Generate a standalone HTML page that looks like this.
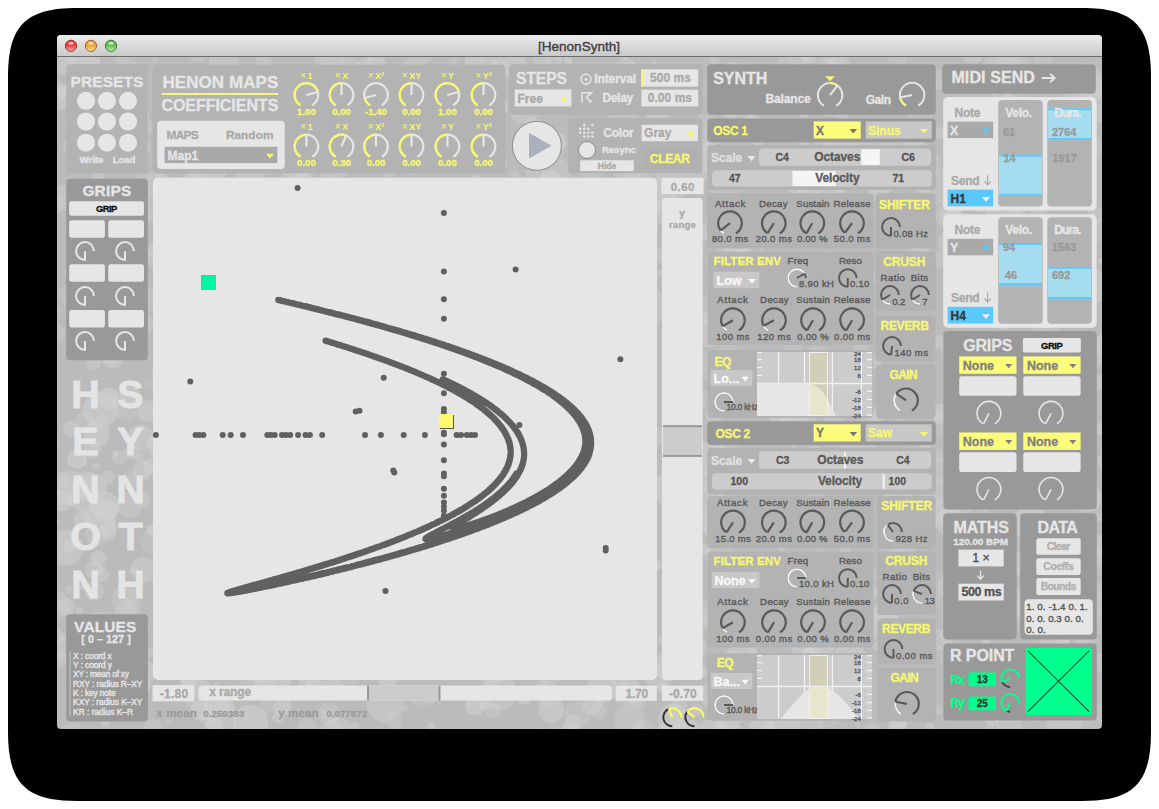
<!DOCTYPE html><html><head><meta charset="utf-8"><style>html,body{margin:0;padding:0;background:#fff;overflow:hidden}svg{display:block}</style></head><body><svg width="1159" height="809" viewBox="0 0 1159 809" font-family='"Liberation Sans", sans-serif'>
<defs><linearGradient id="tb" x1="0" y1="0" x2="0" y2="1"><stop offset="0" stop-color="#ececec"/><stop offset="1" stop-color="#c9c9c9"/></linearGradient><clipPath id="win"><rect x="57" y="57" width="1045" height="672"/></clipPath><clipPath id="plot"><rect x="153" y="177.5" width="504" height="502.5" rx="5"/></clipPath></defs>
<rect x="0" y="0" width="1159" height="809" rx="0" fill="#ffffff" />
<path d="M77 8H1082C1133.3 8 1151 25.7 1151 77V732C1151 783.3 1133.3 801 1082 801H77C25.7 801 8 783.3 8 732V77C8 25.7 25.7 8 77 8Z" fill="#000"/>
<rect x="57" y="35" width="1045" height="694" rx="4" fill="#bbbbbb" />
<g clip-path="url(#win)">
<circle cx="393.26" cy="154.09" r="15" fill="#d2d2d2" fill-opacity="0.26"/>
<circle cx="920.55" cy="114.95" r="13" fill="#d2d2d2" fill-opacity="0.27"/>
<circle cx="587.88" cy="75.87" r="9" fill="#d2d2d2" fill-opacity="0.38"/>
<circle cx="305.1" cy="430.22" r="3" fill="#d2d2d2" fill-opacity="0.5"/>
<circle cx="181.23" cy="204.03" r="15" fill="#d2d2d2" fill-opacity="0.42"/>
<circle cx="115.57" cy="454.02" r="3" fill="#d2d2d2" fill-opacity="0.54"/>
<circle cx="99.38" cy="642.34" r="7" fill="#d2d2d2" fill-opacity="0.38"/>
<circle cx="623.13" cy="443.93" r="11" fill="#d2d2d2" fill-opacity="0.49"/>
<circle cx="241.57" cy="451.3" r="15" fill="#d2d2d2" fill-opacity="0.31"/>
<circle cx="153.28" cy="541.36" r="13" fill="#d2d2d2" fill-opacity="0.27"/>
<circle cx="268.32" cy="519.48" r="9" fill="#d2d2d2" fill-opacity="0.48"/>
<circle cx="543.54" cy="687.17" r="8" fill="#d2d2d2" fill-opacity="0.34"/>
<circle cx="892.04" cy="532.31" r="6" fill="#d2d2d2" fill-opacity="0.27"/>
<circle cx="368.26" cy="391.63" r="8" fill="#d2d2d2" fill-opacity="0.47"/>
<circle cx="355.21" cy="726.32" r="4" fill="#d2d2d2" fill-opacity="0.4"/>
<circle cx="224.86" cy="286.02" r="10" fill="#d2d2d2" fill-opacity="0.38"/>
<circle cx="1069.74" cy="103.56" r="11" fill="#d2d2d2" fill-opacity="0.42"/>
<circle cx="978.01" cy="266.49" r="18" fill="#d2d2d2" fill-opacity="0.36"/>
<circle cx="576.48" cy="599.86" r="4" fill="#d2d2d2" fill-opacity="0.5"/>
<circle cx="1051.36" cy="377.13" r="15" fill="#d2d2d2" fill-opacity="0.27"/>
<circle cx="825.03" cy="263.63" r="13" fill="#d2d2d2" fill-opacity="0.55"/>
<circle cx="921.24" cy="246.37" r="9" fill="#d2d2d2" fill-opacity="0.52"/>
<circle cx="417.83" cy="699.05" r="8" fill="#d2d2d2" fill-opacity="0.3"/>
<circle cx="174.12" cy="90.68" r="7" fill="#d2d2d2" fill-opacity="0.29"/>
<circle cx="312.47" cy="319.76" r="10" fill="#d2d2d2" fill-opacity="0.27"/>
<circle cx="526.14" cy="429.11" r="5" fill="#d2d2d2" fill-opacity="0.5"/>
<circle cx="965.82" cy="242.11" r="9" fill="#d2d2d2" fill-opacity="0.55"/>
<circle cx="773.69" cy="312.5" r="6" fill="#d2d2d2" fill-opacity="0.3"/>
<circle cx="236.79" cy="210.05" r="6" fill="#d2d2d2" fill-opacity="0.25"/>
<circle cx="930.96" cy="175.82" r="7" fill="#d2d2d2" fill-opacity="0.25"/>
<circle cx="494.08" cy="304.78" r="13" fill="#d2d2d2" fill-opacity="0.35"/>
<circle cx="183.02" cy="642.85" r="13" fill="#d2d2d2" fill-opacity="0.45"/>
<circle cx="834.17" cy="365.08" r="15" fill="#d2d2d2" fill-opacity="0.49"/>
<circle cx="465.92" cy="325.3" r="4" fill="#d2d2d2" fill-opacity="0.39"/>
<circle cx="474.47" cy="181.52" r="6" fill="#d2d2d2" fill-opacity="0.38"/>
<circle cx="166.52" cy="464.5" r="4" fill="#d2d2d2" fill-opacity="0.25"/>
<circle cx="210.34" cy="120.01" r="8" fill="#d2d2d2" fill-opacity="0.43"/>
<circle cx="124.53" cy="193.49" r="9" fill="#d2d2d2" fill-opacity="0.29"/>
<circle cx="317.39" cy="289.7" r="8" fill="#d2d2d2" fill-opacity="0.39"/>
<circle cx="172.27" cy="386.77" r="10" fill="#d2d2d2" fill-opacity="0.39"/>
<circle cx="380.56" cy="149.44" r="18" fill="#d2d2d2" fill-opacity="0.35"/>
<circle cx="330.64" cy="621.91" r="5" fill="#d2d2d2" fill-opacity="0.4"/>
<circle cx="267.53" cy="706.89" r="8" fill="#d2d2d2" fill-opacity="0.29"/>
<circle cx="625.76" cy="68.66" r="11" fill="#d2d2d2" fill-opacity="0.34"/>
<circle cx="731.49" cy="112.8" r="7" fill="#d2d2d2" fill-opacity="0.41"/>
<circle cx="1012.75" cy="295.43" r="6" fill="#d2d2d2" fill-opacity="0.41"/>
<circle cx="875.8" cy="277.47" r="6" fill="#d2d2d2" fill-opacity="0.43"/>
<circle cx="885.7" cy="573.24" r="6" fill="#d2d2d2" fill-opacity="0.49"/>
<circle cx="917.43" cy="560.51" r="6" fill="#d2d2d2" fill-opacity="0.31"/>
<circle cx="572.35" cy="554.39" r="3" fill="#d2d2d2" fill-opacity="0.49"/>
<circle cx="550.57" cy="183.62" r="13" fill="#d2d2d2" fill-opacity="0.54"/>
<circle cx="524.06" cy="696.54" r="8" fill="#d2d2d2" fill-opacity="0.54"/>
<circle cx="436.51" cy="202.12" r="6" fill="#d2d2d2" fill-opacity="0.39"/>
<circle cx="408" cy="383.03" r="13" fill="#d2d2d2" fill-opacity="0.5"/>
<circle cx="558.24" cy="500.55" r="15" fill="#d2d2d2" fill-opacity="0.28"/>
<circle cx="750.22" cy="677.75" r="18" fill="#d2d2d2" fill-opacity="0.48"/>
<circle cx="556.71" cy="173.18" r="15" fill="#d2d2d2" fill-opacity="0.35"/>
<circle cx="898.87" cy="720.44" r="9" fill="#d2d2d2" fill-opacity="0.39"/>
<circle cx="837.95" cy="108.59" r="5" fill="#d2d2d2" fill-opacity="0.3"/>
<circle cx="184.66" cy="154.29" r="10" fill="#d2d2d2" fill-opacity="0.49"/>
<circle cx="204.94" cy="620.29" r="10" fill="#d2d2d2" fill-opacity="0.45"/>
<circle cx="421.43" cy="428.58" r="5" fill="#d2d2d2" fill-opacity="0.26"/>
<circle cx="897.32" cy="551.2" r="4" fill="#d2d2d2" fill-opacity="0.41"/>
<circle cx="1039.64" cy="349.33" r="6" fill="#d2d2d2" fill-opacity="0.5"/>
<circle cx="273.7" cy="223.77" r="7" fill="#d2d2d2" fill-opacity="0.4"/>
<circle cx="859.5" cy="274.93" r="11" fill="#d2d2d2" fill-opacity="0.38"/>
<circle cx="188.94" cy="677.91" r="8" fill="#d2d2d2" fill-opacity="0.52"/>
<circle cx="752.22" cy="612.38" r="11" fill="#d2d2d2" fill-opacity="0.38"/>
<circle cx="1022.78" cy="396.14" r="11" fill="#d2d2d2" fill-opacity="0.3"/>
<circle cx="591.18" cy="652.24" r="5" fill="#d2d2d2" fill-opacity="0.43"/>
<circle cx="872.6" cy="153.36" r="5" fill="#d2d2d2" fill-opacity="0.39"/>
<circle cx="818.7" cy="433.97" r="8" fill="#d2d2d2" fill-opacity="0.45"/>
<circle cx="612.57" cy="382.92" r="4" fill="#d2d2d2" fill-opacity="0.51"/>
<circle cx="110.23" cy="182" r="3" fill="#d2d2d2" fill-opacity="0.48"/>
<circle cx="588.18" cy="437.59" r="4" fill="#d2d2d2" fill-opacity="0.38"/>
<circle cx="699.28" cy="398.83" r="11" fill="#d2d2d2" fill-opacity="0.31"/>
<circle cx="343.82" cy="400.63" r="10" fill="#d2d2d2" fill-opacity="0.4"/>
<circle cx="312.52" cy="411.01" r="7" fill="#d2d2d2" fill-opacity="0.53"/>
<circle cx="996.32" cy="189.79" r="10" fill="#d2d2d2" fill-opacity="0.29"/>
<circle cx="178.92" cy="355.06" r="4" fill="#d2d2d2" fill-opacity="0.45"/>
<circle cx="504.04" cy="196.76" r="7" fill="#d2d2d2" fill-opacity="0.49"/>
<circle cx="1000.85" cy="156.57" r="18" fill="#d2d2d2" fill-opacity="0.44"/>
<circle cx="438.15" cy="224.64" r="5" fill="#d2d2d2" fill-opacity="0.54"/>
<circle cx="282.76" cy="707.23" r="9" fill="#d2d2d2" fill-opacity="0.52"/>
<circle cx="222.56" cy="510.8" r="6" fill="#d2d2d2" fill-opacity="0.3"/>
<circle cx="507.41" cy="405.77" r="8" fill="#d2d2d2" fill-opacity="0.38"/>
<circle cx="428.01" cy="113.61" r="8" fill="#d2d2d2" fill-opacity="0.26"/>
<circle cx="637.29" cy="353.92" r="3" fill="#d2d2d2" fill-opacity="0.37"/>
<circle cx="598.48" cy="253.86" r="4" fill="#d2d2d2" fill-opacity="0.28"/>
<circle cx="1023.66" cy="207.7" r="4" fill="#d2d2d2" fill-opacity="0.28"/>
<circle cx="338.24" cy="675.07" r="5" fill="#d2d2d2" fill-opacity="0.33"/>
<circle cx="187.33" cy="341.36" r="15" fill="#d2d2d2" fill-opacity="0.5"/>
<circle cx="324.13" cy="153.06" r="11" fill="#d2d2d2" fill-opacity="0.42"/>
<circle cx="792.44" cy="111.73" r="3" fill="#d2d2d2" fill-opacity="0.49"/>
<circle cx="244.34" cy="667.75" r="7" fill="#d2d2d2" fill-opacity="0.53"/>
<circle cx="722.51" cy="603.12" r="4" fill="#d2d2d2" fill-opacity="0.43"/>
<circle cx="285.75" cy="232.47" r="4" fill="#d2d2d2" fill-opacity="0.39"/>
<circle cx="409.5" cy="431.61" r="7" fill="#d2d2d2" fill-opacity="0.44"/>
<circle cx="95.8" cy="539.58" r="4" fill="#d2d2d2" fill-opacity="0.54"/>
<circle cx="327.61" cy="174.99" r="7" fill="#d2d2d2" fill-opacity="0.44"/>
<circle cx="612.95" cy="192.05" r="10" fill="#d2d2d2" fill-opacity="0.4"/>
<circle cx="238.57" cy="289.43" r="3" fill="#d2d2d2" fill-opacity="0.55"/>
<circle cx="89.17" cy="62.72" r="11" fill="#d2d2d2" fill-opacity="0.42"/>
<circle cx="250.82" cy="377.58" r="10" fill="#d2d2d2" fill-opacity="0.28"/>
<circle cx="918.06" cy="348.2" r="10" fill="#d2d2d2" fill-opacity="0.41"/>
<circle cx="992.05" cy="719.52" r="7" fill="#d2d2d2" fill-opacity="0.46"/>
<circle cx="1091.39" cy="286.47" r="18" fill="#d2d2d2" fill-opacity="0.47"/>
<circle cx="198.1" cy="732.71" r="3" fill="#d2d2d2" fill-opacity="0.5"/>
<circle cx="65.11" cy="481.56" r="7" fill="#d2d2d2" fill-opacity="0.38"/>
<circle cx="108.73" cy="509.01" r="9" fill="#d2d2d2" fill-opacity="0.51"/>
<circle cx="760.78" cy="244.53" r="6" fill="#d2d2d2" fill-opacity="0.46"/>
<circle cx="97.95" cy="177.89" r="7" fill="#d2d2d2" fill-opacity="0.38"/>
<circle cx="329.04" cy="713.63" r="11" fill="#d2d2d2" fill-opacity="0.35"/>
<circle cx="86.51" cy="658.85" r="6" fill="#d2d2d2" fill-opacity="0.36"/>
<circle cx="51.13" cy="313.32" r="10" fill="#d2d2d2" fill-opacity="0.33"/>
<circle cx="745.38" cy="221.24" r="3" fill="#d2d2d2" fill-opacity="0.28"/>
<circle cx="916.07" cy="149.27" r="13" fill="#d2d2d2" fill-opacity="0.26"/>
<circle cx="73.84" cy="259.93" r="6" fill="#d2d2d2" fill-opacity="0.28"/>
<circle cx="1065.1" cy="638.74" r="5" fill="#d2d2d2" fill-opacity="0.45"/>
<circle cx="808.95" cy="656.57" r="9" fill="#d2d2d2" fill-opacity="0.48"/>
<circle cx="813.92" cy="390.99" r="7" fill="#d2d2d2" fill-opacity="0.47"/>
<circle cx="731.81" cy="80.21" r="18" fill="#d2d2d2" fill-opacity="0.52"/>
<circle cx="714.97" cy="556.36" r="11" fill="#d2d2d2" fill-opacity="0.29"/>
<circle cx="605.18" cy="398.02" r="3" fill="#d2d2d2" fill-opacity="0.5"/>
<circle cx="669.11" cy="666.05" r="15" fill="#d2d2d2" fill-opacity="0.54"/>
<circle cx="731.46" cy="108.71" r="3" fill="#d2d2d2" fill-opacity="0.29"/>
<circle cx="432.35" cy="122.39" r="10" fill="#d2d2d2" fill-opacity="0.42"/>
<circle cx="715.43" cy="482.1" r="15" fill="#d2d2d2" fill-opacity="0.32"/>
<circle cx="329.62" cy="365.29" r="4" fill="#d2d2d2" fill-opacity="0.47"/>
<circle cx="583.15" cy="419.29" r="15" fill="#d2d2d2" fill-opacity="0.41"/>
<circle cx="840.47" cy="376.96" r="4" fill="#d2d2d2" fill-opacity="0.5"/>
<circle cx="298.87" cy="571.94" r="6" fill="#d2d2d2" fill-opacity="0.47"/>
<circle cx="1084.28" cy="390.82" r="9" fill="#d2d2d2" fill-opacity="0.27"/>
<circle cx="1015.09" cy="248.25" r="3" fill="#d2d2d2" fill-opacity="0.44"/>
<circle cx="731.33" cy="103.46" r="5" fill="#d2d2d2" fill-opacity="0.35"/>
<circle cx="740.63" cy="528.09" r="13" fill="#d2d2d2" fill-opacity="0.42"/>
<circle cx="63.22" cy="91.86" r="7" fill="#d2d2d2" fill-opacity="0.54"/>
<circle cx="155.49" cy="200.21" r="10" fill="#d2d2d2" fill-opacity="0.34"/>
<circle cx="597.53" cy="370.62" r="10" fill="#d2d2d2" fill-opacity="0.48"/>
<circle cx="1102.9" cy="428.86" r="7" fill="#d2d2d2" fill-opacity="0.54"/>
<circle cx="1042.43" cy="62.08" r="10" fill="#d2d2d2" fill-opacity="0.27"/>
<circle cx="587.02" cy="736.28" r="7" fill="#d2d2d2" fill-opacity="0.37"/>
<circle cx="1021.55" cy="692.07" r="4" fill="#d2d2d2" fill-opacity="0.42"/>
<circle cx="200.25" cy="411.61" r="8" fill="#d2d2d2" fill-opacity="0.29"/>
<circle cx="919.43" cy="401.03" r="4" fill="#d2d2d2" fill-opacity="0.46"/>
<circle cx="295.27" cy="669.42" r="10" fill="#d2d2d2" fill-opacity="0.37"/>
<circle cx="218.61" cy="705.47" r="15" fill="#d2d2d2" fill-opacity="0.39"/>
<circle cx="370.07" cy="147.09" r="8" fill="#d2d2d2" fill-opacity="0.36"/>
<circle cx="178.16" cy="278.61" r="8" fill="#d2d2d2" fill-opacity="0.48"/>
<circle cx="939.46" cy="132.83" r="6" fill="#d2d2d2" fill-opacity="0.46"/>
<circle cx="1005.66" cy="249.98" r="8" fill="#d2d2d2" fill-opacity="0.27"/>
<circle cx="463.57" cy="650.28" r="4" fill="#d2d2d2" fill-opacity="0.36"/>
<circle cx="503.74" cy="239.86" r="3" fill="#d2d2d2" fill-opacity="0.33"/>
<circle cx="104.71" cy="506.76" r="15" fill="#d2d2d2" fill-opacity="0.53"/>
<circle cx="314.28" cy="233.35" r="11" fill="#d2d2d2" fill-opacity="0.34"/>
<circle cx="869.57" cy="591.75" r="9" fill="#d2d2d2" fill-opacity="0.52"/>
<circle cx="910.68" cy="485.32" r="11" fill="#d2d2d2" fill-opacity="0.41"/>
<circle cx="812.75" cy="84.14" r="18" fill="#d2d2d2" fill-opacity="0.37"/>
<circle cx="701.81" cy="145.62" r="7" fill="#d2d2d2" fill-opacity="0.4"/>
<circle cx="1016.62" cy="429.57" r="5" fill="#d2d2d2" fill-opacity="0.39"/>
<circle cx="414.28" cy="255.46" r="18" fill="#d2d2d2" fill-opacity="0.47"/>
<circle cx="741.99" cy="330.28" r="6" fill="#d2d2d2" fill-opacity="0.34"/>
<circle cx="640.76" cy="322.11" r="5" fill="#d2d2d2" fill-opacity="0.44"/>
<circle cx="129.68" cy="395.42" r="10" fill="#d2d2d2" fill-opacity="0.42"/>
<circle cx="530.17" cy="279.66" r="10" fill="#d2d2d2" fill-opacity="0.38"/>
<circle cx="630.65" cy="218.42" r="5" fill="#d2d2d2" fill-opacity="0.35"/>
<circle cx="146.56" cy="215" r="7" fill="#d2d2d2" fill-opacity="0.49"/>
<circle cx="264.27" cy="63.86" r="9" fill="#d2d2d2" fill-opacity="0.36"/>
<circle cx="840.59" cy="194.9" r="7" fill="#d2d2d2" fill-opacity="0.35"/>
<circle cx="115.78" cy="241.49" r="8" fill="#d2d2d2" fill-opacity="0.29"/>
<circle cx="583.6" cy="484.44" r="6" fill="#d2d2d2" fill-opacity="0.28"/>
<circle cx="1000.6" cy="315.35" r="15" fill="#d2d2d2" fill-opacity="0.38"/>
<circle cx="1061.18" cy="635.59" r="3" fill="#d2d2d2" fill-opacity="0.29"/>
<circle cx="500.71" cy="576.95" r="10" fill="#d2d2d2" fill-opacity="0.54"/>
<circle cx="569.21" cy="100.47" r="11" fill="#d2d2d2" fill-opacity="0.51"/>
<circle cx="1080.58" cy="221.44" r="4" fill="#d2d2d2" fill-opacity="0.32"/>
<circle cx="211.19" cy="720.6" r="4" fill="#d2d2d2" fill-opacity="0.53"/>
<circle cx="815.04" cy="496.67" r="10" fill="#d2d2d2" fill-opacity="0.28"/>
<circle cx="873.47" cy="50.94" r="5" fill="#d2d2d2" fill-opacity="0.32"/>
<circle cx="1025.12" cy="495.4" r="7" fill="#d2d2d2" fill-opacity="0.54"/>
<circle cx="714.06" cy="414.49" r="9" fill="#d2d2d2" fill-opacity="0.46"/>
<circle cx="168.86" cy="98.54" r="11" fill="#d2d2d2" fill-opacity="0.53"/>
<circle cx="253.2" cy="230.01" r="13" fill="#d2d2d2" fill-opacity="0.25"/>
<circle cx="619.72" cy="737.5" r="7" fill="#d2d2d2" fill-opacity="0.54"/>
<circle cx="733.25" cy="659.8" r="10" fill="#d2d2d2" fill-opacity="0.41"/>
<circle cx="629.82" cy="70.2" r="9" fill="#d2d2d2" fill-opacity="0.46"/>
<circle cx="375.84" cy="65.03" r="10" fill="#d2d2d2" fill-opacity="0.52"/>
<circle cx="736" cy="105.95" r="6" fill="#d2d2d2" fill-opacity="0.45"/>
<circle cx="1030.67" cy="206.48" r="3" fill="#d2d2d2" fill-opacity="0.46"/>
<circle cx="811.43" cy="300" r="9" fill="#d2d2d2" fill-opacity="0.31"/>
<circle cx="894.89" cy="560" r="11" fill="#d2d2d2" fill-opacity="0.27"/>
<circle cx="575.44" cy="188.29" r="6" fill="#d2d2d2" fill-opacity="0.32"/>
<circle cx="284.73" cy="574.72" r="7" fill="#d2d2d2" fill-opacity="0.28"/>
<circle cx="711.01" cy="470.97" r="6" fill="#d2d2d2" fill-opacity="0.4"/>
<circle cx="1015.02" cy="88.93" r="13" fill="#d2d2d2" fill-opacity="0.29"/>
<circle cx="467.07" cy="196.93" r="13" fill="#d2d2d2" fill-opacity="0.29"/>
<circle cx="104.95" cy="91.49" r="9" fill="#d2d2d2" fill-opacity="0.38"/>
<circle cx="804.76" cy="266.8" r="4" fill="#d2d2d2" fill-opacity="0.55"/>
<circle cx="1037.49" cy="277.18" r="5" fill="#d2d2d2" fill-opacity="0.45"/>
<circle cx="606.29" cy="372.65" r="7" fill="#d2d2d2" fill-opacity="0.45"/>
<circle cx="451.34" cy="307.98" r="8" fill="#d2d2d2" fill-opacity="0.38"/>
<circle cx="165.5" cy="103.99" r="4" fill="#d2d2d2" fill-opacity="0.36"/>
<circle cx="1062.85" cy="135.36" r="6" fill="#d2d2d2" fill-opacity="0.36"/>
<circle cx="864.86" cy="263" r="9" fill="#d2d2d2" fill-opacity="0.28"/>
<circle cx="797.57" cy="185.04" r="11" fill="#d2d2d2" fill-opacity="0.53"/>
<circle cx="254.61" cy="301.33" r="10" fill="#d2d2d2" fill-opacity="0.26"/>
<circle cx="485.45" cy="610.16" r="9" fill="#d2d2d2" fill-opacity="0.26"/>
<circle cx="86.95" cy="93.18" r="3" fill="#d2d2d2" fill-opacity="0.33"/>
<circle cx="842.12" cy="670" r="8" fill="#d2d2d2" fill-opacity="0.36"/>
<circle cx="405.07" cy="708.1" r="3" fill="#d2d2d2" fill-opacity="0.33"/>
<circle cx="809.63" cy="268.37" r="7" fill="#d2d2d2" fill-opacity="0.34"/>
<circle cx="814.87" cy="460.94" r="15" fill="#d2d2d2" fill-opacity="0.53"/>
<circle cx="119.25" cy="619.95" r="4" fill="#d2d2d2" fill-opacity="0.39"/>
<circle cx="1064.18" cy="708.2" r="9" fill="#d2d2d2" fill-opacity="0.49"/>
<circle cx="1018.36" cy="612.21" r="5" fill="#d2d2d2" fill-opacity="0.53"/>
<circle cx="243.92" cy="603.77" r="18" fill="#d2d2d2" fill-opacity="0.34"/>
<circle cx="783.64" cy="154.41" r="6" fill="#d2d2d2" fill-opacity="0.35"/>
<circle cx="388.72" cy="299.68" r="13" fill="#d2d2d2" fill-opacity="0.27"/>
<circle cx="259.15" cy="569.49" r="6" fill="#d2d2d2" fill-opacity="0.37"/>
<circle cx="738.52" cy="382.37" r="11" fill="#d2d2d2" fill-opacity="0.35"/>
<circle cx="1089.07" cy="659.6" r="4" fill="#d2d2d2" fill-opacity="0.33"/>
<circle cx="139.13" cy="116.53" r="10" fill="#d2d2d2" fill-opacity="0.55"/>
<circle cx="1080.44" cy="169.5" r="5" fill="#d2d2d2" fill-opacity="0.38"/>
<circle cx="707.53" cy="515.13" r="18" fill="#d2d2d2" fill-opacity="0.41"/>
<circle cx="870.31" cy="574.1" r="7" fill="#d2d2d2" fill-opacity="0.34"/>
<circle cx="650.9" cy="307.35" r="18" fill="#d2d2d2" fill-opacity="0.33"/>
<circle cx="515.76" cy="178.16" r="6" fill="#d2d2d2" fill-opacity="0.3"/>
<circle cx="987.22" cy="449.01" r="8" fill="#d2d2d2" fill-opacity="0.27"/>
<circle cx="316.75" cy="219.7" r="11" fill="#d2d2d2" fill-opacity="0.32"/>
<circle cx="906.95" cy="500.8" r="3" fill="#d2d2d2" fill-opacity="0.28"/>
<circle cx="553.25" cy="615.18" r="10" fill="#d2d2d2" fill-opacity="0.52"/>
<circle cx="92.78" cy="252.64" r="4" fill="#d2d2d2" fill-opacity="0.27"/>
<circle cx="686.52" cy="621.27" r="6" fill="#d2d2d2" fill-opacity="0.53"/>
<circle cx="444.57" cy="647.63" r="10" fill="#d2d2d2" fill-opacity="0.43"/>
<circle cx="871.5" cy="508.68" r="3" fill="#d2d2d2" fill-opacity="0.28"/>
<circle cx="681.92" cy="477.76" r="6" fill="#d2d2d2" fill-opacity="0.26"/>
<circle cx="410.42" cy="80.47" r="7" fill="#d2d2d2" fill-opacity="0.26"/>
<circle cx="826.16" cy="680.63" r="3" fill="#d2d2d2" fill-opacity="0.5"/>
<circle cx="483.53" cy="306.55" r="13" fill="#d2d2d2" fill-opacity="0.34"/>
<circle cx="265.61" cy="598.74" r="11" fill="#d2d2d2" fill-opacity="0.4"/>
<circle cx="482.66" cy="599.13" r="15" fill="#d2d2d2" fill-opacity="0.42"/>
<circle cx="727.53" cy="112.9" r="5" fill="#d2d2d2" fill-opacity="0.37"/>
<circle cx="337.44" cy="731.88" r="15" fill="#d2d2d2" fill-opacity="0.34"/>
<circle cx="1060.38" cy="265.53" r="13" fill="#d2d2d2" fill-opacity="0.52"/>
<circle cx="488.92" cy="62.57" r="8" fill="#d2d2d2" fill-opacity="0.44"/>
<circle cx="464.17" cy="329.43" r="3" fill="#d2d2d2" fill-opacity="0.38"/>
<circle cx="215.96" cy="128.34" r="4" fill="#d2d2d2" fill-opacity="0.37"/>
<circle cx="985.81" cy="368.03" r="5" fill="#d2d2d2" fill-opacity="0.29"/>
<circle cx="104.8" cy="148.32" r="9" fill="#d2d2d2" fill-opacity="0.28"/>
<circle cx="709.53" cy="305.88" r="11" fill="#d2d2d2" fill-opacity="0.3"/>
<circle cx="418.82" cy="161.65" r="5" fill="#d2d2d2" fill-opacity="0.53"/>
<circle cx="165.32" cy="388.45" r="6" fill="#d2d2d2" fill-opacity="0.34"/>
<circle cx="937.53" cy="80.01" r="10" fill="#d2d2d2" fill-opacity="0.34"/>
<circle cx="694.1" cy="489.09" r="4" fill="#d2d2d2" fill-opacity="0.52"/>
<circle cx="707.56" cy="618.94" r="5" fill="#d2d2d2" fill-opacity="0.44"/>
<circle cx="957.98" cy="478.53" r="13" fill="#d2d2d2" fill-opacity="0.5"/>
<circle cx="928.94" cy="176.25" r="6" fill="#d2d2d2" fill-opacity="0.26"/>
<circle cx="1044.86" cy="157.97" r="8" fill="#d2d2d2" fill-opacity="0.29"/>
<circle cx="311.88" cy="550.17" r="6" fill="#d2d2d2" fill-opacity="0.26"/>
<circle cx="646.08" cy="572.65" r="3" fill="#d2d2d2" fill-opacity="0.45"/>
<circle cx="393.65" cy="318.99" r="10" fill="#d2d2d2" fill-opacity="0.42"/>
<circle cx="714.66" cy="261.29" r="9" fill="#d2d2d2" fill-opacity="0.34"/>
<circle cx="314.21" cy="318.56" r="8" fill="#d2d2d2" fill-opacity="0.38"/>
<circle cx="514.65" cy="66.13" r="13" fill="#d2d2d2" fill-opacity="0.55"/>
<circle cx="543.19" cy="358.31" r="13" fill="#d2d2d2" fill-opacity="0.48"/>
<circle cx="535.79" cy="173.9" r="10" fill="#d2d2d2" fill-opacity="0.37"/>
<circle cx="121.15" cy="297.42" r="8" fill="#d2d2d2" fill-opacity="0.28"/>
<circle cx="518.49" cy="402.01" r="3" fill="#d2d2d2" fill-opacity="0.26"/>
<circle cx="188.09" cy="686.27" r="8" fill="#d2d2d2" fill-opacity="0.48"/>
<circle cx="592.17" cy="87.44" r="11" fill="#d2d2d2" fill-opacity="0.52"/>
<circle cx="741.91" cy="591.13" r="3" fill="#d2d2d2" fill-opacity="0.51"/>
<circle cx="1105.89" cy="555.14" r="4" fill="#d2d2d2" fill-opacity="0.31"/>
<circle cx="1090.63" cy="389.39" r="5" fill="#d2d2d2" fill-opacity="0.46"/>
<circle cx="814.34" cy="202.58" r="8" fill="#d2d2d2" fill-opacity="0.43"/>
<circle cx="317.35" cy="273.45" r="13" fill="#d2d2d2" fill-opacity="0.33"/>
<circle cx="914.56" cy="149.06" r="11" fill="#d2d2d2" fill-opacity="0.54"/>
<circle cx="558.91" cy="458.4" r="13" fill="#d2d2d2" fill-opacity="0.4"/>
<circle cx="388.22" cy="75.41" r="5" fill="#d2d2d2" fill-opacity="0.37"/>
<circle cx="724.77" cy="241.96" r="8" fill="#d2d2d2" fill-opacity="0.52"/>
<circle cx="228.87" cy="591.56" r="4" fill="#d2d2d2" fill-opacity="0.48"/>
<circle cx="101.49" cy="642.22" r="10" fill="#d2d2d2" fill-opacity="0.42"/>
<circle cx="664.85" cy="658.95" r="4" fill="#d2d2d2" fill-opacity="0.33"/>
<circle cx="617.84" cy="641.05" r="18" fill="#d2d2d2" fill-opacity="0.49"/>
<circle cx="330.64" cy="733.44" r="13" fill="#d2d2d2" fill-opacity="0.29"/>
<circle cx="400.68" cy="106.16" r="6" fill="#d2d2d2" fill-opacity="0.3"/>
<circle cx="838.21" cy="83.32" r="11" fill="#d2d2d2" fill-opacity="0.33"/>
<circle cx="727.59" cy="729" r="13" fill="#d2d2d2" fill-opacity="0.53"/>
<circle cx="999.47" cy="555.8" r="18" fill="#d2d2d2" fill-opacity="0.26"/>
<circle cx="208.33" cy="475.08" r="9" fill="#d2d2d2" fill-opacity="0.38"/>
<circle cx="435.94" cy="82.97" r="10" fill="#d2d2d2" fill-opacity="0.32"/>
<circle cx="742.29" cy="65.38" r="3" fill="#d2d2d2" fill-opacity="0.42"/>
<circle cx="371.96" cy="410.93" r="11" fill="#d2d2d2" fill-opacity="0.32"/>
<circle cx="668.61" cy="456.47" r="6" fill="#d2d2d2" fill-opacity="0.36"/>
<circle cx="928.18" cy="159.45" r="3" fill="#d2d2d2" fill-opacity="0.53"/>
<circle cx="308.2" cy="153.03" r="4" fill="#d2d2d2" fill-opacity="0.27"/>
<circle cx="203.37" cy="509.18" r="7" fill="#d2d2d2" fill-opacity="0.37"/>
<circle cx="330.09" cy="57.93" r="15" fill="#d2d2d2" fill-opacity="0.5"/>
<circle cx="996.24" cy="460.36" r="13" fill="#d2d2d2" fill-opacity="0.38"/>
<circle cx="1043.39" cy="556.13" r="6" fill="#d2d2d2" fill-opacity="0.3"/>
<circle cx="50.42" cy="92.45" r="3" fill="#d2d2d2" fill-opacity="0.37"/>
<circle cx="301.93" cy="90.28" r="4" fill="#d2d2d2" fill-opacity="0.25"/>
<circle cx="633.98" cy="699.24" r="5" fill="#d2d2d2" fill-opacity="0.37"/>
<circle cx="599.35" cy="493.46" r="15" fill="#d2d2d2" fill-opacity="0.44"/>
<circle cx="912.18" cy="170.5" r="7" fill="#d2d2d2" fill-opacity="0.27"/>
<circle cx="713.52" cy="735.9" r="18" fill="#d2d2d2" fill-opacity="0.48"/>
<circle cx="808.32" cy="54.38" r="9" fill="#d2d2d2" fill-opacity="0.47"/>
<circle cx="543.18" cy="561.81" r="10" fill="#d2d2d2" fill-opacity="0.3"/>
<circle cx="1106.41" cy="230.38" r="15" fill="#d2d2d2" fill-opacity="0.26"/>
<circle cx="405.65" cy="567.26" r="18" fill="#d2d2d2" fill-opacity="0.53"/>
<circle cx="329.1" cy="86.25" r="15" fill="#d2d2d2" fill-opacity="0.42"/>
<circle cx="512.22" cy="594.03" r="11" fill="#d2d2d2" fill-opacity="0.54"/>
<circle cx="363.35" cy="690.71" r="6" fill="#d2d2d2" fill-opacity="0.28"/>
<circle cx="587.87" cy="167.14" r="6" fill="#d2d2d2" fill-opacity="0.5"/>
<circle cx="264.94" cy="159.84" r="8" fill="#d2d2d2" fill-opacity="0.31"/>
<circle cx="462.03" cy="464.85" r="9" fill="#d2d2d2" fill-opacity="0.52"/>
<circle cx="718.54" cy="528.06" r="15" fill="#d2d2d2" fill-opacity="0.5"/>
<circle cx="618.54" cy="375.78" r="11" fill="#d2d2d2" fill-opacity="0.46"/>
<circle cx="958.97" cy="351.68" r="18" fill="#d2d2d2" fill-opacity="0.32"/>
<circle cx="987.84" cy="594.55" r="9" fill="#d2d2d2" fill-opacity="0.44"/>
<circle cx="132.47" cy="678.44" r="5" fill="#d2d2d2" fill-opacity="0.26"/>
<circle cx="168.61" cy="479.16" r="5" fill="#d2d2d2" fill-opacity="0.35"/>
<circle cx="200.35" cy="69.83" r="3" fill="#d2d2d2" fill-opacity="0.29"/>
<circle cx="732.16" cy="79.43" r="4" fill="#d2d2d2" fill-opacity="0.47"/>
<circle cx="119.71" cy="457.43" r="8" fill="#d2d2d2" fill-opacity="0.31"/>
<circle cx="1061.84" cy="418.39" r="15" fill="#d2d2d2" fill-opacity="0.27"/>
<circle cx="969.86" cy="680.94" r="9" fill="#d2d2d2" fill-opacity="0.28"/>
<circle cx="268.07" cy="127.26" r="3" fill="#d2d2d2" fill-opacity="0.53"/>
<circle cx="1015.78" cy="570.09" r="4" fill="#d2d2d2" fill-opacity="0.5"/>
<circle cx="719.43" cy="248.28" r="4" fill="#d2d2d2" fill-opacity="0.29"/>
<circle cx="889.49" cy="495.96" r="7" fill="#d2d2d2" fill-opacity="0.35"/>
<circle cx="499.19" cy="64.43" r="7" fill="#d2d2d2" fill-opacity="0.53"/>
<circle cx="101.31" cy="574.3" r="8" fill="#d2d2d2" fill-opacity="0.48"/>
<circle cx="688.13" cy="378.5" r="7" fill="#d2d2d2" fill-opacity="0.44"/>
<circle cx="82.84" cy="334.92" r="9" fill="#d2d2d2" fill-opacity="0.41"/>
<circle cx="154.2" cy="373.57" r="3" fill="#d2d2d2" fill-opacity="0.41"/>
<circle cx="279.57" cy="644.95" r="4" fill="#d2d2d2" fill-opacity="0.42"/>
<circle cx="354.34" cy="350.88" r="11" fill="#d2d2d2" fill-opacity="0.31"/>
<circle cx="857.91" cy="724.73" r="3" fill="#d2d2d2" fill-opacity="0.35"/>
<circle cx="151.43" cy="529.69" r="5" fill="#d2d2d2" fill-opacity="0.54"/>
<circle cx="678.11" cy="710.47" r="11" fill="#d2d2d2" fill-opacity="0.33"/>
<circle cx="1050.5" cy="245.77" r="6" fill="#d2d2d2" fill-opacity="0.53"/>
<circle cx="295.42" cy="164.4" r="15" fill="#d2d2d2" fill-opacity="0.48"/>
<circle cx="569.71" cy="733.87" r="11" fill="#d2d2d2" fill-opacity="0.49"/>
<circle cx="715.61" cy="295.38" r="9" fill="#d2d2d2" fill-opacity="0.53"/>
<circle cx="995.35" cy="564.2" r="9" fill="#d2d2d2" fill-opacity="0.52"/>
<circle cx="76.68" cy="192.22" r="7" fill="#d2d2d2" fill-opacity="0.38"/>
<circle cx="627.63" cy="168.06" r="15" fill="#d2d2d2" fill-opacity="0.32"/>
<circle cx="538.56" cy="416.77" r="18" fill="#d2d2d2" fill-opacity="0.48"/>
<circle cx="735.08" cy="290.45" r="8" fill="#d2d2d2" fill-opacity="0.41"/>
<circle cx="970.08" cy="360.71" r="11" fill="#d2d2d2" fill-opacity="0.47"/>
<circle cx="229.72" cy="352.77" r="7" fill="#d2d2d2" fill-opacity="0.42"/>
<circle cx="183.62" cy="368.79" r="18" fill="#d2d2d2" fill-opacity="0.32"/>
<circle cx="253.07" cy="258.04" r="18" fill="#d2d2d2" fill-opacity="0.5"/>
<circle cx="704.37" cy="549.1" r="6" fill="#d2d2d2" fill-opacity="0.47"/>
<circle cx="689.07" cy="290.56" r="6" fill="#d2d2d2" fill-opacity="0.35"/>
<circle cx="250.63" cy="722.85" r="18" fill="#d2d2d2" fill-opacity="0.55"/>
<circle cx="224.48" cy="503.95" r="6" fill="#d2d2d2" fill-opacity="0.37"/>
<circle cx="1092.86" cy="598.47" r="18" fill="#d2d2d2" fill-opacity="0.34"/>
<circle cx="340.25" cy="125.4" r="4" fill="#d2d2d2" fill-opacity="0.33"/>
<circle cx="988.36" cy="370.1" r="3" fill="#d2d2d2" fill-opacity="0.37"/>
<circle cx="888.46" cy="528.47" r="11" fill="#d2d2d2" fill-opacity="0.54"/>
<circle cx="363.99" cy="65.26" r="7" fill="#d2d2d2" fill-opacity="0.43"/>
<circle cx="479" cy="561.25" r="9" fill="#d2d2d2" fill-opacity="0.46"/>
<circle cx="672.67" cy="496.57" r="6" fill="#d2d2d2" fill-opacity="0.45"/>
<circle cx="741.63" cy="655.55" r="15" fill="#d2d2d2" fill-opacity="0.46"/>
<circle cx="953.59" cy="518.92" r="15" fill="#d2d2d2" fill-opacity="0.29"/>
<circle cx="508.48" cy="229.27" r="18" fill="#d2d2d2" fill-opacity="0.28"/>
<circle cx="494.76" cy="589.84" r="18" fill="#d2d2d2" fill-opacity="0.46"/>
<circle cx="215.85" cy="636.11" r="10" fill="#d2d2d2" fill-opacity="0.39"/>
<circle cx="708.86" cy="332.45" r="15" fill="#d2d2d2" fill-opacity="0.45"/>
<circle cx="975.37" cy="667.2" r="8" fill="#d2d2d2" fill-opacity="0.48"/>
<circle cx="462.03" cy="387.99" r="4" fill="#d2d2d2" fill-opacity="0.26"/>
<circle cx="625.96" cy="160.98" r="6" fill="#d2d2d2" fill-opacity="0.41"/>
<circle cx="157.15" cy="446.45" r="11" fill="#d2d2d2" fill-opacity="0.31"/>
<circle cx="554.28" cy="61.11" r="8" fill="#d2d2d2" fill-opacity="0.41"/>
<circle cx="484.97" cy="704.1" r="6" fill="#d2d2d2" fill-opacity="0.55"/>
<circle cx="244.83" cy="404.52" r="4" fill="#d2d2d2" fill-opacity="0.47"/>
<circle cx="700.84" cy="489.92" r="7" fill="#d2d2d2" fill-opacity="0.33"/>
<circle cx="473.67" cy="59.18" r="9" fill="#d2d2d2" fill-opacity="0.52"/>
<circle cx="716.28" cy="515.67" r="13" fill="#d2d2d2" fill-opacity="0.33"/>
<circle cx="287.89" cy="561.61" r="11" fill="#d2d2d2" fill-opacity="0.54"/>
<circle cx="1103.88" cy="712.99" r="10" fill="#d2d2d2" fill-opacity="0.31"/>
<circle cx="187.06" cy="585.86" r="15" fill="#d2d2d2" fill-opacity="0.31"/>
<circle cx="730.73" cy="547.29" r="5" fill="#d2d2d2" fill-opacity="0.36"/>
<circle cx="727.12" cy="614.93" r="9" fill="#d2d2d2" fill-opacity="0.39"/>
<circle cx="362" cy="428.3" r="5" fill="#d2d2d2" fill-opacity="0.48"/>
<circle cx="547.57" cy="590.68" r="6" fill="#d2d2d2" fill-opacity="0.33"/>
<circle cx="448.72" cy="224.95" r="9" fill="#d2d2d2" fill-opacity="0.45"/>
<circle cx="560.46" cy="605.75" r="7" fill="#d2d2d2" fill-opacity="0.36"/>
<circle cx="743.67" cy="271.02" r="10" fill="#d2d2d2" fill-opacity="0.38"/>
<circle cx="725.54" cy="504.89" r="8" fill="#d2d2d2" fill-opacity="0.3"/>
<circle cx="371.36" cy="315.73" r="4" fill="#d2d2d2" fill-opacity="0.5"/>
<circle cx="1010.15" cy="590.99" r="5" fill="#d2d2d2" fill-opacity="0.41"/>
<circle cx="415.86" cy="451.89" r="15" fill="#d2d2d2" fill-opacity="0.25"/>
<circle cx="1058.87" cy="502.61" r="7" fill="#d2d2d2" fill-opacity="0.43"/>
<circle cx="663.2" cy="639.38" r="5" fill="#d2d2d2" fill-opacity="0.48"/>
<circle cx="417.23" cy="155.34" r="9" fill="#d2d2d2" fill-opacity="0.49"/>
<circle cx="227.99" cy="664.88" r="13" fill="#d2d2d2" fill-opacity="0.54"/>
<circle cx="145.83" cy="672.13" r="11" fill="#d2d2d2" fill-opacity="0.49"/>
<circle cx="939.13" cy="186.19" r="18" fill="#d2d2d2" fill-opacity="0.31"/>
<circle cx="133.33" cy="629.1" r="15" fill="#d2d2d2" fill-opacity="0.51"/>
<circle cx="638.37" cy="232.5" r="6" fill="#d2d2d2" fill-opacity="0.5"/>
<circle cx="551.64" cy="434.47" r="10" fill="#d2d2d2" fill-opacity="0.39"/>
<circle cx="203.09" cy="389.05" r="10" fill="#d2d2d2" fill-opacity="0.3"/>
<circle cx="685.58" cy="556.87" r="5" fill="#d2d2d2" fill-opacity="0.5"/>
<circle cx="546.04" cy="438.17" r="15" fill="#d2d2d2" fill-opacity="0.34"/>
<circle cx="543.71" cy="343.81" r="15" fill="#d2d2d2" fill-opacity="0.27"/>
<circle cx="725.26" cy="488.93" r="3" fill="#d2d2d2" fill-opacity="0.26"/>
<circle cx="98.62" cy="558.21" r="8" fill="#d2d2d2" fill-opacity="0.49"/>
<circle cx="149.61" cy="384.08" r="5" fill="#d2d2d2" fill-opacity="0.26"/>
<circle cx="811.28" cy="481.44" r="8" fill="#d2d2d2" fill-opacity="0.28"/>
<circle cx="748.56" cy="285.5" r="11" fill="#d2d2d2" fill-opacity="0.42"/>
<circle cx="1017.07" cy="246.06" r="8" fill="#d2d2d2" fill-opacity="0.38"/>
<circle cx="637.27" cy="620.44" r="7" fill="#d2d2d2" fill-opacity="0.36"/>
<circle cx="573.35" cy="280.27" r="7" fill="#d2d2d2" fill-opacity="0.51"/>
<circle cx="415.5" cy="190.44" r="10" fill="#d2d2d2" fill-opacity="0.49"/>
<circle cx="400.75" cy="268.79" r="7" fill="#d2d2d2" fill-opacity="0.29"/>
<circle cx="1081.11" cy="110.43" r="3" fill="#d2d2d2" fill-opacity="0.37"/>
<circle cx="637.55" cy="330.16" r="13" fill="#d2d2d2" fill-opacity="0.26"/>
<circle cx="368.43" cy="54.29" r="6" fill="#d2d2d2" fill-opacity="0.5"/>
<circle cx="553.56" cy="578.53" r="3" fill="#d2d2d2" fill-opacity="0.49"/>
<circle cx="1014.41" cy="472.1" r="13" fill="#d2d2d2" fill-opacity="0.29"/>
<circle cx="764.12" cy="525.5" r="15" fill="#d2d2d2" fill-opacity="0.27"/>
<circle cx="91.84" cy="487.18" r="15" fill="#d2d2d2" fill-opacity="0.48"/>
<circle cx="157.44" cy="175.1" r="3" fill="#d2d2d2" fill-opacity="0.38"/>
<circle cx="156.64" cy="692.05" r="3" fill="#d2d2d2" fill-opacity="0.36"/>
<circle cx="921.97" cy="592.71" r="11" fill="#d2d2d2" fill-opacity="0.46"/>
<circle cx="964.2" cy="177.5" r="3" fill="#d2d2d2" fill-opacity="0.35"/>
<circle cx="506.52" cy="492.82" r="3" fill="#d2d2d2" fill-opacity="0.4"/>
<circle cx="603.48" cy="619.08" r="9" fill="#d2d2d2" fill-opacity="0.42"/>
<circle cx="1023.75" cy="358.07" r="3" fill="#d2d2d2" fill-opacity="0.45"/>
<circle cx="679.49" cy="735.26" r="15" fill="#d2d2d2" fill-opacity="0.54"/>
<circle cx="553.98" cy="334.57" r="4" fill="#d2d2d2" fill-opacity="0.27"/>
<circle cx="550.52" cy="668.08" r="15" fill="#d2d2d2" fill-opacity="0.25"/>
<circle cx="55.07" cy="521.8" r="4" fill="#d2d2d2" fill-opacity="0.55"/>
<circle cx="959.98" cy="200.59" r="4" fill="#d2d2d2" fill-opacity="0.29"/>
<circle cx="68.84" cy="546.35" r="6" fill="#d2d2d2" fill-opacity="0.39"/>
<circle cx="838.86" cy="686.73" r="8" fill="#d2d2d2" fill-opacity="0.48"/>
<circle cx="806.37" cy="640.29" r="18" fill="#d2d2d2" fill-opacity="0.48"/>
<circle cx="360.73" cy="434.67" r="10" fill="#d2d2d2" fill-opacity="0.39"/>
<circle cx="1038.29" cy="225.29" r="3" fill="#d2d2d2" fill-opacity="0.47"/>
<circle cx="62.09" cy="60.16" r="15" fill="#d2d2d2" fill-opacity="0.46"/>
<circle cx="705.32" cy="318.37" r="7" fill="#d2d2d2" fill-opacity="0.47"/>
<circle cx="225.96" cy="644.07" r="10" fill="#d2d2d2" fill-opacity="0.43"/>
<circle cx="385.26" cy="704.64" r="18" fill="#d2d2d2" fill-opacity="0.38"/>
<circle cx="767.49" cy="149.99" r="4" fill="#d2d2d2" fill-opacity="0.36"/>
<circle cx="733.58" cy="484.5" r="9" fill="#d2d2d2" fill-opacity="0.39"/>
<circle cx="874.78" cy="362.4" r="7" fill="#d2d2d2" fill-opacity="0.49"/>
<circle cx="650.83" cy="251.75" r="3" fill="#d2d2d2" fill-opacity="0.44"/>
<circle cx="740" cy="603.34" r="13" fill="#d2d2d2" fill-opacity="0.35"/>
<circle cx="692.17" cy="724.44" r="5" fill="#d2d2d2" fill-opacity="0.43"/>
<circle cx="377.11" cy="345.71" r="6" fill="#d2d2d2" fill-opacity="0.36"/>
<circle cx="775.91" cy="465.23" r="6" fill="#d2d2d2" fill-opacity="0.49"/>
<circle cx="350.31" cy="51.16" r="7" fill="#d2d2d2" fill-opacity="0.33"/>
<circle cx="216.72" cy="685.21" r="3" fill="#d2d2d2" fill-opacity="0.34"/>
<circle cx="199.11" cy="664.52" r="13" fill="#d2d2d2" fill-opacity="0.29"/>
<circle cx="1083.89" cy="600.11" r="11" fill="#d2d2d2" fill-opacity="0.46"/>
<circle cx="1018.57" cy="289.33" r="4" fill="#d2d2d2" fill-opacity="0.41"/>
<circle cx="563.85" cy="313.4" r="18" fill="#d2d2d2" fill-opacity="0.53"/>
<circle cx="298.07" cy="468.76" r="15" fill="#d2d2d2" fill-opacity="0.37"/>
<circle cx="800.84" cy="688.94" r="13" fill="#d2d2d2" fill-opacity="0.48"/>
<circle cx="889.16" cy="367.21" r="4" fill="#d2d2d2" fill-opacity="0.41"/>
<circle cx="426.41" cy="93.22" r="9" fill="#d2d2d2" fill-opacity="0.42"/>
<circle cx="1000.74" cy="660.71" r="11" fill="#d2d2d2" fill-opacity="0.35"/>
<circle cx="586.54" cy="189.29" r="6" fill="#d2d2d2" fill-opacity="0.31"/>
<circle cx="241.53" cy="533.73" r="8" fill="#d2d2d2" fill-opacity="0.42"/>
<circle cx="430.42" cy="587.95" r="5" fill="#d2d2d2" fill-opacity="0.32"/>
<circle cx="1027.98" cy="390.36" r="4" fill="#d2d2d2" fill-opacity="0.36"/>
<circle cx="541.24" cy="106.4" r="8" fill="#d2d2d2" fill-opacity="0.43"/>
<circle cx="415.62" cy="408.43" r="3" fill="#d2d2d2" fill-opacity="0.28"/>
<circle cx="266.92" cy="650.83" r="13" fill="#d2d2d2" fill-opacity="0.4"/>
<circle cx="651.21" cy="230.5" r="7" fill="#d2d2d2" fill-opacity="0.38"/>
<circle cx="1053.29" cy="579.4" r="13" fill="#d2d2d2" fill-opacity="0.54"/>
<circle cx="319.24" cy="76.13" r="6" fill="#d2d2d2" fill-opacity="0.55"/>
<circle cx="450.89" cy="68.99" r="3" fill="#d2d2d2" fill-opacity="0.42"/>
<circle cx="972.91" cy="366.21" r="4" fill="#d2d2d2" fill-opacity="0.51"/>
<circle cx="728.23" cy="686.29" r="18" fill="#d2d2d2" fill-opacity="0.54"/>
<circle cx="322.63" cy="439.49" r="15" fill="#d2d2d2" fill-opacity="0.28"/>
<circle cx="1026.14" cy="399.49" r="5" fill="#d2d2d2" fill-opacity="0.38"/>
<circle cx="219.31" cy="716.38" r="18" fill="#d2d2d2" fill-opacity="0.32"/>
<circle cx="90.95" cy="226.54" r="8" fill="#d2d2d2" fill-opacity="0.27"/>
<circle cx="636.01" cy="69.17" r="3" fill="#d2d2d2" fill-opacity="0.33"/>
<circle cx="594.13" cy="560.3" r="10" fill="#d2d2d2" fill-opacity="0.27"/>
<circle cx="203.49" cy="570.92" r="6" fill="#d2d2d2" fill-opacity="0.45"/>
<circle cx="366.72" cy="458.11" r="15" fill="#d2d2d2" fill-opacity="0.28"/>
<circle cx="393.35" cy="227.34" r="4" fill="#d2d2d2" fill-opacity="0.36"/>
<circle cx="452.42" cy="354.56" r="5" fill="#d2d2d2" fill-opacity="0.52"/>
<circle cx="995.7" cy="372.85" r="6" fill="#d2d2d2" fill-opacity="0.49"/>
<circle cx="216.37" cy="624.66" r="4" fill="#d2d2d2" fill-opacity="0.53"/>
<circle cx="968.76" cy="663.21" r="5" fill="#d2d2d2" fill-opacity="0.48"/>
<circle cx="1065.43" cy="688.9" r="9" fill="#d2d2d2" fill-opacity="0.5"/>
<circle cx="716.07" cy="362.11" r="8" fill="#d2d2d2" fill-opacity="0.35"/>
<circle cx="297.91" cy="129.77" r="8" fill="#d2d2d2" fill-opacity="0.29"/>
<circle cx="284.95" cy="89.14" r="18" fill="#d2d2d2" fill-opacity="0.39"/>
<circle cx="992.68" cy="352.89" r="5" fill="#d2d2d2" fill-opacity="0.33"/>
<circle cx="486.49" cy="157.42" r="7" fill="#d2d2d2" fill-opacity="0.42"/>
<circle cx="364.34" cy="604.86" r="7" fill="#d2d2d2" fill-opacity="0.4"/>
<circle cx="387.15" cy="673.19" r="4" fill="#d2d2d2" fill-opacity="0.3"/>
<circle cx="594.27" cy="485.39" r="15" fill="#d2d2d2" fill-opacity="0.53"/>
<circle cx="643.54" cy="626.34" r="4" fill="#d2d2d2" fill-opacity="0.33"/>
<circle cx="263.72" cy="301.35" r="7" fill="#d2d2d2" fill-opacity="0.55"/>
<circle cx="1030.58" cy="117.32" r="7" fill="#d2d2d2" fill-opacity="0.37"/>
<circle cx="221.93" cy="624.3" r="7" fill="#d2d2d2" fill-opacity="0.29"/>
<circle cx="728.2" cy="355.06" r="11" fill="#d2d2d2" fill-opacity="0.35"/>
<circle cx="198.55" cy="51.33" r="11" fill="#d2d2d2" fill-opacity="0.34"/>
<circle cx="431.71" cy="77.98" r="9" fill="#d2d2d2" fill-opacity="0.32"/>
<circle cx="655.62" cy="145.27" r="5" fill="#d2d2d2" fill-opacity="0.41"/>
<circle cx="294.25" cy="171.18" r="13" fill="#d2d2d2" fill-opacity="0.27"/>
<circle cx="142.67" cy="469.9" r="10" fill="#d2d2d2" fill-opacity="0.48"/>
<circle cx="235.84" cy="144.56" r="15" fill="#d2d2d2" fill-opacity="0.46"/>
<circle cx="910.28" cy="452.22" r="6" fill="#d2d2d2" fill-opacity="0.25"/>
<circle cx="783.78" cy="408.5" r="18" fill="#d2d2d2" fill-opacity="0.52"/>
<circle cx="599.57" cy="289.87" r="7" fill="#d2d2d2" fill-opacity="0.5"/>
<circle cx="966.38" cy="390.18" r="3" fill="#d2d2d2" fill-opacity="0.37"/>
<circle cx="858.76" cy="141.96" r="15" fill="#d2d2d2" fill-opacity="0.33"/>
<circle cx="247.22" cy="623.82" r="8" fill="#d2d2d2" fill-opacity="0.26"/>
<circle cx="794.39" cy="446.69" r="3" fill="#d2d2d2" fill-opacity="0.36"/>
<circle cx="1038.05" cy="718.43" r="4" fill="#d2d2d2" fill-opacity="0.29"/>
<circle cx="807.47" cy="613.41" r="8" fill="#d2d2d2" fill-opacity="0.48"/>
<circle cx="970.18" cy="447.66" r="3" fill="#d2d2d2" fill-opacity="0.34"/>
<circle cx="164.15" cy="554.35" r="10" fill="#d2d2d2" fill-opacity="0.4"/>
<circle cx="612.34" cy="420.76" r="3" fill="#d2d2d2" fill-opacity="0.32"/>
<circle cx="143.9" cy="477.16" r="5" fill="#d2d2d2" fill-opacity="0.28"/>
<circle cx="315.49" cy="613.84" r="3" fill="#d2d2d2" fill-opacity="0.26"/>
<circle cx="1031.89" cy="559.74" r="7" fill="#d2d2d2" fill-opacity="0.26"/>
<circle cx="685.36" cy="447.77" r="11" fill="#d2d2d2" fill-opacity="0.32"/>
<circle cx="520.87" cy="291.98" r="4" fill="#d2d2d2" fill-opacity="0.47"/>
<circle cx="97.88" cy="134.9" r="10" fill="#d2d2d2" fill-opacity="0.43"/>
<circle cx="857.2" cy="125.93" r="4" fill="#d2d2d2" fill-opacity="0.37"/>
<circle cx="195.17" cy="458.35" r="6" fill="#d2d2d2" fill-opacity="0.29"/>
<circle cx="657.21" cy="565.14" r="5" fill="#d2d2d2" fill-opacity="0.53"/>
<circle cx="69.62" cy="488.14" r="18" fill="#d2d2d2" fill-opacity="0.38"/>
<circle cx="940.11" cy="412.67" r="9" fill="#d2d2d2" fill-opacity="0.54"/>
<circle cx="105.08" cy="300.65" r="9" fill="#d2d2d2" fill-opacity="0.32"/>
<circle cx="405.19" cy="350.55" r="13" fill="#d2d2d2" fill-opacity="0.49"/>
<circle cx="1017.54" cy="612.38" r="11" fill="#d2d2d2" fill-opacity="0.27"/>
<circle cx="598.42" cy="710.92" r="8" fill="#d2d2d2" fill-opacity="0.32"/>
<circle cx="497.46" cy="486.56" r="8" fill="#d2d2d2" fill-opacity="0.28"/>
<circle cx="248.75" cy="273.8" r="6" fill="#d2d2d2" fill-opacity="0.4"/>
<circle cx="72.08" cy="146.19" r="9" fill="#d2d2d2" fill-opacity="0.48"/>
<circle cx="1043.15" cy="486.92" r="3" fill="#d2d2d2" fill-opacity="0.26"/>
<circle cx="730.07" cy="233.38" r="15" fill="#d2d2d2" fill-opacity="0.44"/>
<circle cx="715.94" cy="606.37" r="3" fill="#d2d2d2" fill-opacity="0.44"/>
<circle cx="315.62" cy="409.01" r="9" fill="#d2d2d2" fill-opacity="0.32"/>
<circle cx="91.78" cy="128" r="8" fill="#d2d2d2" fill-opacity="0.44"/>
<circle cx="177.6" cy="460.06" r="11" fill="#d2d2d2" fill-opacity="0.52"/>
<circle cx="139.54" cy="457.27" r="5" fill="#d2d2d2" fill-opacity="0.38"/>
<circle cx="592.33" cy="660.78" r="9" fill="#d2d2d2" fill-opacity="0.42"/>
<circle cx="340.56" cy="557.79" r="18" fill="#d2d2d2" fill-opacity="0.41"/>
<circle cx="940.13" cy="470.87" r="13" fill="#d2d2d2" fill-opacity="0.32"/>
<circle cx="459.85" cy="428.52" r="8" fill="#d2d2d2" fill-opacity="0.39"/>
<circle cx="630.91" cy="472.83" r="10" fill="#d2d2d2" fill-opacity="0.5"/>
<circle cx="82.82" cy="280.23" r="6" fill="#d2d2d2" fill-opacity="0.4"/>
<circle cx="456.16" cy="454.12" r="3" fill="#d2d2d2" fill-opacity="0.53"/>
<circle cx="222.03" cy="706.93" r="8" fill="#d2d2d2" fill-opacity="0.42"/>
<circle cx="570.89" cy="246.53" r="6" fill="#d2d2d2" fill-opacity="0.34"/>
<circle cx="868.46" cy="159.41" r="4" fill="#d2d2d2" fill-opacity="0.43"/>
<circle cx="418.87" cy="503.83" r="11" fill="#d2d2d2" fill-opacity="0.37"/>
<circle cx="516.29" cy="557.43" r="4" fill="#d2d2d2" fill-opacity="0.41"/>
<circle cx="1098.67" cy="517.58" r="5" fill="#d2d2d2" fill-opacity="0.38"/>
<circle cx="758.34" cy="146.83" r="6" fill="#d2d2d2" fill-opacity="0.43"/>
<circle cx="950.99" cy="616.62" r="11" fill="#d2d2d2" fill-opacity="0.28"/>
<circle cx="957.64" cy="686.21" r="10" fill="#d2d2d2" fill-opacity="0.33"/>
<circle cx="718.51" cy="486.17" r="18" fill="#d2d2d2" fill-opacity="0.29"/>
<circle cx="973.08" cy="52.98" r="11" fill="#d2d2d2" fill-opacity="0.43"/>
<circle cx="577.76" cy="714.29" r="13" fill="#d2d2d2" fill-opacity="0.29"/>
<circle cx="950.94" cy="242.72" r="13" fill="#d2d2d2" fill-opacity="0.43"/>
<circle cx="452.34" cy="362.08" r="10" fill="#d2d2d2" fill-opacity="0.34"/>
<circle cx="423.78" cy="293.54" r="11" fill="#d2d2d2" fill-opacity="0.42"/>
<circle cx="457.57" cy="272.18" r="18" fill="#d2d2d2" fill-opacity="0.5"/>
<circle cx="579.52" cy="356.38" r="5" fill="#d2d2d2" fill-opacity="0.41"/>
<circle cx="901.13" cy="350.6" r="9" fill="#d2d2d2" fill-opacity="0.42"/>
<circle cx="143.21" cy="684.91" r="8" fill="#d2d2d2" fill-opacity="0.54"/>
<circle cx="694.57" cy="217.43" r="8" fill="#d2d2d2" fill-opacity="0.31"/>
<circle cx="502.03" cy="678.3" r="3" fill="#d2d2d2" fill-opacity="0.26"/>
<circle cx="321.94" cy="668.17" r="7" fill="#d2d2d2" fill-opacity="0.53"/>
<circle cx="869.89" cy="421.56" r="9" fill="#d2d2d2" fill-opacity="0.41"/>
<circle cx="598.3" cy="522.81" r="9" fill="#d2d2d2" fill-opacity="0.39"/>
<circle cx="93.15" cy="516.6" r="10" fill="#d2d2d2" fill-opacity="0.53"/>
<circle cx="767.07" cy="412.42" r="4" fill="#d2d2d2" fill-opacity="0.37"/>
<circle cx="580.96" cy="497.49" r="13" fill="#d2d2d2" fill-opacity="0.3"/>
<circle cx="249.51" cy="340.65" r="9" fill="#d2d2d2" fill-opacity="0.38"/>
<circle cx="712.08" cy="737.33" r="8" fill="#d2d2d2" fill-opacity="0.46"/>
<circle cx="841.26" cy="113.65" r="8" fill="#d2d2d2" fill-opacity="0.35"/>
<circle cx="1087.13" cy="619.96" r="11" fill="#d2d2d2" fill-opacity="0.3"/>
<circle cx="745.28" cy="253.5" r="8" fill="#d2d2d2" fill-opacity="0.5"/>
<circle cx="1099.66" cy="662.82" r="9" fill="#d2d2d2" fill-opacity="0.44"/>
<circle cx="605.5" cy="613.15" r="6" fill="#d2d2d2" fill-opacity="0.4"/>
<circle cx="249.39" cy="175.86" r="15" fill="#d2d2d2" fill-opacity="0.42"/>
<circle cx="163.02" cy="443.21" r="15" fill="#d2d2d2" fill-opacity="0.44"/>
<circle cx="94.85" cy="333.88" r="3" fill="#d2d2d2" fill-opacity="0.34"/>
<circle cx="782.14" cy="52.7" r="7" fill="#d2d2d2" fill-opacity="0.37"/>
<circle cx="154.41" cy="60.65" r="3" fill="#d2d2d2" fill-opacity="0.31"/>
<circle cx="577.73" cy="431.74" r="7" fill="#d2d2d2" fill-opacity="0.51"/>
<circle cx="999.3" cy="404.89" r="5" fill="#d2d2d2" fill-opacity="0.42"/>
<circle cx="485.77" cy="133.84" r="5" fill="#d2d2d2" fill-opacity="0.41"/>
<circle cx="590.06" cy="70.03" r="4" fill="#d2d2d2" fill-opacity="0.3"/>
<circle cx="603.84" cy="617.97" r="13" fill="#d2d2d2" fill-opacity="0.38"/>
<circle cx="898.32" cy="498.57" r="15" fill="#d2d2d2" fill-opacity="0.48"/>
<circle cx="392.19" cy="543.67" r="8" fill="#d2d2d2" fill-opacity="0.33"/>
<circle cx="84.86" cy="483.8" r="13" fill="#d2d2d2" fill-opacity="0.27"/>
<circle cx="253.15" cy="480.56" r="3" fill="#d2d2d2" fill-opacity="0.27"/>
<circle cx="993.97" cy="452.04" r="3" fill="#d2d2d2" fill-opacity="0.38"/>
<circle cx="707.39" cy="222.04" r="3" fill="#d2d2d2" fill-opacity="0.3"/>
<circle cx="672.22" cy="169.74" r="3" fill="#d2d2d2" fill-opacity="0.52"/>
<circle cx="914.85" cy="259.54" r="13" fill="#d2d2d2" fill-opacity="0.33"/>
<circle cx="990.04" cy="725.88" r="4" fill="#d2d2d2" fill-opacity="0.32"/>
<circle cx="463.18" cy="545.74" r="6" fill="#d2d2d2" fill-opacity="0.37"/>
<circle cx="472.51" cy="541.12" r="3" fill="#d2d2d2" fill-opacity="0.49"/>
<circle cx="307.99" cy="169.69" r="8" fill="#d2d2d2" fill-opacity="0.36"/>
<circle cx="58.09" cy="658.79" r="9" fill="#d2d2d2" fill-opacity="0.42"/>
<circle cx="171.78" cy="418.29" r="9" fill="#d2d2d2" fill-opacity="0.35"/>
<circle cx="740.36" cy="713.25" r="9" fill="#d2d2d2" fill-opacity="0.5"/>
<circle cx="422.32" cy="219.01" r="6" fill="#d2d2d2" fill-opacity="0.39"/>
<circle cx="415.15" cy="350.55" r="7" fill="#d2d2d2" fill-opacity="0.45"/>
<circle cx="411.91" cy="157.57" r="18" fill="#d2d2d2" fill-opacity="0.29"/>
<circle cx="258.07" cy="425.96" r="5" fill="#d2d2d2" fill-opacity="0.42"/>
<circle cx="545.08" cy="598.51" r="6" fill="#d2d2d2" fill-opacity="0.3"/>
<circle cx="424.09" cy="548.5" r="9" fill="#d2d2d2" fill-opacity="0.44"/>
<circle cx="665.59" cy="255.11" r="10" fill="#d2d2d2" fill-opacity="0.4"/>
<circle cx="290.91" cy="362.36" r="5" fill="#d2d2d2" fill-opacity="0.53"/>
<circle cx="1107.79" cy="461.21" r="10" fill="#d2d2d2" fill-opacity="0.43"/>
<circle cx="440.08" cy="219.91" r="13" fill="#d2d2d2" fill-opacity="0.4"/>
<circle cx="183.05" cy="567.97" r="15" fill="#d2d2d2" fill-opacity="0.4"/>
<circle cx="625.15" cy="236.58" r="9" fill="#d2d2d2" fill-opacity="0.26"/>
<circle cx="811.32" cy="150.1" r="3" fill="#d2d2d2" fill-opacity="0.37"/>
<circle cx="141.2" cy="172.16" r="6" fill="#d2d2d2" fill-opacity="0.35"/>
<circle cx="752.51" cy="125.18" r="11" fill="#d2d2d2" fill-opacity="0.52"/>
<circle cx="903.49" cy="573.33" r="6" fill="#d2d2d2" fill-opacity="0.27"/>
<circle cx="379.95" cy="206.23" r="5" fill="#d2d2d2" fill-opacity="0.5"/>
<circle cx="472.91" cy="295.57" r="10" fill="#d2d2d2" fill-opacity="0.48"/>
<circle cx="985.72" cy="644.28" r="5" fill="#d2d2d2" fill-opacity="0.53"/>
<circle cx="236.98" cy="302.94" r="15" fill="#d2d2d2" fill-opacity="0.46"/>
<circle cx="1000.76" cy="67.43" r="18" fill="#d2d2d2" fill-opacity="0.46"/>
<circle cx="313.33" cy="634.23" r="8" fill="#d2d2d2" fill-opacity="0.52"/>
<circle cx="153.56" cy="251.12" r="7" fill="#d2d2d2" fill-opacity="0.52"/>
<circle cx="828.1" cy="541.69" r="3" fill="#d2d2d2" fill-opacity="0.37"/>
<circle cx="695.04" cy="347.19" r="7" fill="#d2d2d2" fill-opacity="0.3"/>
<circle cx="832.62" cy="431.12" r="15" fill="#d2d2d2" fill-opacity="0.44"/>
<circle cx="240.45" cy="629.23" r="13" fill="#d2d2d2" fill-opacity="0.4"/>
<circle cx="602.03" cy="688.73" r="15" fill="#d2d2d2" fill-opacity="0.46"/>
<circle cx="419.98" cy="50.67" r="15" fill="#d2d2d2" fill-opacity="0.34"/>
<circle cx="95.54" cy="639.36" r="13" fill="#d2d2d2" fill-opacity="0.46"/>
<circle cx="1082.58" cy="519.94" r="3" fill="#d2d2d2" fill-opacity="0.49"/>
<circle cx="272.75" cy="680.99" r="18" fill="#d2d2d2" fill-opacity="0.52"/>
<circle cx="492.27" cy="563.31" r="18" fill="#d2d2d2" fill-opacity="0.43"/>
<circle cx="284.05" cy="413.85" r="8" fill="#d2d2d2" fill-opacity="0.53"/>
<circle cx="499.41" cy="691.84" r="18" fill="#d2d2d2" fill-opacity="0.4"/>
<circle cx="779.72" cy="628.83" r="15" fill="#d2d2d2" fill-opacity="0.39"/>
<circle cx="107.56" cy="531.8" r="9" fill="#d2d2d2" fill-opacity="0.45"/>
<circle cx="947.36" cy="586.99" r="10" fill="#d2d2d2" fill-opacity="0.48"/>
<circle cx="96.31" cy="534.89" r="11" fill="#d2d2d2" fill-opacity="0.33"/>
<circle cx="629.19" cy="718.9" r="15" fill="#d2d2d2" fill-opacity="0.32"/>
<circle cx="325.89" cy="714.89" r="5" fill="#d2d2d2" fill-opacity="0.36"/>
<circle cx="486.34" cy="188.97" r="7" fill="#d2d2d2" fill-opacity="0.29"/>
<circle cx="777.41" cy="385.65" r="10" fill="#d2d2d2" fill-opacity="0.32"/>
<circle cx="306.21" cy="405.61" r="10" fill="#d2d2d2" fill-opacity="0.29"/>
<circle cx="729.36" cy="531.65" r="5" fill="#d2d2d2" fill-opacity="0.52"/>
<circle cx="200.4" cy="438.66" r="8" fill="#d2d2d2" fill-opacity="0.44"/>
<circle cx="175.05" cy="343" r="5" fill="#d2d2d2" fill-opacity="0.45"/>
<circle cx="214.08" cy="725.72" r="9" fill="#d2d2d2" fill-opacity="0.5"/>
<circle cx="171.35" cy="249.64" r="8" fill="#d2d2d2" fill-opacity="0.4"/>
<circle cx="96" cy="668.11" r="7" fill="#d2d2d2" fill-opacity="0.31"/>
<circle cx="793.72" cy="359.13" r="4" fill="#d2d2d2" fill-opacity="0.3"/>
<circle cx="521.78" cy="442.74" r="7" fill="#d2d2d2" fill-opacity="0.3"/>
<circle cx="126.13" cy="57.46" r="10" fill="#d2d2d2" fill-opacity="0.28"/>
<circle cx="810.17" cy="726.35" r="13" fill="#d2d2d2" fill-opacity="0.33"/>
<circle cx="733.81" cy="710.15" r="10" fill="#d2d2d2" fill-opacity="0.31"/>
<circle cx="625.66" cy="55.73" r="4" fill="#d2d2d2" fill-opacity="0.44"/>
<circle cx="715.41" cy="695.32" r="15" fill="#d2d2d2" fill-opacity="0.46"/>
<circle cx="742.26" cy="103.92" r="18" fill="#d2d2d2" fill-opacity="0.26"/>
<circle cx="870.9" cy="629.31" r="7" fill="#d2d2d2" fill-opacity="0.36"/>
<circle cx="1069.74" cy="412.55" r="15" fill="#d2d2d2" fill-opacity="0.3"/>
<circle cx="881.69" cy="622.97" r="18" fill="#d2d2d2" fill-opacity="0.44"/>
<circle cx="452.14" cy="496.64" r="8" fill="#d2d2d2" fill-opacity="0.35"/>
<circle cx="440.64" cy="430.28" r="8" fill="#d2d2d2" fill-opacity="0.5"/>
<circle cx="318.76" cy="89.83" r="4" fill="#d2d2d2" fill-opacity="0.42"/>
<circle cx="715.9" cy="615.62" r="18" fill="#d2d2d2" fill-opacity="0.37"/>
<circle cx="103.58" cy="199.34" r="9" fill="#d2d2d2" fill-opacity="0.4"/>
<circle cx="216.93" cy="256.7" r="13" fill="#d2d2d2" fill-opacity="0.44"/>
<circle cx="200.4" cy="206.97" r="5" fill="#d2d2d2" fill-opacity="0.38"/>
<circle cx="1078" cy="111.87" r="3" fill="#d2d2d2" fill-opacity="0.51"/>
<circle cx="558.17" cy="200.61" r="8" fill="#d2d2d2" fill-opacity="0.25"/>
<circle cx="941.27" cy="640.18" r="11" fill="#d2d2d2" fill-opacity="0.38"/>
<circle cx="350.25" cy="506.52" r="11" fill="#d2d2d2" fill-opacity="0.46"/>
<circle cx="994.06" cy="93.28" r="3" fill="#d2d2d2" fill-opacity="0.45"/>
<circle cx="925.64" cy="673.76" r="5" fill="#d2d2d2" fill-opacity="0.36"/>
<circle cx="54.45" cy="604.87" r="15" fill="#d2d2d2" fill-opacity="0.35"/>
<circle cx="257.14" cy="108.68" r="8" fill="#d2d2d2" fill-opacity="0.41"/>
<circle cx="504.08" cy="418.94" r="15" fill="#d2d2d2" fill-opacity="0.51"/>
<circle cx="1082.83" cy="713.65" r="13" fill="#d2d2d2" fill-opacity="0.27"/>
<circle cx="908.28" cy="548.71" r="8" fill="#d2d2d2" fill-opacity="0.43"/>
<circle cx="364.86" cy="444.08" r="8" fill="#d2d2d2" fill-opacity="0.39"/>
<circle cx="736.2" cy="256.53" r="8" fill="#d2d2d2" fill-opacity="0.41"/>
<circle cx="721.77" cy="635.2" r="6" fill="#d2d2d2" fill-opacity="0.45"/>
<circle cx="524.19" cy="108.79" r="15" fill="#d2d2d2" fill-opacity="0.42"/>
<circle cx="638.17" cy="700.79" r="8" fill="#d2d2d2" fill-opacity="0.41"/>
<circle cx="648.7" cy="323.48" r="4" fill="#d2d2d2" fill-opacity="0.32"/>
<circle cx="1076.64" cy="189.95" r="18" fill="#d2d2d2" fill-opacity="0.28"/>
<circle cx="963.9" cy="224.91" r="4" fill="#d2d2d2" fill-opacity="0.31"/>
<circle cx="760.45" cy="539.28" r="6" fill="#d2d2d2" fill-opacity="0.42"/>
<circle cx="290.15" cy="445.17" r="4" fill="#d2d2d2" fill-opacity="0.47"/>
<circle cx="1013.81" cy="441.13" r="9" fill="#d2d2d2" fill-opacity="0.45"/>
<circle cx="898.35" cy="142.66" r="11" fill="#d2d2d2" fill-opacity="0.42"/>
<circle cx="807.48" cy="572.26" r="4" fill="#d2d2d2" fill-opacity="0.44"/>
<circle cx="1068" cy="405.46" r="10" fill="#d2d2d2" fill-opacity="0.5"/>
<circle cx="465.48" cy="168.17" r="6" fill="#d2d2d2" fill-opacity="0.42"/>
<circle cx="871.48" cy="144.39" r="13" fill="#d2d2d2" fill-opacity="0.27"/>
<circle cx="301.12" cy="306.92" r="3" fill="#d2d2d2" fill-opacity="0.46"/>
<circle cx="1062.97" cy="367.2" r="4" fill="#d2d2d2" fill-opacity="0.46"/>
<circle cx="501.53" cy="663.15" r="13" fill="#d2d2d2" fill-opacity="0.55"/>
<circle cx="263.7" cy="129.15" r="18" fill="#d2d2d2" fill-opacity="0.51"/>
<circle cx="228.09" cy="564.35" r="8" fill="#d2d2d2" fill-opacity="0.49"/>
<circle cx="830.24" cy="58.04" r="7" fill="#d2d2d2" fill-opacity="0.29"/>
<circle cx="445.4" cy="558.7" r="8" fill="#d2d2d2" fill-opacity="0.47"/>
<circle cx="96.11" cy="466.62" r="4" fill="#d2d2d2" fill-opacity="0.36"/>
<circle cx="397" cy="466.11" r="3" fill="#d2d2d2" fill-opacity="0.53"/>
<circle cx="765.73" cy="225.68" r="6" fill="#d2d2d2" fill-opacity="0.46"/>
<circle cx="72.56" cy="732.22" r="10" fill="#d2d2d2" fill-opacity="0.28"/>
<circle cx="72.21" cy="126.19" r="7" fill="#d2d2d2" fill-opacity="0.31"/>
<circle cx="637.5" cy="250.12" r="15" fill="#d2d2d2" fill-opacity="0.45"/>
<circle cx="936.38" cy="455.94" r="7" fill="#d2d2d2" fill-opacity="0.41"/>
<circle cx="780.89" cy="607.65" r="10" fill="#d2d2d2" fill-opacity="0.25"/>
<circle cx="412.91" cy="154.14" r="11" fill="#d2d2d2" fill-opacity="0.4"/>
<circle cx="83.54" cy="627.64" r="4" fill="#d2d2d2" fill-opacity="0.3"/>
<circle cx="917.4" cy="518.86" r="9" fill="#d2d2d2" fill-opacity="0.5"/>
<circle cx="1075.58" cy="528.11" r="10" fill="#d2d2d2" fill-opacity="0.37"/>
<circle cx="975.4" cy="471.48" r="4" fill="#d2d2d2" fill-opacity="0.36"/>
<circle cx="609.96" cy="264.77" r="5" fill="#d2d2d2" fill-opacity="0.43"/>
<circle cx="96.28" cy="167.11" r="8" fill="#d2d2d2" fill-opacity="0.47"/>
<circle cx="401.25" cy="373.2" r="8" fill="#d2d2d2" fill-opacity="0.34"/>
<circle cx="405.64" cy="383.57" r="6" fill="#d2d2d2" fill-opacity="0.26"/>
<circle cx="536.97" cy="730.61" r="3" fill="#d2d2d2" fill-opacity="0.44"/>
<circle cx="820.58" cy="149.12" r="9" fill="#d2d2d2" fill-opacity="0.33"/>
<circle cx="580" cy="230.83" r="13" fill="#d2d2d2" fill-opacity="0.42"/>
<circle cx="669.48" cy="145.98" r="18" fill="#d2d2d2" fill-opacity="0.26"/>
<circle cx="644.27" cy="581.93" r="6" fill="#d2d2d2" fill-opacity="0.48"/>
<circle cx="721.09" cy="487.89" r="8" fill="#d2d2d2" fill-opacity="0.49"/>
<circle cx="890.62" cy="214.25" r="5" fill="#d2d2d2" fill-opacity="0.45"/>
<circle cx="372.24" cy="576.7" r="18" fill="#d2d2d2" fill-opacity="0.36"/>
<circle cx="954.4" cy="219.19" r="11" fill="#d2d2d2" fill-opacity="0.46"/>
<circle cx="404.49" cy="535.92" r="15" fill="#d2d2d2" fill-opacity="0.35"/>
<circle cx="1097.73" cy="382.21" r="8" fill="#d2d2d2" fill-opacity="0.52"/>
<circle cx="907.77" cy="737.68" r="5" fill="#d2d2d2" fill-opacity="0.29"/>
<circle cx="57.67" cy="650.97" r="10" fill="#d2d2d2" fill-opacity="0.37"/>
<circle cx="469.84" cy="582.92" r="5" fill="#d2d2d2" fill-opacity="0.43"/>
<circle cx="202.44" cy="546.7" r="7" fill="#d2d2d2" fill-opacity="0.47"/>
<circle cx="634.35" cy="696.83" r="8" fill="#d2d2d2" fill-opacity="0.27"/>
<circle cx="251.65" cy="688.1" r="13" fill="#d2d2d2" fill-opacity="0.3"/>
<circle cx="665.31" cy="731.35" r="8" fill="#d2d2d2" fill-opacity="0.54"/>
<circle cx="781.7" cy="547.63" r="4" fill="#d2d2d2" fill-opacity="0.5"/>
<circle cx="388.41" cy="170.91" r="7" fill="#d2d2d2" fill-opacity="0.41"/>
<circle cx="854" cy="482.25" r="6" fill="#d2d2d2" fill-opacity="0.46"/>
<circle cx="281.41" cy="325.71" r="6" fill="#d2d2d2" fill-opacity="0.52"/>
<circle cx="349.59" cy="396.32" r="4" fill="#d2d2d2" fill-opacity="0.31"/>
<circle cx="827.92" cy="714.57" r="13" fill="#d2d2d2" fill-opacity="0.26"/>
<circle cx="127.85" cy="613.29" r="13" fill="#d2d2d2" fill-opacity="0.35"/>
<circle cx="194.87" cy="179.84" r="11" fill="#d2d2d2" fill-opacity="0.44"/>
<circle cx="65.91" cy="272.8" r="3" fill="#d2d2d2" fill-opacity="0.31"/>
<circle cx="396.36" cy="567.03" r="15" fill="#d2d2d2" fill-opacity="0.4"/>
<circle cx="696.37" cy="602.26" r="5" fill="#d2d2d2" fill-opacity="0.27"/>
<circle cx="489.13" cy="81.37" r="15" fill="#d2d2d2" fill-opacity="0.43"/>
<circle cx="872.52" cy="731.6" r="9" fill="#d2d2d2" fill-opacity="0.33"/>
<circle cx="541.18" cy="59.38" r="8" fill="#d2d2d2" fill-opacity="0.42"/>
<circle cx="1096.78" cy="88.65" r="13" fill="#d2d2d2" fill-opacity="0.46"/>
<circle cx="935.02" cy="158.11" r="3" fill="#d2d2d2" fill-opacity="0.3"/>
<circle cx="201.22" cy="579.36" r="4" fill="#d2d2d2" fill-opacity="0.36"/>
<circle cx="433.43" cy="287.43" r="15" fill="#d2d2d2" fill-opacity="0.43"/>
<circle cx="638.29" cy="503.58" r="13" fill="#d2d2d2" fill-opacity="0.42"/>
<circle cx="293.8" cy="476.89" r="18" fill="#d2d2d2" fill-opacity="0.39"/>
<circle cx="83.53" cy="496.64" r="15" fill="#d2d2d2" fill-opacity="0.48"/>
<circle cx="1086.03" cy="362.68" r="7" fill="#d2d2d2" fill-opacity="0.36"/>
<circle cx="611.41" cy="239.01" r="7" fill="#d2d2d2" fill-opacity="0.25"/>
<circle cx="554.31" cy="502.2" r="8" fill="#d2d2d2" fill-opacity="0.3"/>
<circle cx="716.64" cy="326.58" r="4" fill="#d2d2d2" fill-opacity="0.53"/>
<circle cx="712.11" cy="134.33" r="11" fill="#d2d2d2" fill-opacity="0.4"/>
<circle cx="638.56" cy="175.46" r="13" fill="#d2d2d2" fill-opacity="0.36"/>
<circle cx="208.27" cy="172.43" r="18" fill="#d2d2d2" fill-opacity="0.51"/>
<circle cx="875.84" cy="414.66" r="8" fill="#d2d2d2" fill-opacity="0.48"/>
<circle cx="307.14" cy="727.81" r="10" fill="#d2d2d2" fill-opacity="0.31"/>
<circle cx="1017.09" cy="671.71" r="9" fill="#d2d2d2" fill-opacity="0.39"/>
<circle cx="393.26" cy="673.42" r="4" fill="#d2d2d2" fill-opacity="0.45"/>
<circle cx="66.36" cy="606.66" r="9" fill="#d2d2d2" fill-opacity="0.45"/>
<circle cx="421.73" cy="207.4" r="9" fill="#d2d2d2" fill-opacity="0.37"/>
<circle cx="1024.28" cy="702.02" r="15" fill="#d2d2d2" fill-opacity="0.51"/>
<circle cx="82.55" cy="64.33" r="18" fill="#d2d2d2" fill-opacity="0.38"/>
<circle cx="295.26" cy="190.21" r="9" fill="#d2d2d2" fill-opacity="0.44"/>
<circle cx="366.37" cy="736.07" r="6" fill="#d2d2d2" fill-opacity="0.54"/>
<circle cx="888.28" cy="379.39" r="7" fill="#d2d2d2" fill-opacity="0.54"/>
<circle cx="194.72" cy="257.06" r="4" fill="#d2d2d2" fill-opacity="0.35"/>
<circle cx="564.68" cy="664.77" r="5" fill="#d2d2d2" fill-opacity="0.35"/>
<circle cx="696.87" cy="710.21" r="6" fill="#d2d2d2" fill-opacity="0.42"/>
<circle cx="985.83" cy="194.77" r="18" fill="#d2d2d2" fill-opacity="0.36"/>
<circle cx="876.6" cy="645.71" r="5" fill="#d2d2d2" fill-opacity="0.38"/>
<circle cx="198.19" cy="695.98" r="15" fill="#d2d2d2" fill-opacity="0.26"/>
<circle cx="168.25" cy="722.29" r="3" fill="#d2d2d2" fill-opacity="0.29"/>
<circle cx="370.87" cy="396.81" r="8" fill="#d2d2d2" fill-opacity="0.28"/>
<circle cx="228.87" cy="521.11" r="4" fill="#d2d2d2" fill-opacity="0.37"/>
<circle cx="730.69" cy="509.09" r="9" fill="#d2d2d2" fill-opacity="0.51"/>
<circle cx="1088.43" cy="72.71" r="6" fill="#d2d2d2" fill-opacity="0.31"/>
<circle cx="714.99" cy="60.6" r="5" fill="#d2d2d2" fill-opacity="0.4"/>
<circle cx="295.53" cy="347.04" r="4" fill="#d2d2d2" fill-opacity="0.47"/>
<circle cx="101.22" cy="666.87" r="4" fill="#d2d2d2" fill-opacity="0.51"/>
<circle cx="177.69" cy="386.28" r="5" fill="#d2d2d2" fill-opacity="0.41"/>
<circle cx="52.72" cy="204.5" r="11" fill="#d2d2d2" fill-opacity="0.29"/>
<circle cx="832.5" cy="395.5" r="4" fill="#d2d2d2" fill-opacity="0.41"/>
<circle cx="939.95" cy="710.5" r="4" fill="#d2d2d2" fill-opacity="0.35"/>
<circle cx="278.05" cy="717.58" r="6" fill="#d2d2d2" fill-opacity="0.47"/>
<circle cx="339.35" cy="172.28" r="7" fill="#d2d2d2" fill-opacity="0.33"/>
<circle cx="1074.31" cy="185.55" r="3" fill="#d2d2d2" fill-opacity="0.37"/>
<circle cx="640.02" cy="300.2" r="3" fill="#d2d2d2" fill-opacity="0.35"/>
<circle cx="93.89" cy="363.08" r="7" fill="#d2d2d2" fill-opacity="0.41"/>
<circle cx="781.71" cy="727.83" r="18" fill="#d2d2d2" fill-opacity="0.47"/>
<circle cx="473.24" cy="269.6" r="9" fill="#d2d2d2" fill-opacity="0.36"/>
<circle cx="210.31" cy="575.06" r="9" fill="#d2d2d2" fill-opacity="0.49"/>
<circle cx="1001.98" cy="488.14" r="6" fill="#d2d2d2" fill-opacity="0.43"/>
<circle cx="1031.86" cy="225.72" r="13" fill="#d2d2d2" fill-opacity="0.47"/>
<circle cx="1100.47" cy="619.63" r="15" fill="#d2d2d2" fill-opacity="0.28"/>
<circle cx="943.64" cy="590.94" r="18" fill="#d2d2d2" fill-opacity="0.26"/>
<circle cx="785.84" cy="273.82" r="15" fill="#d2d2d2" fill-opacity="0.38"/>
<circle cx="758.09" cy="364.29" r="13" fill="#d2d2d2" fill-opacity="0.25"/>
<circle cx="840.98" cy="638.9" r="11" fill="#d2d2d2" fill-opacity="0.35"/>
<circle cx="628.95" cy="312.13" r="15" fill="#d2d2d2" fill-opacity="0.49"/>
<circle cx="971.6" cy="295.09" r="4" fill="#d2d2d2" fill-opacity="0.37"/>
<circle cx="607.83" cy="472.84" r="15" fill="#d2d2d2" fill-opacity="0.5"/>
<circle cx="126.31" cy="600.15" r="15" fill="#d2d2d2" fill-opacity="0.32"/>
<circle cx="699.27" cy="232.8" r="10" fill="#d2d2d2" fill-opacity="0.51"/>
<circle cx="418.64" cy="456.75" r="13" fill="#d2d2d2" fill-opacity="0.32"/>
<circle cx="200.61" cy="689.86" r="11" fill="#d2d2d2" fill-opacity="0.36"/>
<circle cx="267.13" cy="166.7" r="8" fill="#d2d2d2" fill-opacity="0.32"/>
<circle cx="232.69" cy="617.1" r="10" fill="#d2d2d2" fill-opacity="0.3"/>
<circle cx="1054.2" cy="640.5" r="15" fill="#d2d2d2" fill-opacity="0.51"/>
<circle cx="95.85" cy="313.07" r="9" fill="#d2d2d2" fill-opacity="0.29"/>
<circle cx="213.08" cy="223.52" r="4" fill="#d2d2d2" fill-opacity="0.36"/>
<circle cx="752.78" cy="410.58" r="7" fill="#d2d2d2" fill-opacity="0.39"/>
<circle cx="143.28" cy="322.93" r="10" fill="#d2d2d2" fill-opacity="0.46"/>
<circle cx="526.27" cy="380.05" r="5" fill="#d2d2d2" fill-opacity="0.48"/>
<circle cx="208.87" cy="519.32" r="8" fill="#d2d2d2" fill-opacity="0.4"/>
<circle cx="749.88" cy="479.69" r="11" fill="#d2d2d2" fill-opacity="0.35"/>
<circle cx="454" cy="62.26" r="6" fill="#d2d2d2" fill-opacity="0.25"/>
<circle cx="325.25" cy="457.51" r="7" fill="#d2d2d2" fill-opacity="0.47"/>
<circle cx="341.07" cy="273.57" r="6" fill="#d2d2d2" fill-opacity="0.33"/>
<circle cx="514.35" cy="412.37" r="10" fill="#d2d2d2" fill-opacity="0.51"/>
<circle cx="263.78" cy="341.97" r="7" fill="#d2d2d2" fill-opacity="0.44"/>
<circle cx="443.92" cy="80.29" r="10" fill="#d2d2d2" fill-opacity="0.36"/>
<circle cx="94.26" cy="569.64" r="9" fill="#d2d2d2" fill-opacity="0.38"/>
<circle cx="693.89" cy="227.19" r="6" fill="#d2d2d2" fill-opacity="0.37"/>
<circle cx="663.42" cy="688.12" r="6" fill="#d2d2d2" fill-opacity="0.54"/>
<circle cx="952.81" cy="450.35" r="4" fill="#d2d2d2" fill-opacity="0.45"/>
<circle cx="399.22" cy="98.84" r="10" fill="#d2d2d2" fill-opacity="0.36"/>
<circle cx="607.36" cy="392.65" r="15" fill="#d2d2d2" fill-opacity="0.48"/>
<circle cx="77.12" cy="459.02" r="10" fill="#d2d2d2" fill-opacity="0.53"/>
<circle cx="793" cy="350.92" r="10" fill="#d2d2d2" fill-opacity="0.3"/>
<circle cx="119" cy="324.35" r="5" fill="#d2d2d2" fill-opacity="0.4"/>
<circle cx="924.15" cy="512.56" r="18" fill="#d2d2d2" fill-opacity="0.31"/>
<circle cx="624.17" cy="688.79" r="7" fill="#d2d2d2" fill-opacity="0.42"/>
<circle cx="865.38" cy="581.22" r="4" fill="#d2d2d2" fill-opacity="0.28"/>
<circle cx="948.76" cy="444.01" r="3" fill="#d2d2d2" fill-opacity="0.28"/>
<circle cx="143.55" cy="569.79" r="13" fill="#d2d2d2" fill-opacity="0.39"/>
<circle cx="923.43" cy="187.89" r="8" fill="#d2d2d2" fill-opacity="0.39"/>
<circle cx="108.07" cy="526.8" r="9" fill="#d2d2d2" fill-opacity="0.5"/>
<circle cx="198.63" cy="330.8" r="3" fill="#d2d2d2" fill-opacity="0.51"/>
<circle cx="204.26" cy="280.69" r="11" fill="#d2d2d2" fill-opacity="0.54"/>
<circle cx="247.31" cy="421.83" r="11" fill="#d2d2d2" fill-opacity="0.33"/>
<circle cx="381.82" cy="225.97" r="7" fill="#d2d2d2" fill-opacity="0.42"/>
<circle cx="591.64" cy="339.95" r="3" fill="#d2d2d2" fill-opacity="0.34"/>
<circle cx="313.43" cy="312.36" r="9" fill="#d2d2d2" fill-opacity="0.51"/>
<circle cx="322.51" cy="189.39" r="3" fill="#d2d2d2" fill-opacity="0.31"/>
<circle cx="741.39" cy="693.39" r="15" fill="#d2d2d2" fill-opacity="0.4"/>
<circle cx="668.8" cy="302.35" r="8" fill="#d2d2d2" fill-opacity="0.31"/>
<circle cx="1024.54" cy="433.73" r="3" fill="#d2d2d2" fill-opacity="0.47"/>
<circle cx="59.02" cy="96.67" r="13" fill="#d2d2d2" fill-opacity="0.5"/>
<circle cx="87.43" cy="201.59" r="10" fill="#d2d2d2" fill-opacity="0.34"/>
<circle cx="803.19" cy="603.7" r="13" fill="#d2d2d2" fill-opacity="0.43"/>
<circle cx="480.36" cy="552.19" r="6" fill="#d2d2d2" fill-opacity="0.51"/>
<circle cx="111.18" cy="349.27" r="15" fill="#d2d2d2" fill-opacity="0.29"/>
<circle cx="195.22" cy="657.16" r="13" fill="#d2d2d2" fill-opacity="0.4"/>
<circle cx="65.04" cy="547.68" r="18" fill="#d2d2d2" fill-opacity="0.49"/>
<circle cx="578.11" cy="514.96" r="15" fill="#d2d2d2" fill-opacity="0.47"/>
<circle cx="900.04" cy="418.77" r="5" fill="#d2d2d2" fill-opacity="0.29"/>
<circle cx="1022.93" cy="192.77" r="4" fill="#d2d2d2" fill-opacity="0.39"/>
<circle cx="263.72" cy="113.16" r="3" fill="#d2d2d2" fill-opacity="0.37"/>
<circle cx="748.41" cy="227.74" r="10" fill="#d2d2d2" fill-opacity="0.46"/>
<circle cx="214.13" cy="89.1" r="18" fill="#d2d2d2" fill-opacity="0.29"/>
<circle cx="219.75" cy="357.96" r="6" fill="#d2d2d2" fill-opacity="0.51"/>
<circle cx="895.04" cy="537.79" r="18" fill="#d2d2d2" fill-opacity="0.3"/>
<circle cx="1016.62" cy="273.83" r="6" fill="#d2d2d2" fill-opacity="0.3"/>
<circle cx="897.33" cy="726.27" r="9" fill="#d2d2d2" fill-opacity="0.54"/>
<circle cx="397.27" cy="157.63" r="7" fill="#d2d2d2" fill-opacity="0.32"/>
<circle cx="628.46" cy="114.58" r="10" fill="#d2d2d2" fill-opacity="0.29"/>
<circle cx="244.99" cy="279.9" r="9" fill="#d2d2d2" fill-opacity="0.28"/>
<circle cx="928.2" cy="134.27" r="6" fill="#d2d2d2" fill-opacity="0.55"/>
<circle cx="1045.8" cy="413.17" r="7" fill="#d2d2d2" fill-opacity="0.4"/>
<circle cx="68.84" cy="589.21" r="4" fill="#d2d2d2" fill-opacity="0.31"/>
<circle cx="346.8" cy="259.04" r="13" fill="#d2d2d2" fill-opacity="0.41"/>
<circle cx="143.74" cy="146.4" r="7" fill="#d2d2d2" fill-opacity="0.48"/>
<circle cx="860.98" cy="673.92" r="13" fill="#d2d2d2" fill-opacity="0.53"/>
<circle cx="84.35" cy="463.17" r="3" fill="#d2d2d2" fill-opacity="0.35"/>
<circle cx="1051.07" cy="503.01" r="3" fill="#d2d2d2" fill-opacity="0.3"/>
<circle cx="421.24" cy="381.92" r="8" fill="#d2d2d2" fill-opacity="0.47"/>
<circle cx="239.59" cy="593.53" r="7" fill="#d2d2d2" fill-opacity="0.49"/>
<circle cx="817.1" cy="363.94" r="18" fill="#d2d2d2" fill-opacity="0.42"/>
<circle cx="885.27" cy="460.96" r="10" fill="#d2d2d2" fill-opacity="0.26"/>
<circle cx="91.99" cy="449.67" r="9" fill="#d2d2d2" fill-opacity="0.44"/>
<circle cx="189.89" cy="448.81" r="8" fill="#d2d2d2" fill-opacity="0.27"/>
<circle cx="821.28" cy="556.63" r="8" fill="#d2d2d2" fill-opacity="0.3"/>
<circle cx="1048.04" cy="278.83" r="15" fill="#d2d2d2" fill-opacity="0.51"/>
<circle cx="559.06" cy="152.84" r="4" fill="#d2d2d2" fill-opacity="0.28"/>
<circle cx="303.04" cy="155.62" r="7" fill="#d2d2d2" fill-opacity="0.41"/>
<circle cx="174.64" cy="372.79" r="5" fill="#d2d2d2" fill-opacity="0.42"/>
<circle cx="94.59" cy="226.8" r="6" fill="#d2d2d2" fill-opacity="0.34"/>
<circle cx="638.61" cy="731.75" r="6" fill="#d2d2d2" fill-opacity="0.47"/>
<circle cx="616.88" cy="215.36" r="4" fill="#d2d2d2" fill-opacity="0.25"/>
<circle cx="1049.91" cy="387" r="18" fill="#d2d2d2" fill-opacity="0.42"/>
<circle cx="780.3" cy="208.19" r="5" fill="#d2d2d2" fill-opacity="0.3"/>
<circle cx="330.02" cy="71.33" r="9" fill="#d2d2d2" fill-opacity="0.44"/>
<circle cx="166.19" cy="443.17" r="4" fill="#d2d2d2" fill-opacity="0.28"/>
<circle cx="663.23" cy="211.4" r="13" fill="#d2d2d2" fill-opacity="0.48"/>
<circle cx="593.72" cy="615.21" r="6" fill="#d2d2d2" fill-opacity="0.27"/>
<circle cx="407.53" cy="117.67" r="6" fill="#d2d2d2" fill-opacity="0.44"/>
<circle cx="783.35" cy="612.11" r="8" fill="#d2d2d2" fill-opacity="0.28"/>
<circle cx="854.7" cy="458.39" r="5" fill="#d2d2d2" fill-opacity="0.25"/>
<circle cx="1046.73" cy="334.26" r="9" fill="#d2d2d2" fill-opacity="0.26"/>
<circle cx="885.93" cy="152.16" r="11" fill="#d2d2d2" fill-opacity="0.45"/>
<circle cx="210.31" cy="287.58" r="5" fill="#d2d2d2" fill-opacity="0.31"/>
<circle cx="1030.39" cy="523.37" r="18" fill="#d2d2d2" fill-opacity="0.54"/>
<circle cx="1107.13" cy="596.2" r="10" fill="#d2d2d2" fill-opacity="0.26"/>
<circle cx="607.09" cy="277.7" r="4" fill="#d2d2d2" fill-opacity="0.48"/>
<circle cx="724.57" cy="187.34" r="15" fill="#d2d2d2" fill-opacity="0.27"/>
<circle cx="437.55" cy="333.83" r="15" fill="#d2d2d2" fill-opacity="0.47"/>
<circle cx="420.15" cy="161.94" r="10" fill="#d2d2d2" fill-opacity="0.45"/>
<circle cx="840.29" cy="143.11" r="18" fill="#d2d2d2" fill-opacity="0.53"/>
<circle cx="1009.07" cy="564.02" r="15" fill="#d2d2d2" fill-opacity="0.43"/>
<circle cx="511.44" cy="619.37" r="11" fill="#d2d2d2" fill-opacity="0.34"/>
<circle cx="1068.59" cy="416.85" r="15" fill="#d2d2d2" fill-opacity="0.28"/>
<circle cx="1076.57" cy="593.36" r="7" fill="#d2d2d2" fill-opacity="0.48"/>
<circle cx="948.32" cy="215.67" r="13" fill="#d2d2d2" fill-opacity="0.39"/>
<circle cx="300.84" cy="389.91" r="15" fill="#d2d2d2" fill-opacity="0.52"/>
<circle cx="103.21" cy="507.89" r="9" fill="#d2d2d2" fill-opacity="0.49"/>
<circle cx="773.83" cy="699.78" r="9" fill="#d2d2d2" fill-opacity="0.37"/>
<circle cx="142.32" cy="500.21" r="8" fill="#d2d2d2" fill-opacity="0.45"/>
<circle cx="1008.38" cy="344.35" r="7" fill="#d2d2d2" fill-opacity="0.25"/>
<circle cx="568.4" cy="61.28" r="4" fill="#d2d2d2" fill-opacity="0.51"/>
<circle cx="553.91" cy="333.46" r="7" fill="#d2d2d2" fill-opacity="0.39"/>
<circle cx="405.54" cy="197.42" r="8" fill="#d2d2d2" fill-opacity="0.37"/>
<circle cx="543.9" cy="72.47" r="8" fill="#d2d2d2" fill-opacity="0.28"/>
<circle cx="337.27" cy="533.81" r="10" fill="#d2d2d2" fill-opacity="0.37"/>
<circle cx="620.47" cy="216.79" r="6" fill="#d2d2d2" fill-opacity="0.45"/>
<circle cx="94.01" cy="617.83" r="5" fill="#d2d2d2" fill-opacity="0.37"/>
<circle cx="402.62" cy="154.12" r="5" fill="#d2d2d2" fill-opacity="0.32"/>
<circle cx="993.25" cy="471.07" r="9" fill="#d2d2d2" fill-opacity="0.34"/>
<circle cx="387.6" cy="654.58" r="13" fill="#d2d2d2" fill-opacity="0.31"/>
<circle cx="930.46" cy="161.93" r="11" fill="#d2d2d2" fill-opacity="0.25"/>
<circle cx="954.7" cy="121.58" r="6" fill="#d2d2d2" fill-opacity="0.39"/>
<circle cx="907.96" cy="223.06" r="8" fill="#d2d2d2" fill-opacity="0.45"/>
<circle cx="1093.59" cy="556.85" r="11" fill="#d2d2d2" fill-opacity="0.45"/>
<circle cx="193.13" cy="569.8" r="7" fill="#d2d2d2" fill-opacity="0.45"/>
<circle cx="130.46" cy="480.57" r="10" fill="#d2d2d2" fill-opacity="0.33"/>
<circle cx="363.58" cy="260.68" r="18" fill="#d2d2d2" fill-opacity="0.44"/>
<circle cx="448.41" cy="410.31" r="15" fill="#d2d2d2" fill-opacity="0.27"/>
<circle cx="743.88" cy="390.41" r="18" fill="#d2d2d2" fill-opacity="0.54"/>
<circle cx="110.4" cy="626.02" r="15" fill="#d2d2d2" fill-opacity="0.29"/>
<circle cx="449.8" cy="264.69" r="11" fill="#d2d2d2" fill-opacity="0.52"/>
<circle cx="822.59" cy="567.37" r="3" fill="#d2d2d2" fill-opacity="0.53"/>
<circle cx="561.42" cy="54.88" r="7" fill="#d2d2d2" fill-opacity="0.29"/>
<circle cx="672.8" cy="447.97" r="3" fill="#d2d2d2" fill-opacity="0.55"/>
<circle cx="234" cy="456.8" r="7" fill="#d2d2d2" fill-opacity="0.44"/>
<circle cx="306.24" cy="583.28" r="3" fill="#d2d2d2" fill-opacity="0.38"/>
<circle cx="1086.84" cy="497.67" r="15" fill="#d2d2d2" fill-opacity="0.44"/>
<circle cx="572.57" cy="722.46" r="8" fill="#d2d2d2" fill-opacity="0.46"/>
<circle cx="344.13" cy="161.69" r="13" fill="#d2d2d2" fill-opacity="0.4"/>
<circle cx="101.22" cy="417.35" r="5" fill="#d2d2d2" fill-opacity="0.31"/>
<circle cx="905.89" cy="92.54" r="7" fill="#d2d2d2" fill-opacity="0.47"/>
<circle cx="230.92" cy="265.26" r="3" fill="#d2d2d2" fill-opacity="0.43"/>
<circle cx="1079.77" cy="586.18" r="8" fill="#d2d2d2" fill-opacity="0.54"/>
<circle cx="248.37" cy="263.49" r="10" fill="#d2d2d2" fill-opacity="0.31"/>
<circle cx="390.15" cy="352.42" r="4" fill="#d2d2d2" fill-opacity="0.45"/>
<circle cx="433.5" cy="270.54" r="10" fill="#d2d2d2" fill-opacity="0.33"/>
<circle cx="266.21" cy="677.06" r="10" fill="#d2d2d2" fill-opacity="0.4"/>
<circle cx="482.75" cy="160.29" r="8" fill="#d2d2d2" fill-opacity="0.26"/>
<circle cx="345.64" cy="419.62" r="15" fill="#d2d2d2" fill-opacity="0.42"/>
<circle cx="760.84" cy="569.32" r="7" fill="#d2d2d2" fill-opacity="0.37"/>
<circle cx="810.34" cy="322.92" r="7" fill="#d2d2d2" fill-opacity="0.51"/>
<circle cx="178.36" cy="360.26" r="3" fill="#d2d2d2" fill-opacity="0.26"/>
<circle cx="926.24" cy="440.87" r="8" fill="#d2d2d2" fill-opacity="0.43"/>
<circle cx="431.39" cy="726.54" r="4" fill="#d2d2d2" fill-opacity="0.51"/>
<circle cx="152.19" cy="465.9" r="9" fill="#d2d2d2" fill-opacity="0.5"/>
<circle cx="804.5" cy="691.72" r="5" fill="#d2d2d2" fill-opacity="0.44"/>
<circle cx="1075.33" cy="487.4" r="18" fill="#d2d2d2" fill-opacity="0.29"/>
<circle cx="478.06" cy="630.71" r="18" fill="#d2d2d2" fill-opacity="0.5"/>
<circle cx="473.98" cy="394.87" r="8" fill="#d2d2d2" fill-opacity="0.35"/>
<circle cx="246.88" cy="651.42" r="11" fill="#d2d2d2" fill-opacity="0.47"/>
<circle cx="488.46" cy="689.8" r="7" fill="#d2d2d2" fill-opacity="0.29"/>
<circle cx="409.05" cy="95.51" r="9" fill="#d2d2d2" fill-opacity="0.27"/>
<circle cx="53.29" cy="445.95" r="6" fill="#d2d2d2" fill-opacity="0.42"/>
<circle cx="477.9" cy="445.87" r="7" fill="#d2d2d2" fill-opacity="0.49"/>
<circle cx="770.31" cy="638.56" r="5" fill="#d2d2d2" fill-opacity="0.3"/>
<circle cx="761.84" cy="570.34" r="11" fill="#d2d2d2" fill-opacity="0.29"/>
<circle cx="349.56" cy="73.1" r="15" fill="#d2d2d2" fill-opacity="0.36"/>
<circle cx="354.73" cy="496.74" r="18" fill="#d2d2d2" fill-opacity="0.37"/>
<circle cx="1000.04" cy="541.29" r="13" fill="#d2d2d2" fill-opacity="0.43"/>
<circle cx="589.61" cy="469.3" r="6" fill="#d2d2d2" fill-opacity="0.34"/>
<circle cx="431.33" cy="442.6" r="4" fill="#d2d2d2" fill-opacity="0.36"/>
<circle cx="791.4" cy="99.8" r="8" fill="#d2d2d2" fill-opacity="0.32"/>
<circle cx="535.2" cy="577.15" r="10" fill="#d2d2d2" fill-opacity="0.33"/>
<circle cx="112.65" cy="357.53" r="11" fill="#d2d2d2" fill-opacity="0.43"/>
<circle cx="84.2" cy="421.13" r="10" fill="#d2d2d2" fill-opacity="0.28"/>
<circle cx="287.94" cy="484.32" r="8" fill="#d2d2d2" fill-opacity="0.54"/>
<circle cx="612.53" cy="208.9" r="11" fill="#d2d2d2" fill-opacity="0.49"/>
<circle cx="271.52" cy="629.19" r="13" fill="#d2d2d2" fill-opacity="0.41"/>
<circle cx="82.32" cy="586.88" r="3" fill="#d2d2d2" fill-opacity="0.49"/>
<circle cx="334.14" cy="308.34" r="15" fill="#d2d2d2" fill-opacity="0.33"/>
<circle cx="144.89" cy="127.54" r="9" fill="#d2d2d2" fill-opacity="0.4"/>
<circle cx="674.08" cy="206.13" r="3" fill="#d2d2d2" fill-opacity="0.49"/>
<circle cx="1069.02" cy="277.3" r="7" fill="#d2d2d2" fill-opacity="0.27"/>
<circle cx="556.55" cy="142.28" r="10" fill="#d2d2d2" fill-opacity="0.54"/>
<circle cx="983.21" cy="476.2" r="6" fill="#d2d2d2" fill-opacity="0.35"/>
<circle cx="251.31" cy="327.99" r="7" fill="#d2d2d2" fill-opacity="0.48"/>
<circle cx="131.04" cy="669.22" r="3" fill="#d2d2d2" fill-opacity="0.38"/>
<circle cx="259.57" cy="535.58" r="6" fill="#d2d2d2" fill-opacity="0.48"/>
<circle cx="263.24" cy="571.33" r="7" fill="#d2d2d2" fill-opacity="0.47"/>
<circle cx="1055.2" cy="684.76" r="18" fill="#d2d2d2" fill-opacity="0.43"/>
<circle cx="66.72" cy="294.2" r="9" fill="#d2d2d2" fill-opacity="0.25"/>
<circle cx="965.38" cy="548.17" r="15" fill="#d2d2d2" fill-opacity="0.41"/>
<circle cx="641.22" cy="483.03" r="13" fill="#d2d2d2" fill-opacity="0.44"/>
<circle cx="1100.96" cy="260.97" r="3" fill="#d2d2d2" fill-opacity="0.47"/>
<circle cx="782.8" cy="340.5" r="3" fill="#d2d2d2" fill-opacity="0.49"/>
<circle cx="532.36" cy="120.48" r="4" fill="#d2d2d2" fill-opacity="0.51"/>
<circle cx="435.71" cy="660.14" r="10" fill="#d2d2d2" fill-opacity="0.55"/>
<circle cx="1016.43" cy="598.38" r="10" fill="#d2d2d2" fill-opacity="0.52"/>
<circle cx="1084.84" cy="636.48" r="11" fill="#d2d2d2" fill-opacity="0.42"/>
<circle cx="588.41" cy="194.41" r="7" fill="#d2d2d2" fill-opacity="0.45"/>
<circle cx="1043.77" cy="183.23" r="7" fill="#d2d2d2" fill-opacity="0.53"/>
<circle cx="1089.38" cy="351.36" r="18" fill="#d2d2d2" fill-opacity="0.47"/>
<circle cx="220.61" cy="668.5" r="9" fill="#d2d2d2" fill-opacity="0.29"/>
<circle cx="63.65" cy="197.68" r="13" fill="#d2d2d2" fill-opacity="0.41"/>
<circle cx="79.26" cy="611.11" r="4" fill="#d2d2d2" fill-opacity="0.39"/>
<circle cx="95.85" cy="663.42" r="11" fill="#d2d2d2" fill-opacity="0.52"/>
<circle cx="960.03" cy="283.53" r="11" fill="#d2d2d2" fill-opacity="0.52"/>
<circle cx="563.6" cy="491.23" r="6" fill="#d2d2d2" fill-opacity="0.25"/>
<circle cx="266.71" cy="294.67" r="4" fill="#d2d2d2" fill-opacity="0.28"/>
<circle cx="980.26" cy="701.93" r="10" fill="#d2d2d2" fill-opacity="0.39"/>
<circle cx="670.67" cy="489.1" r="18" fill="#d2d2d2" fill-opacity="0.52"/>
<circle cx="857.39" cy="443.41" r="18" fill="#d2d2d2" fill-opacity="0.27"/>
<circle cx="548.9" cy="326.15" r="15" fill="#d2d2d2" fill-opacity="0.51"/>
<circle cx="1099.32" cy="544.61" r="10" fill="#d2d2d2" fill-opacity="0.46"/>
<circle cx="550.02" cy="147.83" r="10" fill="#d2d2d2" fill-opacity="0.43"/>
<circle cx="116.51" cy="214.63" r="6" fill="#d2d2d2" fill-opacity="0.25"/>
<circle cx="650.04" cy="564.21" r="6" fill="#d2d2d2" fill-opacity="0.44"/>
<circle cx="836.1" cy="76.42" r="4" fill="#d2d2d2" fill-opacity="0.52"/>
<circle cx="262.14" cy="50.65" r="10" fill="#d2d2d2" fill-opacity="0.26"/>
<circle cx="304.88" cy="692.17" r="6" fill="#d2d2d2" fill-opacity="0.48"/>
<circle cx="96.88" cy="433.77" r="13" fill="#d2d2d2" fill-opacity="0.53"/>
<circle cx="328.73" cy="155.85" r="3" fill="#d2d2d2" fill-opacity="0.39"/>
<circle cx="1063.86" cy="574.06" r="18" fill="#d2d2d2" fill-opacity="0.28"/>
<circle cx="201.85" cy="415.08" r="13" fill="#d2d2d2" fill-opacity="0.4"/>
<circle cx="162.14" cy="593" r="9" fill="#d2d2d2" fill-opacity="0.52"/>
<circle cx="52.4" cy="637.48" r="11" fill="#d2d2d2" fill-opacity="0.44"/>
<circle cx="140.76" cy="437.52" r="13" fill="#d2d2d2" fill-opacity="0.43"/>
<circle cx="897.48" cy="103.56" r="3" fill="#d2d2d2" fill-opacity="0.45"/>
<circle cx="701.99" cy="365.39" r="15" fill="#d2d2d2" fill-opacity="0.25"/>
<circle cx="839.7" cy="66.61" r="11" fill="#d2d2d2" fill-opacity="0.49"/>
<circle cx="535.47" cy="134.29" r="15" fill="#d2d2d2" fill-opacity="0.47"/>
<circle cx="762.03" cy="728.48" r="13" fill="#d2d2d2" fill-opacity="0.54"/>
<circle cx="628.88" cy="293.24" r="4" fill="#d2d2d2" fill-opacity="0.28"/>
<circle cx="303.27" cy="658.14" r="4" fill="#d2d2d2" fill-opacity="0.28"/>
<circle cx="340.44" cy="263.35" r="7" fill="#d2d2d2" fill-opacity="0.29"/>
<circle cx="692.81" cy="725.21" r="6" fill="#d2d2d2" fill-opacity="0.25"/>
<circle cx="129.5" cy="128.43" r="18" fill="#d2d2d2" fill-opacity="0.48"/>
<circle cx="276.72" cy="315.91" r="9" fill="#d2d2d2" fill-opacity="0.53"/>
<circle cx="658.98" cy="195.47" r="18" fill="#d2d2d2" fill-opacity="0.48"/>
<circle cx="134.6" cy="64.88" r="3" fill="#d2d2d2" fill-opacity="0.47"/>
<circle cx="82.46" cy="519.8" r="9" fill="#d2d2d2" fill-opacity="0.49"/>
<circle cx="108.1" cy="476.92" r="7" fill="#d2d2d2" fill-opacity="0.38"/>
<circle cx="798.88" cy="224.33" r="7" fill="#d2d2d2" fill-opacity="0.5"/>
<circle cx="80.05" cy="313.78" r="5" fill="#d2d2d2" fill-opacity="0.38"/>
<circle cx="1089.73" cy="501.27" r="10" fill="#d2d2d2" fill-opacity="0.48"/>
<circle cx="937.03" cy="736.04" r="8" fill="#d2d2d2" fill-opacity="0.33"/>
<circle cx="314.73" cy="334.57" r="3" fill="#d2d2d2" fill-opacity="0.35"/>
<circle cx="626.61" cy="296.18" r="8" fill="#d2d2d2" fill-opacity="0.25"/>
<circle cx="867.26" cy="214.76" r="8" fill="#d2d2d2" fill-opacity="0.49"/>
<circle cx="613.94" cy="122.35" r="8" fill="#d2d2d2" fill-opacity="0.38"/>
<circle cx="407.17" cy="94.34" r="4" fill="#d2d2d2" fill-opacity="0.54"/>
<circle cx="220.78" cy="416.33" r="15" fill="#d2d2d2" fill-opacity="0.45"/>
<circle cx="309.65" cy="682.93" r="11" fill="#d2d2d2" fill-opacity="0.46"/>
<circle cx="1075.48" cy="111.85" r="6" fill="#d2d2d2" fill-opacity="0.32"/>
<circle cx="850.38" cy="661.11" r="18" fill="#d2d2d2" fill-opacity="0.33"/>
<circle cx="808.76" cy="732.89" r="5" fill="#d2d2d2" fill-opacity="0.43"/>
<circle cx="701.13" cy="164.84" r="18" fill="#d2d2d2" fill-opacity="0.34"/>
<circle cx="464.37" cy="285.8" r="3" fill="#d2d2d2" fill-opacity="0.28"/>
<circle cx="968.22" cy="492.38" r="13" fill="#d2d2d2" fill-opacity="0.54"/>
<circle cx="731.89" cy="457.88" r="15" fill="#d2d2d2" fill-opacity="0.27"/>
<circle cx="122.01" cy="319.88" r="4" fill="#d2d2d2" fill-opacity="0.27"/>
<circle cx="120.93" cy="60.03" r="8" fill="#d2d2d2" fill-opacity="0.27"/>
<circle cx="640.74" cy="548.49" r="15" fill="#d2d2d2" fill-opacity="0.54"/>
<circle cx="778.79" cy="238.68" r="10" fill="#d2d2d2" fill-opacity="0.3"/>
<circle cx="156.09" cy="259.18" r="9" fill="#d2d2d2" fill-opacity="0.46"/>
<circle cx="233.61" cy="732.62" r="4" fill="#d2d2d2" fill-opacity="0.51"/>
<circle cx="538.27" cy="272.66" r="6" fill="#d2d2d2" fill-opacity="0.26"/>
<circle cx="928.49" cy="206.12" r="6" fill="#d2d2d2" fill-opacity="0.49"/>
<circle cx="760.96" cy="241.58" r="3" fill="#d2d2d2" fill-opacity="0.5"/>
<circle cx="127.01" cy="111.75" r="15" fill="#d2d2d2" fill-opacity="0.45"/>
<circle cx="380.69" cy="231.5" r="3" fill="#d2d2d2" fill-opacity="0.29"/>
<circle cx="152.93" cy="728.06" r="9" fill="#d2d2d2" fill-opacity="0.33"/>
<circle cx="144.28" cy="452.73" r="3" fill="#d2d2d2" fill-opacity="0.27"/>
<circle cx="65.71" cy="638.26" r="5" fill="#d2d2d2" fill-opacity="0.53"/>
<circle cx="426.69" cy="424.11" r="5" fill="#d2d2d2" fill-opacity="0.29"/>
<circle cx="885.26" cy="223.64" r="8" fill="#d2d2d2" fill-opacity="0.3"/>
<circle cx="752.97" cy="651.96" r="5" fill="#d2d2d2" fill-opacity="0.34"/>
<circle cx="453.62" cy="577.7" r="6" fill="#d2d2d2" fill-opacity="0.44"/>
<circle cx="989.82" cy="576.23" r="8" fill="#d2d2d2" fill-opacity="0.32"/>
<circle cx="996.44" cy="231.42" r="3" fill="#d2d2d2" fill-opacity="0.27"/>
<circle cx="753.45" cy="627.13" r="6" fill="#d2d2d2" fill-opacity="0.33"/>
<circle cx="550.94" cy="386.33" r="4" fill="#d2d2d2" fill-opacity="0.39"/>
<circle cx="804.21" cy="114.68" r="4" fill="#d2d2d2" fill-opacity="0.4"/>
<circle cx="1028.47" cy="677.79" r="9" fill="#d2d2d2" fill-opacity="0.38"/>
<circle cx="175.41" cy="96.85" r="8" fill="#d2d2d2" fill-opacity="0.38"/>
<circle cx="303.42" cy="283.6" r="3" fill="#d2d2d2" fill-opacity="0.27"/>
<circle cx="285.75" cy="563.51" r="13" fill="#d2d2d2" fill-opacity="0.43"/>
<circle cx="1109.89" cy="690.61" r="9" fill="#d2d2d2" fill-opacity="0.28"/>
<circle cx="1050.32" cy="412.14" r="6" fill="#d2d2d2" fill-opacity="0.41"/>
<circle cx="591.11" cy="268.23" r="4" fill="#d2d2d2" fill-opacity="0.27"/>
<circle cx="331.22" cy="687.62" r="10" fill="#d2d2d2" fill-opacity="0.49"/>
<circle cx="189.64" cy="606.65" r="15" fill="#d2d2d2" fill-opacity="0.35"/>
<circle cx="267.65" cy="507.42" r="8" fill="#d2d2d2" fill-opacity="0.27"/>
<circle cx="795.68" cy="377.73" r="7" fill="#d2d2d2" fill-opacity="0.3"/>
<circle cx="61.53" cy="500.55" r="11" fill="#d2d2d2" fill-opacity="0.52"/>
<circle cx="732.18" cy="523.97" r="3" fill="#d2d2d2" fill-opacity="0.41"/>
<circle cx="298.13" cy="394.31" r="13" fill="#d2d2d2" fill-opacity="0.29"/>
<circle cx="436.36" cy="317.28" r="8" fill="#d2d2d2" fill-opacity="0.47"/>
<circle cx="958.76" cy="303.73" r="15" fill="#d2d2d2" fill-opacity="0.3"/>
<circle cx="290.5" cy="462.59" r="18" fill="#d2d2d2" fill-opacity="0.27"/>
<circle cx="279.99" cy="74.78" r="10" fill="#d2d2d2" fill-opacity="0.54"/>
<circle cx="939.62" cy="260.07" r="8" fill="#d2d2d2" fill-opacity="0.42"/>
<circle cx="1045.81" cy="327.37" r="15" fill="#d2d2d2" fill-opacity="0.3"/>
<circle cx="431.52" cy="384.1" r="4" fill="#d2d2d2" fill-opacity="0.39"/>
<circle cx="592.35" cy="704.34" r="10" fill="#d2d2d2" fill-opacity="0.45"/>
<circle cx="275.01" cy="675.15" r="6" fill="#d2d2d2" fill-opacity="0.5"/>
<circle cx="264.02" cy="739.71" r="10" fill="#d2d2d2" fill-opacity="0.33"/>
<circle cx="1083.43" cy="571.5" r="3" fill="#d2d2d2" fill-opacity="0.37"/>
<circle cx="413.75" cy="511.38" r="3" fill="#d2d2d2" fill-opacity="0.42"/>
<circle cx="866.23" cy="214.52" r="3" fill="#d2d2d2" fill-opacity="0.3"/>
<circle cx="910.43" cy="468.59" r="10" fill="#d2d2d2" fill-opacity="0.42"/>
<circle cx="804.44" cy="145.01" r="6" fill="#d2d2d2" fill-opacity="0.42"/>
<circle cx="340.32" cy="337.06" r="5" fill="#d2d2d2" fill-opacity="0.55"/>
<circle cx="193.38" cy="271.64" r="3" fill="#d2d2d2" fill-opacity="0.3"/>
<circle cx="498.21" cy="105.36" r="10" fill="#d2d2d2" fill-opacity="0.49"/>
<circle cx="318.37" cy="443.42" r="6" fill="#d2d2d2" fill-opacity="0.51"/>
<circle cx="1064.35" cy="235.56" r="18" fill="#d2d2d2" fill-opacity="0.37"/>
<circle cx="104.69" cy="681.2" r="4" fill="#d2d2d2" fill-opacity="0.54"/>
<circle cx="1008.2" cy="98.67" r="5" fill="#d2d2d2" fill-opacity="0.51"/>
<circle cx="495.29" cy="415.27" r="7" fill="#d2d2d2" fill-opacity="0.49"/>
<circle cx="742.62" cy="403.83" r="4" fill="#d2d2d2" fill-opacity="0.38"/>
<circle cx="579.57" cy="415.99" r="15" fill="#d2d2d2" fill-opacity="0.49"/>
<circle cx="1002.7" cy="714.04" r="6" fill="#d2d2d2" fill-opacity="0.38"/>
<circle cx="677.72" cy="224.81" r="9" fill="#d2d2d2" fill-opacity="0.3"/>
<circle cx="783.63" cy="226.4" r="6" fill="#d2d2d2" fill-opacity="0.37"/>
<circle cx="1063.68" cy="227.63" r="4" fill="#d2d2d2" fill-opacity="0.46"/>
<circle cx="110.51" cy="520.85" r="6" fill="#d2d2d2" fill-opacity="0.45"/>
<circle cx="897.57" cy="56.63" r="10" fill="#d2d2d2" fill-opacity="0.35"/>
<circle cx="856.43" cy="709.62" r="5" fill="#d2d2d2" fill-opacity="0.39"/>
<circle cx="393.72" cy="720.15" r="9" fill="#d2d2d2" fill-opacity="0.28"/>
<circle cx="1079.22" cy="424.35" r="9" fill="#d2d2d2" fill-opacity="0.54"/>
<circle cx="1004.1" cy="210.42" r="18" fill="#d2d2d2" fill-opacity="0.46"/>
<circle cx="452.89" cy="391.1" r="8" fill="#d2d2d2" fill-opacity="0.29"/>
<circle cx="285.92" cy="198.31" r="7" fill="#d2d2d2" fill-opacity="0.28"/>
<circle cx="590.48" cy="660.35" r="13" fill="#d2d2d2" fill-opacity="0.38"/>
<circle cx="132.46" cy="451.82" r="8" fill="#d2d2d2" fill-opacity="0.42"/>
<circle cx="427.02" cy="536.06" r="9" fill="#d2d2d2" fill-opacity="0.34"/>
<circle cx="910.05" cy="528.25" r="15" fill="#d2d2d2" fill-opacity="0.45"/>
<circle cx="220.59" cy="305.1" r="15" fill="#d2d2d2" fill-opacity="0.48"/>
<circle cx="935.67" cy="493.04" r="15" fill="#d2d2d2" fill-opacity="0.32"/>
<circle cx="677.7" cy="580.58" r="8" fill="#d2d2d2" fill-opacity="0.48"/>
<circle cx="368.9" cy="226.48" r="4" fill="#d2d2d2" fill-opacity="0.43"/>
<circle cx="950.63" cy="653.84" r="13" fill="#d2d2d2" fill-opacity="0.26"/>
<circle cx="1000.91" cy="460.91" r="9" fill="#d2d2d2" fill-opacity="0.47"/>
<circle cx="338.78" cy="98.34" r="3" fill="#d2d2d2" fill-opacity="0.5"/>
<circle cx="140.93" cy="221.76" r="5" fill="#d2d2d2" fill-opacity="0.32"/>
<circle cx="331.04" cy="540.66" r="6" fill="#d2d2d2" fill-opacity="0.26"/>
<circle cx="171.08" cy="694.88" r="6" fill="#d2d2d2" fill-opacity="0.29"/>
<circle cx="405.48" cy="410.4" r="8" fill="#d2d2d2" fill-opacity="0.34"/>
<circle cx="842.37" cy="653.59" r="8" fill="#d2d2d2" fill-opacity="0.27"/>
<circle cx="138.96" cy="162.1" r="4" fill="#d2d2d2" fill-opacity="0.27"/>
<circle cx="105.47" cy="721.76" r="5" fill="#d2d2d2" fill-opacity="0.49"/>
<circle cx="822.5" cy="285.77" r="10" fill="#d2d2d2" fill-opacity="0.29"/>
<circle cx="691.49" cy="732.8" r="3" fill="#d2d2d2" fill-opacity="0.48"/>
<circle cx="939.27" cy="341.74" r="7" fill="#d2d2d2" fill-opacity="0.47"/>
<circle cx="293.18" cy="600.03" r="10" fill="#d2d2d2" fill-opacity="0.28"/>
<circle cx="671.39" cy="181.99" r="18" fill="#d2d2d2" fill-opacity="0.39"/>
<circle cx="546.54" cy="612.11" r="13" fill="#d2d2d2" fill-opacity="0.28"/>
<circle cx="753.26" cy="439.87" r="5" fill="#d2d2d2" fill-opacity="0.25"/>
<circle cx="1039.61" cy="198.89" r="15" fill="#d2d2d2" fill-opacity="0.39"/>
<circle cx="845.89" cy="395.9" r="11" fill="#d2d2d2" fill-opacity="0.41"/>
<circle cx="817.89" cy="71.32" r="18" fill="#d2d2d2" fill-opacity="0.26"/>
<circle cx="593.56" cy="195.91" r="18" fill="#d2d2d2" fill-opacity="0.46"/>
<circle cx="701.6" cy="672.26" r="6" fill="#d2d2d2" fill-opacity="0.55"/>
<circle cx="1105.06" cy="670.01" r="5" fill="#d2d2d2" fill-opacity="0.3"/>
<circle cx="289.89" cy="582.21" r="18" fill="#d2d2d2" fill-opacity="0.46"/>
<circle cx="1066.23" cy="598.11" r="7" fill="#d2d2d2" fill-opacity="0.37"/>
<circle cx="604.28" cy="261.4" r="13" fill="#d2d2d2" fill-opacity="0.34"/>
<circle cx="361.07" cy="274.27" r="6" fill="#d2d2d2" fill-opacity="0.3"/>
<circle cx="1037.57" cy="655.32" r="10" fill="#d2d2d2" fill-opacity="0.26"/>
<circle cx="389.81" cy="591.66" r="18" fill="#d2d2d2" fill-opacity="0.41"/>
<circle cx="434.61" cy="544.26" r="11" fill="#d2d2d2" fill-opacity="0.34"/>
<circle cx="129.44" cy="504.68" r="13" fill="#d2d2d2" fill-opacity="0.37"/>
<circle cx="562.54" cy="224.29" r="15" fill="#d2d2d2" fill-opacity="0.4"/>
<circle cx="526.6" cy="638.08" r="18" fill="#d2d2d2" fill-opacity="0.38"/>
<circle cx="797.48" cy="419.14" r="18" fill="#d2d2d2" fill-opacity="0.53"/>
<circle cx="705.87" cy="122.41" r="10" fill="#d2d2d2" fill-opacity="0.28"/>
<circle cx="1027.81" cy="141.8" r="11" fill="#d2d2d2" fill-opacity="0.29"/>
<circle cx="543.82" cy="477.35" r="7" fill="#d2d2d2" fill-opacity="0.45"/>
<circle cx="953.57" cy="505.76" r="8" fill="#d2d2d2" fill-opacity="0.38"/>
<circle cx="140.84" cy="321.76" r="4" fill="#d2d2d2" fill-opacity="0.46"/>
<circle cx="830.15" cy="72" r="15" fill="#d2d2d2" fill-opacity="0.29"/>
<circle cx="162.94" cy="98.74" r="5" fill="#d2d2d2" fill-opacity="0.5"/>
<circle cx="689.89" cy="330.38" r="6" fill="#d2d2d2" fill-opacity="0.3"/>
<circle cx="860.86" cy="343.79" r="8" fill="#d2d2d2" fill-opacity="0.36"/>
<circle cx="994.58" cy="366.08" r="11" fill="#d2d2d2" fill-opacity="0.29"/>
<circle cx="325.14" cy="561.05" r="18" fill="#d2d2d2" fill-opacity="0.52"/>
<circle cx="551.13" cy="709.91" r="13" fill="#d2d2d2" fill-opacity="0.49"/>
<circle cx="854.29" cy="321.31" r="6" fill="#d2d2d2" fill-opacity="0.47"/>
<circle cx="187.41" cy="183.62" r="10" fill="#d2d2d2" fill-opacity="0.28"/>
<circle cx="912.21" cy="283.81" r="6" fill="#d2d2d2" fill-opacity="0.26"/>
<circle cx="593.59" cy="611.76" r="18" fill="#d2d2d2" fill-opacity="0.29"/>
<circle cx="955.8" cy="271.65" r="5" fill="#d2d2d2" fill-opacity="0.47"/>
<circle cx="949.58" cy="521.01" r="15" fill="#d2d2d2" fill-opacity="0.38"/>
<circle cx="920.97" cy="645.51" r="13" fill="#d2d2d2" fill-opacity="0.35"/>
<circle cx="884.7" cy="225.49" r="3" fill="#d2d2d2" fill-opacity="0.52"/>
<circle cx="1059.14" cy="275.67" r="8" fill="#d2d2d2" fill-opacity="0.5"/>
<circle cx="331.94" cy="302.43" r="8" fill="#d2d2d2" fill-opacity="0.44"/>
<circle cx="468.08" cy="245.93" r="6" fill="#d2d2d2" fill-opacity="0.25"/>
<circle cx="766.34" cy="571.84" r="13" fill="#d2d2d2" fill-opacity="0.48"/>
<circle cx="309.03" cy="684.51" r="3" fill="#d2d2d2" fill-opacity="0.55"/>
<circle cx="821.75" cy="570.84" r="7" fill="#d2d2d2" fill-opacity="0.33"/>
<circle cx="745.29" cy="312.66" r="7" fill="#d2d2d2" fill-opacity="0.29"/>
<circle cx="621.47" cy="282.12" r="3" fill="#d2d2d2" fill-opacity="0.35"/>
<circle cx="944.5" cy="635.03" r="5" fill="#d2d2d2" fill-opacity="0.51"/>
<circle cx="1061.94" cy="652.47" r="11" fill="#d2d2d2" fill-opacity="0.45"/>
<circle cx="100.88" cy="650.41" r="11" fill="#d2d2d2" fill-opacity="0.54"/>
<circle cx="1052.94" cy="374.45" r="10" fill="#d2d2d2" fill-opacity="0.48"/>
<circle cx="972.04" cy="197.75" r="8" fill="#d2d2d2" fill-opacity="0.36"/>
<circle cx="117.86" cy="131.66" r="3" fill="#d2d2d2" fill-opacity="0.52"/>
<circle cx="77.11" cy="305.32" r="13" fill="#d2d2d2" fill-opacity="0.27"/>
<circle cx="835.57" cy="186.92" r="10" fill="#d2d2d2" fill-opacity="0.44"/>
<circle cx="379.81" cy="378.89" r="9" fill="#d2d2d2" fill-opacity="0.34"/>
<circle cx="720.24" cy="667.37" r="10" fill="#d2d2d2" fill-opacity="0.35"/>
<circle cx="415.66" cy="628.83" r="18" fill="#d2d2d2" fill-opacity="0.51"/>
<circle cx="657.66" cy="123.06" r="13" fill="#d2d2d2" fill-opacity="0.55"/>
<circle cx="999.77" cy="97.23" r="10" fill="#d2d2d2" fill-opacity="0.37"/>
<circle cx="983.29" cy="509.22" r="6" fill="#d2d2d2" fill-opacity="0.31"/>
<circle cx="625.33" cy="690.05" r="15" fill="#d2d2d2" fill-opacity="0.46"/>
<circle cx="182.35" cy="680.89" r="3" fill="#d2d2d2" fill-opacity="0.39"/>
<circle cx="653.39" cy="66.31" r="5" fill="#d2d2d2" fill-opacity="0.38"/>
<circle cx="147.88" cy="411.34" r="11" fill="#d2d2d2" fill-opacity="0.49"/>
<circle cx="428.01" cy="203.41" r="18" fill="#d2d2d2" fill-opacity="0.43"/>
<circle cx="111.25" cy="303.04" r="18" fill="#d2d2d2" fill-opacity="0.38"/>
<circle cx="453.43" cy="539.8" r="9" fill="#d2d2d2" fill-opacity="0.31"/>
<circle cx="369.87" cy="277.03" r="18" fill="#d2d2d2" fill-opacity="0.54"/>
<circle cx="570.75" cy="569" r="3" fill="#d2d2d2" fill-opacity="0.45"/>
<circle cx="201.85" cy="710.1" r="11" fill="#d2d2d2" fill-opacity="0.52"/>
<circle cx="223.91" cy="62.11" r="15" fill="#d2d2d2" fill-opacity="0.42"/>
<circle cx="855.1" cy="649.24" r="8" fill="#d2d2d2" fill-opacity="0.27"/>
<circle cx="108.75" cy="398.39" r="11" fill="#d2d2d2" fill-opacity="0.51"/>
<circle cx="807.22" cy="541.63" r="6" fill="#d2d2d2" fill-opacity="0.4"/>
<circle cx="1038.58" cy="436.38" r="5" fill="#d2d2d2" fill-opacity="0.3"/>
<circle cx="514.56" cy="70.99" r="5" fill="#d2d2d2" fill-opacity="0.43"/>
<circle cx="324.69" cy="240.45" r="9" fill="#d2d2d2" fill-opacity="0.31"/>
<circle cx="716.19" cy="87.37" r="3" fill="#d2d2d2" fill-opacity="0.49"/>
<circle cx="1007.43" cy="164.15" r="6" fill="#d2d2d2" fill-opacity="0.41"/>
<circle cx="296.01" cy="617.12" r="6" fill="#d2d2d2" fill-opacity="0.43"/>
<circle cx="1008.39" cy="189.38" r="13" fill="#d2d2d2" fill-opacity="0.47"/>
<circle cx="166.39" cy="369.02" r="13" fill="#d2d2d2" fill-opacity="0.46"/>
<circle cx="338.89" cy="628.46" r="11" fill="#d2d2d2" fill-opacity="0.27"/>
<circle cx="1050.77" cy="355.41" r="4" fill="#d2d2d2" fill-opacity="0.51"/>
<circle cx="1001.54" cy="435.93" r="9" fill="#d2d2d2" fill-opacity="0.29"/>
<circle cx="537.57" cy="490.71" r="11" fill="#d2d2d2" fill-opacity="0.35"/>
<circle cx="862.58" cy="219.13" r="6" fill="#d2d2d2" fill-opacity="0.32"/>
<circle cx="971.43" cy="296.02" r="9" fill="#d2d2d2" fill-opacity="0.34"/>
<circle cx="221.64" cy="200.77" r="4" fill="#d2d2d2" fill-opacity="0.29"/>
<circle cx="675.12" cy="135.88" r="7" fill="#d2d2d2" fill-opacity="0.31"/>
<circle cx="558.5" cy="353.48" r="13" fill="#d2d2d2" fill-opacity="0.4"/>
<circle cx="1051.51" cy="375.28" r="6" fill="#d2d2d2" fill-opacity="0.39"/>
<circle cx="589.53" cy="395.12" r="6" fill="#d2d2d2" fill-opacity="0.27"/>
<circle cx="793.42" cy="717.23" r="9" fill="#d2d2d2" fill-opacity="0.28"/>
<circle cx="828.09" cy="281.54" r="18" fill="#d2d2d2" fill-opacity="0.46"/>
<circle cx="465.43" cy="155.11" r="13" fill="#d2d2d2" fill-opacity="0.41"/>
<circle cx="94.14" cy="591.26" r="10" fill="#d2d2d2" fill-opacity="0.36"/>
<circle cx="717.75" cy="684.96" r="9" fill="#d2d2d2" fill-opacity="0.54"/>
<circle cx="706.94" cy="157.96" r="15" fill="#d2d2d2" fill-opacity="0.45"/>
<circle cx="829.15" cy="705.02" r="5" fill="#d2d2d2" fill-opacity="0.44"/>
<circle cx="768.52" cy="325.16" r="8" fill="#d2d2d2" fill-opacity="0.43"/>
<circle cx="767.88" cy="284.64" r="5" fill="#d2d2d2" fill-opacity="0.41"/>
<circle cx="476.68" cy="175.86" r="4" fill="#d2d2d2" fill-opacity="0.29"/>
<circle cx="1008.69" cy="723.08" r="13" fill="#d2d2d2" fill-opacity="0.35"/>
<circle cx="558.4" cy="392.03" r="8" fill="#d2d2d2" fill-opacity="0.41"/>
<circle cx="71.02" cy="428.8" r="8" fill="#d2d2d2" fill-opacity="0.44"/>
<circle cx="555.53" cy="279.51" r="9" fill="#d2d2d2" fill-opacity="0.43"/>
<circle cx="649.22" cy="641.4" r="3" fill="#d2d2d2" fill-opacity="0.36"/>
<circle cx="460.97" cy="300.37" r="15" fill="#d2d2d2" fill-opacity="0.41"/>
<circle cx="342.37" cy="279.33" r="10" fill="#d2d2d2" fill-opacity="0.3"/>
<circle cx="781.36" cy="65.01" r="6" fill="#d2d2d2" fill-opacity="0.31"/>
<circle cx="830.93" cy="147" r="7" fill="#d2d2d2" fill-opacity="0.32"/>
<circle cx="111.04" cy="232.05" r="18" fill="#d2d2d2" fill-opacity="0.54"/>
<circle cx="1011.37" cy="123.91" r="5" fill="#d2d2d2" fill-opacity="0.42"/>
<circle cx="1027.27" cy="111.82" r="5" fill="#d2d2d2" fill-opacity="0.38"/>
<circle cx="254.51" cy="566.15" r="18" fill="#d2d2d2" fill-opacity="0.37"/>
<circle cx="148.76" cy="652.32" r="5" fill="#d2d2d2" fill-opacity="0.43"/>
<circle cx="1085.4" cy="76.29" r="3" fill="#d2d2d2" fill-opacity="0.3"/>
<circle cx="91.35" cy="276.19" r="18" fill="#d2d2d2" fill-opacity="0.44"/>
<circle cx="169.08" cy="161.8" r="5" fill="#d2d2d2" fill-opacity="0.31"/>
<circle cx="429.39" cy="699.42" r="6" fill="#d2d2d2" fill-opacity="0.36"/>
<circle cx="1087.75" cy="349.78" r="9" fill="#d2d2d2" fill-opacity="0.37"/>
<circle cx="522.93" cy="383.32" r="3" fill="#d2d2d2" fill-opacity="0.55"/>
<circle cx="798.22" cy="170.82" r="5" fill="#d2d2d2" fill-opacity="0.52"/>
<circle cx="891.32" cy="481.96" r="15" fill="#d2d2d2" fill-opacity="0.27"/>
<circle cx="612.03" cy="519.69" r="3" fill="#d2d2d2" fill-opacity="0.48"/>
<circle cx="630.17" cy="660.24" r="3" fill="#d2d2d2" fill-opacity="0.39"/>
<circle cx="984.26" cy="464.7" r="8" fill="#d2d2d2" fill-opacity="0.45"/>
<circle cx="592.04" cy="151.75" r="3" fill="#d2d2d2" fill-opacity="0.52"/>
<circle cx="644.47" cy="148.3" r="5" fill="#d2d2d2" fill-opacity="0.46"/>
<circle cx="216.02" cy="495.83" r="11" fill="#d2d2d2" fill-opacity="0.49"/>
<circle cx="883.13" cy="405.24" r="3" fill="#d2d2d2" fill-opacity="0.5"/>
<circle cx="433.68" cy="536.84" r="6" fill="#d2d2d2" fill-opacity="0.42"/>
<circle cx="822.09" cy="332.06" r="10" fill="#d2d2d2" fill-opacity="0.54"/>
<circle cx="1034.68" cy="474.49" r="8" fill="#d2d2d2" fill-opacity="0.52"/>
<circle cx="252.31" cy="735.52" r="6" fill="#d2d2d2" fill-opacity="0.49"/>
<circle cx="885.42" cy="616.66" r="13" fill="#d2d2d2" fill-opacity="0.46"/>
<circle cx="387.37" cy="572.71" r="7" fill="#d2d2d2" fill-opacity="0.49"/>
<circle cx="407.03" cy="445.79" r="11" fill="#d2d2d2" fill-opacity="0.4"/>
<circle cx="341.62" cy="686.8" r="4" fill="#d2d2d2" fill-opacity="0.4"/>
<circle cx="928.36" cy="82.04" r="9" fill="#d2d2d2" fill-opacity="0.48"/>
<circle cx="657.73" cy="675.98" r="13" fill="#d2d2d2" fill-opacity="0.4"/>
<circle cx="797.32" cy="53.01" r="13" fill="#d2d2d2" fill-opacity="0.48"/>
<circle cx="159.08" cy="240.88" r="4" fill="#d2d2d2" fill-opacity="0.43"/>
<circle cx="511.49" cy="658.99" r="7" fill="#d2d2d2" fill-opacity="0.27"/>
<circle cx="525.84" cy="304.16" r="3" fill="#d2d2d2" fill-opacity="0.4"/>
<circle cx="815.11" cy="198.01" r="15" fill="#d2d2d2" fill-opacity="0.33"/>
<circle cx="878.99" cy="191.93" r="11" fill="#d2d2d2" fill-opacity="0.53"/>
<circle cx="1107.78" cy="344.46" r="13" fill="#d2d2d2" fill-opacity="0.46"/>
<circle cx="736.32" cy="241.56" r="15" fill="#d2d2d2" fill-opacity="0.51"/>
<circle cx="475.33" cy="705.5" r="10" fill="#d2d2d2" fill-opacity="0.54"/>
<circle cx="99.11" cy="626.96" r="15" fill="#d2d2d2" fill-opacity="0.34"/>
<circle cx="688.04" cy="646.83" r="18" fill="#d2d2d2" fill-opacity="0.47"/>
<circle cx="189.02" cy="489.43" r="9" fill="#d2d2d2" fill-opacity="0.51"/>
<circle cx="325.3" cy="399.4" r="10" fill="#d2d2d2" fill-opacity="0.39"/>
<circle cx="142.1" cy="637.46" r="3" fill="#d2d2d2" fill-opacity="0.31"/>
<circle cx="686.78" cy="654.49" r="4" fill="#d2d2d2" fill-opacity="0.47"/>
<circle cx="413.82" cy="693.62" r="5" fill="#d2d2d2" fill-opacity="0.54"/>
<circle cx="733.92" cy="572.9" r="15" fill="#d2d2d2" fill-opacity="0.31"/>
<circle cx="580.15" cy="282.08" r="5" fill="#d2d2d2" fill-opacity="0.52"/>
<circle cx="286.51" cy="641.72" r="6" fill="#d2d2d2" fill-opacity="0.33"/>
<circle cx="1017.37" cy="202.6" r="13" fill="#d2d2d2" fill-opacity="0.34"/>
<circle cx="1103.15" cy="93.53" r="9" fill="#d2d2d2" fill-opacity="0.41"/>
<circle cx="956.12" cy="356.04" r="4" fill="#d2d2d2" fill-opacity="0.37"/>
<circle cx="547.83" cy="265.8" r="3" fill="#d2d2d2" fill-opacity="0.47"/>
<circle cx="295.96" cy="369.69" r="11" fill="#d2d2d2" fill-opacity="0.54"/>
<circle cx="1028.63" cy="160.74" r="15" fill="#d2d2d2" fill-opacity="0.29"/>
<circle cx="387.35" cy="663.71" r="5" fill="#d2d2d2" fill-opacity="0.52"/>
<circle cx="547.74" cy="693.92" r="13" fill="#d2d2d2" fill-opacity="0.36"/>
<circle cx="637.28" cy="575.7" r="13" fill="#d2d2d2" fill-opacity="0.35"/>
<circle cx="413.37" cy="115.79" r="9" fill="#d2d2d2" fill-opacity="0.54"/>
<circle cx="1090.55" cy="146.83" r="13" fill="#d2d2d2" fill-opacity="0.33"/>
<circle cx="400.07" cy="448.65" r="5" fill="#d2d2d2" fill-opacity="0.34"/>
<circle cx="80.38" cy="191.16" r="4" fill="#d2d2d2" fill-opacity="0.54"/>
<circle cx="532.56" cy="304.94" r="15" fill="#d2d2d2" fill-opacity="0.46"/>
<circle cx="559.56" cy="691.39" r="6" fill="#d2d2d2" fill-opacity="0.41"/>
<circle cx="964.32" cy="512.22" r="8" fill="#d2d2d2" fill-opacity="0.31"/>
<circle cx="251.85" cy="252.22" r="18" fill="#d2d2d2" fill-opacity="0.32"/>
<circle cx="1081.26" cy="94.42" r="3" fill="#d2d2d2" fill-opacity="0.31"/>
<circle cx="125.17" cy="405.29" r="15" fill="#d2d2d2" fill-opacity="0.29"/>
<circle cx="937.05" cy="511.65" r="15" fill="#d2d2d2" fill-opacity="0.34"/>
<circle cx="156.75" cy="183.28" r="13" fill="#d2d2d2" fill-opacity="0.46"/>
<circle cx="51.88" cy="83.98" r="9" fill="#d2d2d2" fill-opacity="0.28"/>
<circle cx="347.32" cy="667.7" r="18" fill="#d2d2d2" fill-opacity="0.25"/>
<circle cx="490.69" cy="672.75" r="13" fill="#d2d2d2" fill-opacity="0.41"/>
<circle cx="241.58" cy="445.43" r="5" fill="#d2d2d2" fill-opacity="0.52"/>
<circle cx="287.6" cy="195.29" r="4" fill="#d2d2d2" fill-opacity="0.33"/>
<circle cx="983.31" cy="405.74" r="8" fill="#d2d2d2" fill-opacity="0.45"/>
<circle cx="457.2" cy="734.93" r="3" fill="#d2d2d2" fill-opacity="0.27"/>
<circle cx="930.24" cy="727.04" r="4" fill="#d2d2d2" fill-opacity="0.5"/>
<circle cx="995.93" cy="404.94" r="9" fill="#d2d2d2" fill-opacity="0.36"/>
<circle cx="751.53" cy="707.95" r="3" fill="#d2d2d2" fill-opacity="0.55"/>
<circle cx="710.69" cy="500.87" r="5" fill="#d2d2d2" fill-opacity="0.36"/>
<circle cx="437.4" cy="142.04" r="8" fill="#d2d2d2" fill-opacity="0.33"/>
<circle cx="200.16" cy="159.13" r="5" fill="#d2d2d2" fill-opacity="0.28"/>
<circle cx="894.66" cy="136.11" r="7" fill="#d2d2d2" fill-opacity="0.4"/>
<circle cx="658.9" cy="436.72" r="9" fill="#d2d2d2" fill-opacity="0.39"/>
<circle cx="845.04" cy="551.94" r="6" fill="#d2d2d2" fill-opacity="0.38"/>
<circle cx="300.96" cy="572.21" r="6" fill="#d2d2d2" fill-opacity="0.52"/>
<circle cx="428.86" cy="583.78" r="10" fill="#d2d2d2" fill-opacity="0.43"/>
<circle cx="505.12" cy="378.69" r="3" fill="#d2d2d2" fill-opacity="0.32"/>
<circle cx="760.21" cy="625.96" r="10" fill="#d2d2d2" fill-opacity="0.55"/>
<circle cx="303.17" cy="75.95" r="5" fill="#d2d2d2" fill-opacity="0.31"/>
<circle cx="325.39" cy="584.05" r="4" fill="#d2d2d2" fill-opacity="0.35"/>
<circle cx="133.57" cy="570.61" r="4" fill="#d2d2d2" fill-opacity="0.4"/>
<circle cx="1042.83" cy="218.62" r="5" fill="#d2d2d2" fill-opacity="0.3"/>
<circle cx="507.87" cy="692.75" r="4" fill="#d2d2d2" fill-opacity="0.46"/>
<circle cx="504.57" cy="164.51" r="3" fill="#d2d2d2" fill-opacity="0.4"/>
<circle cx="1099.23" cy="557.09" r="18" fill="#d2d2d2" fill-opacity="0.3"/>
<circle cx="712.7" cy="90.29" r="11" fill="#d2d2d2" fill-opacity="0.26"/>
<circle cx="100.64" cy="409.43" r="18" fill="#d2d2d2" fill-opacity="0.47"/>
<circle cx="591.28" cy="165.99" r="15" fill="#d2d2d2" fill-opacity="0.31"/>
<circle cx="324.5" cy="363.17" r="6" fill="#d2d2d2" fill-opacity="0.52"/>
<circle cx="53.78" cy="203.68" r="9" fill="#d2d2d2" fill-opacity="0.28"/>
<circle cx="482.43" cy="419.96" r="7" fill="#d2d2d2" fill-opacity="0.55"/>
<circle cx="405.07" cy="233.69" r="15" fill="#d2d2d2" fill-opacity="0.35"/>
<circle cx="90.18" cy="337.44" r="9" fill="#d2d2d2" fill-opacity="0.27"/>
<circle cx="139.92" cy="89.23" r="6" fill="#d2d2d2" fill-opacity="0.55"/>
<circle cx="1025.15" cy="118.92" r="11" fill="#d2d2d2" fill-opacity="0.45"/>
<circle cx="318.17" cy="118.45" r="10" fill="#d2d2d2" fill-opacity="0.42"/>
<circle cx="524.75" cy="93.79" r="13" fill="#d2d2d2" fill-opacity="0.49"/>
<circle cx="551.92" cy="147.5" r="10" fill="#d2d2d2" fill-opacity="0.38"/>
<circle cx="749.59" cy="67.35" r="5" fill="#d2d2d2" fill-opacity="0.42"/>
<circle cx="1084.88" cy="81.21" r="18" fill="#d2d2d2" fill-opacity="0.49"/>
<circle cx="129.4" cy="603.22" r="6" fill="#d2d2d2" fill-opacity="0.27"/>
<circle cx="667.98" cy="548.87" r="8" fill="#d2d2d2" fill-opacity="0.3"/>
<circle cx="929.68" cy="330.59" r="7" fill="#d2d2d2" fill-opacity="0.3"/>
<circle cx="514.05" cy="173.96" r="5" fill="#d2d2d2" fill-opacity="0.28"/>
<circle cx="819.68" cy="646.66" r="15" fill="#d2d2d2" fill-opacity="0.52"/>
<circle cx="748.57" cy="229.87" r="4" fill="#d2d2d2" fill-opacity="0.28"/>
<circle cx="453.42" cy="513.33" r="3" fill="#d2d2d2" fill-opacity="0.3"/>
<circle cx="976.55" cy="108.1" r="7" fill="#d2d2d2" fill-opacity="0.55"/>
<circle cx="387.41" cy="677.14" r="11" fill="#d2d2d2" fill-opacity="0.51"/>
<circle cx="673.52" cy="718.85" r="15" fill="#d2d2d2" fill-opacity="0.49"/>
<circle cx="939.72" cy="417.9" r="7" fill="#d2d2d2" fill-opacity="0.41"/>
<circle cx="561.94" cy="282.8" r="8" fill="#d2d2d2" fill-opacity="0.36"/>
<circle cx="642.64" cy="732.96" r="13" fill="#d2d2d2" fill-opacity="0.33"/>
<circle cx="583.06" cy="397.68" r="9" fill="#d2d2d2" fill-opacity="0.38"/>
<circle cx="683.66" cy="80.09" r="7" fill="#d2d2d2" fill-opacity="0.33"/>
<circle cx="866.25" cy="535.54" r="8" fill="#d2d2d2" fill-opacity="0.41"/>
<circle cx="313.9" cy="688.67" r="11" fill="#d2d2d2" fill-opacity="0.41"/>
<circle cx="626.68" cy="252.22" r="18" fill="#d2d2d2" fill-opacity="0.26"/>
<circle cx="322.21" cy="271.27" r="15" fill="#d2d2d2" fill-opacity="0.31"/>
<circle cx="529.15" cy="296.98" r="7" fill="#d2d2d2" fill-opacity="0.39"/>
<circle cx="141.37" cy="298.66" r="15" fill="#d2d2d2" fill-opacity="0.31"/>
<circle cx="297.83" cy="591.23" r="15" fill="#d2d2d2" fill-opacity="0.47"/>
<circle cx="321.16" cy="302.85" r="3" fill="#d2d2d2" fill-opacity="0.33"/>
<circle cx="114.52" cy="298.82" r="3" fill="#d2d2d2" fill-opacity="0.38"/>
<circle cx="694.84" cy="664.08" r="7" fill="#d2d2d2" fill-opacity="0.49"/>
<circle cx="293.06" cy="282.47" r="4" fill="#d2d2d2" fill-opacity="0.47"/>
<circle cx="831.26" cy="178.35" r="4" fill="#d2d2d2" fill-opacity="0.36"/>
<circle cx="336.05" cy="386.17" r="18" fill="#d2d2d2" fill-opacity="0.29"/>
<circle cx="409.22" cy="339.89" r="10" fill="#d2d2d2" fill-opacity="0.34"/>
<circle cx="214.71" cy="156.2" r="15" fill="#d2d2d2" fill-opacity="0.31"/>
<circle cx="217.27" cy="243.84" r="15" fill="#d2d2d2" fill-opacity="0.51"/>
<circle cx="401.39" cy="637.65" r="3" fill="#d2d2d2" fill-opacity="0.38"/>
<circle cx="253.84" cy="583.19" r="8" fill="#d2d2d2" fill-opacity="0.4"/>
<circle cx="168.05" cy="237.41" r="11" fill="#d2d2d2" fill-opacity="0.37"/>
<circle cx="680.99" cy="226.14" r="3" fill="#d2d2d2" fill-opacity="0.37"/>
<circle cx="247" cy="589.64" r="18" fill="#d2d2d2" fill-opacity="0.36"/>
<circle cx="856.92" cy="279.74" r="15" fill="#d2d2d2" fill-opacity="0.26"/>
<circle cx="809.54" cy="192.73" r="13" fill="#d2d2d2" fill-opacity="0.45"/>
<circle cx="697.65" cy="252.72" r="6" fill="#d2d2d2" fill-opacity="0.46"/>
<circle cx="949.87" cy="216.08" r="10" fill="#d2d2d2" fill-opacity="0.43"/>
<circle cx="659.13" cy="272.18" r="3" fill="#d2d2d2" fill-opacity="0.42"/>
<circle cx="596.99" cy="636.78" r="4" fill="#d2d2d2" fill-opacity="0.4"/>
<circle cx="179.68" cy="196.84" r="7" fill="#d2d2d2" fill-opacity="0.55"/>
<circle cx="1020.06" cy="60.62" r="6" fill="#d2d2d2" fill-opacity="0.28"/>
<circle cx="1095.57" cy="215.86" r="9" fill="#d2d2d2" fill-opacity="0.32"/>
<circle cx="672.48" cy="310.27" r="3" fill="#d2d2d2" fill-opacity="0.41"/>
<circle cx="633.14" cy="259.6" r="10" fill="#d2d2d2" fill-opacity="0.48"/>
<circle cx="557.9" cy="731.03" r="3" fill="#d2d2d2" fill-opacity="0.45"/>
<circle cx="539.66" cy="463.33" r="5" fill="#d2d2d2" fill-opacity="0.48"/>
<circle cx="942.69" cy="428.36" r="9" fill="#d2d2d2" fill-opacity="0.3"/>
<circle cx="1063.54" cy="725.46" r="18" fill="#d2d2d2" fill-opacity="0.38"/>
<circle cx="1102.57" cy="112.75" r="10" fill="#d2d2d2" fill-opacity="0.51"/>
<circle cx="784.75" cy="96.56" r="4" fill="#d2d2d2" fill-opacity="0.31"/>
<circle cx="55.09" cy="333.14" r="10" fill="#d2d2d2" fill-opacity="0.34"/>
<circle cx="794.1" cy="406.11" r="18" fill="#d2d2d2" fill-opacity="0.3"/>
<circle cx="591.24" cy="390.66" r="8" fill="#d2d2d2" fill-opacity="0.34"/>
<circle cx="623.53" cy="202.13" r="9" fill="#d2d2d2" fill-opacity="0.36"/>
<circle cx="405.61" cy="474.23" r="13" fill="#d2d2d2" fill-opacity="0.33"/>
<circle cx="857.15" cy="476.52" r="18" fill="#d2d2d2" fill-opacity="0.36"/>
<circle cx="171.25" cy="502.98" r="11" fill="#d2d2d2" fill-opacity="0.44"/>
<circle cx="195.81" cy="515.06" r="4" fill="#d2d2d2" fill-opacity="0.35"/>
<circle cx="492.45" cy="710.26" r="8" fill="#d2d2d2" fill-opacity="0.32"/>
<circle cx="53.89" cy="738.94" r="6" fill="#d2d2d2" fill-opacity="0.45"/>
<circle cx="523.11" cy="330.07" r="6" fill="#d2d2d2" fill-opacity="0.3"/>
<circle cx="796.77" cy="163.57" r="8" fill="#d2d2d2" fill-opacity="0.49"/>
<circle cx="111.74" cy="309.89" r="8" fill="#d2d2d2" fill-opacity="0.45"/>
<circle cx="766.24" cy="392.94" r="10" fill="#d2d2d2" fill-opacity="0.49"/>
<circle cx="624.07" cy="96.55" r="5" fill="#d2d2d2" fill-opacity="0.46"/>
<circle cx="324.24" cy="494.75" r="5" fill="#d2d2d2" fill-opacity="0.46"/>
<circle cx="866.64" cy="504.47" r="8" fill="#d2d2d2" fill-opacity="0.34"/>
<circle cx="616.26" cy="544.41" r="18" fill="#d2d2d2" fill-opacity="0.43"/>
<circle cx="192.84" cy="262.99" r="15" fill="#d2d2d2" fill-opacity="0.31"/>
<circle cx="1081.95" cy="593.38" r="13" fill="#d2d2d2" fill-opacity="0.5"/>
<circle cx="762.18" cy="562.66" r="8" fill="#d2d2d2" fill-opacity="0.42"/>
<circle cx="848.31" cy="301.17" r="10" fill="#d2d2d2" fill-opacity="0.41"/>
<circle cx="224" cy="90.98" r="4" fill="#d2d2d2" fill-opacity="0.27"/>
<circle cx="712.16" cy="458.44" r="18" fill="#d2d2d2" fill-opacity="0.54"/>
<circle cx="821.78" cy="234.63" r="4" fill="#d2d2d2" fill-opacity="0.3"/>
<circle cx="927.55" cy="409.29" r="3" fill="#d2d2d2" fill-opacity="0.44"/>
<circle cx="293.56" cy="109.98" r="18" fill="#d2d2d2" fill-opacity="0.39"/>
<circle cx="302.98" cy="175.91" r="8" fill="#d2d2d2" fill-opacity="0.52"/>
<circle cx="409.15" cy="67.96" r="8" fill="#d2d2d2" fill-opacity="0.36"/>
<circle cx="1014.17" cy="65.5" r="18" fill="#d2d2d2" fill-opacity="0.29"/>
<circle cx="219.26" cy="251.88" r="7" fill="#d2d2d2" fill-opacity="0.34"/>
<circle cx="828.55" cy="110.29" r="6" fill="#d2d2d2" fill-opacity="0.55"/>
<circle cx="516.6" cy="599.11" r="7" fill="#d2d2d2" fill-opacity="0.42"/>
</g>
<path d="M57 39a4 4 0 0 1 4-4h1037a4 4 0 0 1 4 4v17H57z" fill="url(#tb)"/>
<rect x="57" y="56" width="1045" height="1" rx="0" fill="#6d6d6d" />
<text x="579" y="50.5" font-size="13.5" fill="#404040" stroke="#404040" stroke-width="0.38" text-anchor="middle" textLength="82" lengthAdjust="spacing" >[HenonSynth]</text>
<linearGradient id="tl0" x1="0" y1="0" x2="0" y2="1"><stop offset="0" stop-color="#f03c36"/><stop offset="0.45" stop-color="#f03c36"/><stop offset="1" stop-color="#ffb4b0"/></linearGradient>
<circle cx="71" cy="45.8" r="5.6" fill="url(#tl0)" stroke="#8e2020" stroke-width="0.9"/><ellipse cx="71" cy="43.2" rx="2.8" ry="1.5" fill="#fff" fill-opacity="0.6"/>
<linearGradient id="tl1" x1="0" y1="0" x2="0" y2="1"><stop offset="0" stop-color="#f0a030"/><stop offset="0.45" stop-color="#f0a030"/><stop offset="1" stop-color="#ffe6a0"/></linearGradient>
<circle cx="91" cy="45.8" r="5.6" fill="url(#tl1)" stroke="#8e5a18" stroke-width="0.9"/><ellipse cx="91" cy="43.2" rx="2.8" ry="1.5" fill="#fff" fill-opacity="0.6"/>
<linearGradient id="tl2" x1="0" y1="0" x2="0" y2="1"><stop offset="0" stop-color="#58c048"/><stop offset="0.45" stop-color="#58c048"/><stop offset="1" stop-color="#c8f0b0"/></linearGradient>
<circle cx="111" cy="45.8" r="5.6" fill="url(#tl2)" stroke="#2e6e26" stroke-width="0.9"/><ellipse cx="111" cy="43.2" rx="2.8" ry="1.5" fill="#fff" fill-opacity="0.6"/>
<g>
<rect x="66.2" y="64.2" width="81.5" height="109.2" rx="4" fill="#b3b3b3" />
<text x="70.6" y="86.7" font-size="15.5" fill="#e6e6e6" font-weight="bold" stroke="#e6e6e6" stroke-width="0.3" textLength="72.7" lengthAdjust="spacing" >PRESETS</text>
<circle cx="86" cy="100.8" r="9.05" fill="#e6e6e6"/>
<circle cx="106.9" cy="100.8" r="9.05" fill="#e6e6e6"/>
<circle cx="128" cy="100.8" r="9.05" fill="#e6e6e6"/>
<circle cx="86" cy="121.5" r="9.05" fill="#e6e6e6"/>
<circle cx="106.9" cy="121.5" r="9.05" fill="#e6e6e6"/>
<circle cx="128" cy="121.5" r="9.05" fill="#e6e6e6"/>
<circle cx="86" cy="142.7" r="9.05" fill="#e6e6e6"/>
<circle cx="106.9" cy="142.7" r="9.05" fill="#e6e6e6"/>
<circle cx="128" cy="142.7" r="9.05" fill="#e6e6e6"/>
<text x="79.5" y="163.4" font-size="9.8" fill="#e6e6e6" font-weight="bold" stroke="#e6e6e6" stroke-width="0.3" textLength="24" lengthAdjust="spacing" >Write</text>
<text x="112.7" y="163.4" font-size="9.8" fill="#e6e6e6" font-weight="bold" stroke="#e6e6e6" stroke-width="0.3" textLength="22.7" lengthAdjust="spacing" >Load</text>
<rect x="152.5" y="64.5" width="352.5" height="108.9" rx="4" fill="#b3b3b3" />
<text x="162.5" y="87.9" font-size="17" fill="#e6e6e6" font-weight="bold" stroke="#e6e6e6" stroke-width="0.3" textLength="115.8" lengthAdjust="spacing" >HENON MAPS</text>
<rect x="161.8" y="93" width="116.5" height="2" rx="0" fill="#f8f86c" />
<text x="161.4" y="110.9" font-size="16" fill="#e6e6e6" font-weight="bold" stroke="#e6e6e6" stroke-width="0.3" textLength="116.9" lengthAdjust="spacing" >COEFFICIENTS</text>
<rect x="157.2" y="120.8" width="127.6" height="48.2" rx="4" fill="#e6e6e6" />
<text x="166.5" y="138.6" font-size="11.8" fill="#a9a9a9" font-weight="bold" stroke="#a9a9a9" stroke-width="0.3" textLength="32" lengthAdjust="spacing" >MAPS</text>
<text x="225.9" y="138.6" font-size="11.8" fill="#a9a9a9" font-weight="bold" stroke="#a9a9a9" stroke-width="0.3" textLength="47.5" lengthAdjust="spacing" >Random</text>
<rect x="164.6" y="146.8" width="112.8" height="16.3" rx="0" fill="#a9a9a9" />
<text x="167.6" y="160" font-size="12" fill="#e6e6e6" font-weight="bold" stroke="#e6e6e6" stroke-width="0.3" >Map1</text>
<path d="M266 153.8H274L270 158.4Z" fill="#f8f86c"/>
<path d="M300.5 105.22A11.8 11.8 0 1 1 312.3 105.22" fill="none" stroke="#e6e6e6" stroke-width="2.2" stroke-linecap="butt"/>
<path d="M300.5 105.22A11.8 11.8 0 1 1 317.8 91.95" fill="none" stroke="#f8f86c" stroke-width="2.2" stroke-linecap="butt"/>
<path d="M306.4 95L317.8 91.95" stroke="#e6e6e6" stroke-width="2.2"/>
<text x="306.4" y="78.5" font-size="9" fill="#f8f86c" text-anchor="middle"><tspan font-weight="normal" font-size="10">×</tspan><tspan font-weight="bold" dx="1.5">1</tspan></text>
<text x="306.4" y="114.5" font-size="9.6" fill="#f8f86c" font-weight="bold" stroke="#f8f86c" stroke-width="0.3" text-anchor="middle" >1.00</text>
<path d="M335.6 105.22A11.8 11.8 0 1 1 347.4 105.22" fill="none" stroke="#e6e6e6" stroke-width="2.2" stroke-linecap="butt"/>
<path d="M335.6 105.22A11.8 11.8 0 0 1 341.5 83.2" fill="none" stroke="#f8f86c" stroke-width="2.2" stroke-linecap="butt"/>
<path d="M341.5 95L341.5 83.2" stroke="#e6e6e6" stroke-width="2.2"/>
<text x="341.5" y="78.5" font-size="9" fill="#f8f86c" text-anchor="middle"><tspan font-weight="normal" font-size="10">×</tspan><tspan font-weight="bold" dx="1.5">X</tspan></text>
<text x="341.5" y="114.5" font-size="9.6" fill="#f8f86c" font-weight="bold" stroke="#f8f86c" stroke-width="0.3" text-anchor="middle" >0.00</text>
<path d="M370.1 105.22A11.8 11.8 0 1 1 381.9 105.22" fill="none" stroke="#e6e6e6" stroke-width="2.2" stroke-linecap="butt"/>
<path d="M370.1 105.22A11.8 11.8 0 0 1 364.6 98.05" fill="none" stroke="#f8f86c" stroke-width="2.2" stroke-linecap="butt"/>
<path d="M376 95L364.6 98.05" stroke="#e6e6e6" stroke-width="2.2"/>
<text x="376" y="78.5" font-size="9" fill="#f8f86c" text-anchor="middle"><tspan font-weight="normal" font-size="10">×</tspan><tspan font-weight="bold" dx="1.5">X²</tspan></text>
<text x="376" y="114.5" font-size="9.6" fill="#f8f86c" font-weight="bold" stroke="#f8f86c" stroke-width="0.3" text-anchor="middle" >-1.40</text>
<path d="M405.6 105.22A11.8 11.8 0 1 1 417.4 105.22" fill="none" stroke="#e6e6e6" stroke-width="2.2" stroke-linecap="butt"/>
<path d="M405.6 105.22A11.8 11.8 0 0 1 411.5 83.2" fill="none" stroke="#f8f86c" stroke-width="2.2" stroke-linecap="butt"/>
<path d="M411.5 95L411.5 83.2" stroke="#e6e6e6" stroke-width="2.2"/>
<text x="411.5" y="78.5" font-size="9" fill="#f8f86c" text-anchor="middle"><tspan font-weight="normal" font-size="10">×</tspan><tspan font-weight="bold" dx="1.5">XY</tspan></text>
<text x="411.5" y="114.5" font-size="9.6" fill="#f8f86c" font-weight="bold" stroke="#f8f86c" stroke-width="0.3" text-anchor="middle" >0.00</text>
<path d="M441.5 105.22A11.8 11.8 0 1 1 453.3 105.22" fill="none" stroke="#e6e6e6" stroke-width="2.2" stroke-linecap="butt"/>
<path d="M441.5 105.22A11.8 11.8 0 1 1 458.8 91.95" fill="none" stroke="#f8f86c" stroke-width="2.2" stroke-linecap="butt"/>
<path d="M447.4 95L458.8 91.95" stroke="#e6e6e6" stroke-width="2.2"/>
<text x="447.4" y="78.5" font-size="9" fill="#f8f86c" text-anchor="middle"><tspan font-weight="normal" font-size="10">×</tspan><tspan font-weight="bold" dx="1.5">Y</tspan></text>
<text x="447.4" y="114.5" font-size="9.6" fill="#f8f86c" font-weight="bold" stroke="#f8f86c" stroke-width="0.3" text-anchor="middle" >1.00</text>
<path d="M477.6 105.22A11.8 11.8 0 1 1 489.4 105.22" fill="none" stroke="#e6e6e6" stroke-width="2.2" stroke-linecap="butt"/>
<path d="M477.6 105.22A11.8 11.8 0 0 1 483.5 83.2" fill="none" stroke="#f8f86c" stroke-width="2.2" stroke-linecap="butt"/>
<path d="M483.5 95L483.5 83.2" stroke="#e6e6e6" stroke-width="2.2"/>
<text x="483.5" y="78.5" font-size="9" fill="#f8f86c" text-anchor="middle"><tspan font-weight="normal" font-size="10">×</tspan><tspan font-weight="bold" dx="1.5">Y²</tspan></text>
<text x="483.5" y="114.5" font-size="9.6" fill="#f8f86c" font-weight="bold" stroke="#f8f86c" stroke-width="0.3" text-anchor="middle" >0.00</text>
<path d="M300.5 156.72A11.8 11.8 0 1 1 312.3 156.72" fill="none" stroke="#e6e6e6" stroke-width="2.2" stroke-linecap="butt"/>
<path d="M300.5 156.72A11.8 11.8 0 0 1 306.4 134.7" fill="none" stroke="#f8f86c" stroke-width="2.2" stroke-linecap="butt"/>
<path d="M306.4 146.5L306.4 134.7" stroke="#e6e6e6" stroke-width="2.2"/>
<text x="306.4" y="130.3" font-size="9" fill="#f8f86c" text-anchor="middle"><tspan font-weight="normal" font-size="10">×</tspan><tspan font-weight="bold" dx="1.5">1</tspan></text>
<text x="306.4" y="166.2" font-size="9.6" fill="#f8f86c" font-weight="bold" stroke="#f8f86c" stroke-width="0.3" text-anchor="middle" >0.00</text>
<path d="M335.6 156.72A11.8 11.8 0 1 1 347.4 156.72" fill="none" stroke="#e6e6e6" stroke-width="2.2" stroke-linecap="butt"/>
<path d="M335.6 156.72A11.8 11.8 0 0 1 346.02 135.6" fill="none" stroke="#f8f86c" stroke-width="2.2" stroke-linecap="butt"/>
<path d="M341.5 146.5L346.02 135.6" stroke="#e6e6e6" stroke-width="2.2"/>
<text x="341.5" y="130.3" font-size="9" fill="#f8f86c" text-anchor="middle"><tspan font-weight="normal" font-size="10">×</tspan><tspan font-weight="bold" dx="1.5">X</tspan></text>
<text x="341.5" y="166.2" font-size="9.6" fill="#f8f86c" font-weight="bold" stroke="#f8f86c" stroke-width="0.3" text-anchor="middle" >0.30</text>
<path d="M370.1 156.72A11.8 11.8 0 1 1 381.9 156.72" fill="none" stroke="#e6e6e6" stroke-width="2.2" stroke-linecap="butt"/>
<path d="M370.1 156.72A11.8 11.8 0 0 1 376 134.7" fill="none" stroke="#f8f86c" stroke-width="2.2" stroke-linecap="butt"/>
<path d="M376 146.5L376 134.7" stroke="#e6e6e6" stroke-width="2.2"/>
<text x="376" y="130.3" font-size="9" fill="#f8f86c" text-anchor="middle"><tspan font-weight="normal" font-size="10">×</tspan><tspan font-weight="bold" dx="1.5">X²</tspan></text>
<text x="376" y="166.2" font-size="9.6" fill="#f8f86c" font-weight="bold" stroke="#f8f86c" stroke-width="0.3" text-anchor="middle" >0.00</text>
<path d="M405.6 156.72A11.8 11.8 0 1 1 417.4 156.72" fill="none" stroke="#e6e6e6" stroke-width="2.2" stroke-linecap="butt"/>
<path d="M405.6 156.72A11.8 11.8 0 0 1 411.5 134.7" fill="none" stroke="#f8f86c" stroke-width="2.2" stroke-linecap="butt"/>
<path d="M411.5 146.5L411.5 134.7" stroke="#e6e6e6" stroke-width="2.2"/>
<text x="411.5" y="130.3" font-size="9" fill="#f8f86c" text-anchor="middle"><tspan font-weight="normal" font-size="10">×</tspan><tspan font-weight="bold" dx="1.5">XY</tspan></text>
<text x="411.5" y="166.2" font-size="9.6" fill="#f8f86c" font-weight="bold" stroke="#f8f86c" stroke-width="0.3" text-anchor="middle" >0.00</text>
<path d="M441.5 156.72A11.8 11.8 0 1 1 453.3 156.72" fill="none" stroke="#e6e6e6" stroke-width="2.2" stroke-linecap="butt"/>
<path d="M441.5 156.72A11.8 11.8 0 0 1 447.4 134.7" fill="none" stroke="#f8f86c" stroke-width="2.2" stroke-linecap="butt"/>
<path d="M447.4 146.5L447.4 134.7" stroke="#e6e6e6" stroke-width="2.2"/>
<text x="447.4" y="130.3" font-size="9" fill="#f8f86c" text-anchor="middle"><tspan font-weight="normal" font-size="10">×</tspan><tspan font-weight="bold" dx="1.5">Y</tspan></text>
<text x="447.4" y="166.2" font-size="9.6" fill="#f8f86c" font-weight="bold" stroke="#f8f86c" stroke-width="0.3" text-anchor="middle" >0.00</text>
<path d="M477.6 156.72A11.8 11.8 0 1 1 489.4 156.72" fill="none" stroke="#e6e6e6" stroke-width="2.2" stroke-linecap="butt"/>
<path d="M477.6 156.72A11.8 11.8 0 0 1 483.5 134.7" fill="none" stroke="#f8f86c" stroke-width="2.2" stroke-linecap="butt"/>
<path d="M483.5 146.5L483.5 134.7" stroke="#e6e6e6" stroke-width="2.2"/>
<text x="483.5" y="130.3" font-size="9" fill="#f8f86c" text-anchor="middle"><tspan font-weight="normal" font-size="10">×</tspan><tspan font-weight="bold" dx="1.5">Y²</tspan></text>
<text x="483.5" y="166.2" font-size="9.6" fill="#f8f86c" font-weight="bold" stroke="#f8f86c" stroke-width="0.3" text-anchor="middle" >0.00</text>
<rect x="509.3" y="64.3" width="193.2" height="50.4" rx="4" fill="#b3b3b3" />
<text x="516" y="83.7" font-size="15.6" fill="#e6e6e6" font-weight="bold" stroke="#e6e6e6" stroke-width="0.3" textLength="51" lengthAdjust="spacing" >STEPS</text>
<rect x="514.7" y="89.5" width="56.7" height="16.9" rx="0" fill="#e6e6e6" />
<text x="517.5" y="102.7" font-size="12" fill="#a9a9a9" font-weight="bold" stroke="#a9a9a9" stroke-width="0.3" >Free</text>
<path d="M560 97H568L564 102Z" fill="#f8f86c"/>
<circle cx="586" cy="79.2" r="4.9" fill="none" stroke="#e6e6e6" stroke-width="1.6"/><circle cx="586" cy="79.2" r="1.5" fill="#e6e6e6"/>
<text x="594.2" y="82.7" font-size="12" fill="#e6e6e6" font-weight="bold" stroke="#e6e6e6" stroke-width="0.3" textLength="42" lengthAdjust="spacing" >Interval</text>
<path d="M582.1 102.6V92.8H591.5L586.3 97.4L590.5 101.5" fill="none" stroke="#e6e6e6" stroke-width="1.5"/>
<rect x="589.3" y="100.3" width="2.4" height="2.4" rx="0" fill="#e6e6e6" />
<text x="602.4" y="102.2" font-size="12" fill="#e6e6e6" font-weight="bold" stroke="#e6e6e6" stroke-width="0.3" textLength="30.8" lengthAdjust="spacing" >Delay</text>
<rect x="641.2" y="69.3" width="57" height="17.3" rx="0" fill="#e6e6e6" />
<rect x="641.2" y="69.3" width="2.8" height="17.3" rx="0" fill="#f8f86c" />
<text x="650" y="82.1" font-size="12" fill="#a9a9a9" font-weight="bold" stroke="#a9a9a9" stroke-width="0.3" textLength="41" lengthAdjust="spacing" >500 ms</text>
<rect x="641.4" y="89.7" width="56.8" height="16.7" rx="0" fill="#e6e6e6" />
<text x="647.8" y="101.9" font-size="12" fill="#a9a9a9" font-weight="bold" stroke="#a9a9a9" stroke-width="0.3" textLength="44.2" lengthAdjust="spacing" >0.00 ms</text>
<circle cx="536.9" cy="145.8" r="24.5" fill="#e6e6e6" stroke="#8a8a8a" stroke-width="1"/>
<path d="M529 132.8L551.6 145.8L529 158.6Z" fill="#aab0bc"/>
<rect x="568" y="118" width="134.5" height="55.3" rx="4" fill="#b3b3b3" />
<circle cx="584.3" cy="125.1" r="1.3" fill="#e6e6e6"/>
<circle cx="592.4" cy="125.1" r="1.3" fill="#e6e6e6"/>
<circle cx="580.2" cy="128.8" r="1.3" fill="#e6e6e6"/>
<circle cx="584.3" cy="128.8" r="1.3" fill="#e6e6e6"/>
<circle cx="588.3" cy="128.8" r="1.3" fill="#e6e6e6"/>
<circle cx="580.2" cy="132.8" r="1.3" fill="#e6e6e6"/>
<circle cx="584.3" cy="132.8" r="1.3" fill="#e6e6e6"/>
<circle cx="588.3" cy="132.8" r="1.3" fill="#e6e6e6"/>
<circle cx="592.4" cy="132.8" r="1.3" fill="#e6e6e6"/>
<circle cx="584.3" cy="136.5" r="1.3" fill="#e6e6e6"/>
<circle cx="588.3" cy="136.5" r="1.3" fill="#e6e6e6"/>
<circle cx="592.4" cy="136.5" r="1.3" fill="#e6e6e6"/>
<text x="603.3" y="136.9" font-size="12" fill="#e6e6e6" font-weight="bold" stroke="#e6e6e6" stroke-width="0.3" textLength="30.4" lengthAdjust="spacing" >Color</text>
<rect x="641.7" y="124.8" width="56.2" height="16.4" rx="0" fill="#e6e6e6" />
<text x="644.1" y="137.1" font-size="12" fill="#a9a9a9" font-weight="bold" stroke="#a9a9a9" stroke-width="0.3" >Gray</text>
<path d="M686.8 131.9H694.4L690.6 136.9Z" fill="#f8f86c"/>
<circle cx="587" cy="150" r="8.5" fill="#e6e6e6" stroke="#7a7a7a" stroke-width="0.8"/>
<text x="601.9" y="153" font-size="9.7" fill="#e6e6e6" font-weight="bold" stroke="#e6e6e6" stroke-width="0.3" textLength="34" lengthAdjust="spacing" >Resync</text>
<rect x="580.2" y="160.3" width="53.6" height="10.6" rx="1" fill="#e6e6e6" />
<text x="607" y="168.8" font-size="8.5" fill="#a9a9a9" font-weight="bold" stroke="#a9a9a9" stroke-width="0.3" text-anchor="middle" >Hide</text>
<rect x="641.7" y="146.6" width="56.3" height="22.4" rx="2" fill="#b0b0b0" />
<text x="649.8" y="162.8" font-size="12" fill="#f8f86c" font-weight="bold" stroke="#f8f86c" stroke-width="0.3" textLength="40" lengthAdjust="spacing" >CLEAR</text>
<rect x="66.2" y="178.7" width="81.6" height="181.6" rx="4" fill="#999999" />
<text x="82.4" y="195.6" font-size="15.5" fill="#e6e6e6" font-weight="bold" stroke="#e6e6e6" stroke-width="0.3" textLength="48.9" lengthAdjust="spacing" >GRIPS</text>
<rect x="69.2" y="201.3" width="74.8" height="14.4" rx="2" fill="#e6e6e6" />
<text x="106.6" y="211.7" font-size="9.5" fill="#111" font-weight="bold" stroke="#111" stroke-width="0.3" text-anchor="middle" textLength="21.4" lengthAdjust="spacing" >GRIP</text>
<rect x="69.2" y="220.3" width="35.7" height="17.5" rx="2.5" fill="#e6e6e6" />
<rect x="108.3" y="220.3" width="35.7" height="17.5" rx="2.5" fill="#e6e6e6" />
<path d="M85 259.9A8.9 8.9 0 1 1 93.9 251" fill="none" stroke="#e6e6e6" stroke-width="2" stroke-linecap="butt"/>
<path d="M85 251L85 260.8" stroke="#e6e6e6" stroke-width="2"/>
<path d="M125 259.9A8.9 8.9 0 1 1 133.9 251" fill="none" stroke="#e6e6e6" stroke-width="2" stroke-linecap="butt"/>
<path d="M125 251L125 260.8" stroke="#e6e6e6" stroke-width="2"/>
<rect x="69.2" y="264.2" width="35.7" height="17.5" rx="2.5" fill="#e6e6e6" />
<rect x="108.3" y="264.2" width="35.7" height="17.5" rx="2.5" fill="#e6e6e6" />
<path d="M85 304.9A8.9 8.9 0 1 1 93.9 296" fill="none" stroke="#e6e6e6" stroke-width="2" stroke-linecap="butt"/>
<path d="M85 296L85 305.8" stroke="#e6e6e6" stroke-width="2"/>
<path d="M125 304.9A8.9 8.9 0 1 1 133.9 296" fill="none" stroke="#e6e6e6" stroke-width="2" stroke-linecap="butt"/>
<path d="M125 296L125 305.8" stroke="#e6e6e6" stroke-width="2"/>
<rect x="69.2" y="310" width="35.7" height="17.5" rx="2.5" fill="#e6e6e6" />
<rect x="108.3" y="310" width="35.7" height="17.5" rx="2.5" fill="#e6e6e6" />
<path d="M85 349.9A8.9 8.9 0 1 1 93.9 341" fill="none" stroke="#e6e6e6" stroke-width="2" stroke-linecap="butt"/>
<path d="M85 341L85 350.8" stroke="#e6e6e6" stroke-width="2"/>
<path d="M125 349.9A8.9 8.9 0 1 1 133.9 341" fill="none" stroke="#e6e6e6" stroke-width="2" stroke-linecap="butt"/>
<path d="M125 341L125 350.8" stroke="#e6e6e6" stroke-width="2"/>
<text x="85.5" y="407.5" font-size="39.5" fill="#e4e4e4" font-weight="bold" stroke="#e4e4e4" stroke-width="0.9" text-anchor="middle" >H</text>
<text x="130.5" y="407.5" font-size="39.5" fill="#e4e4e4" font-weight="bold" stroke="#e4e4e4" stroke-width="0.9" text-anchor="middle" >S</text>
<text x="85.5" y="455" font-size="39.5" fill="#e4e4e4" font-weight="bold" stroke="#e4e4e4" stroke-width="0.9" text-anchor="middle" >E</text>
<text x="130.5" y="455" font-size="39.5" fill="#e4e4e4" font-weight="bold" stroke="#e4e4e4" stroke-width="0.9" text-anchor="middle" >Y</text>
<text x="85.5" y="502.5" font-size="39.5" fill="#e4e4e4" font-weight="bold" stroke="#e4e4e4" stroke-width="0.9" text-anchor="middle" >N</text>
<text x="130.5" y="502.5" font-size="39.5" fill="#e4e4e4" font-weight="bold" stroke="#e4e4e4" stroke-width="0.9" text-anchor="middle" >N</text>
<text x="85.5" y="550" font-size="39.5" fill="#e4e4e4" font-weight="bold" stroke="#e4e4e4" stroke-width="0.9" text-anchor="middle" >O</text>
<text x="130.5" y="550" font-size="39.5" fill="#e4e4e4" font-weight="bold" stroke="#e4e4e4" stroke-width="0.9" text-anchor="middle" >T</text>
<text x="85.5" y="597.5" font-size="39.5" fill="#e4e4e4" font-weight="bold" stroke="#e4e4e4" stroke-width="0.9" text-anchor="middle" >N</text>
<text x="130.5" y="597.5" font-size="39.5" fill="#e4e4e4" font-weight="bold" stroke="#e4e4e4" stroke-width="0.9" text-anchor="middle" >H</text>
<rect x="66.2" y="614.2" width="81.7" height="107.3" rx="4" fill="#999999" />
<text x="74.1" y="631.7" font-size="15.5" fill="#e6e6e6" font-weight="bold" stroke="#e6e6e6" stroke-width="0.3" textLength="62.3" lengthAdjust="spacing" >VALUES</text>
<text x="106" y="642.9" font-size="10.8" fill="#e6e6e6" font-weight="bold" stroke="#e6e6e6" stroke-width="0.3" text-anchor="middle" textLength="49.5" lengthAdjust="spacing" >[ 0 – 127 ]</text>
<rect x="69.6" y="651.2" width="1" height="9" rx="0" fill="#c8c8c8" />
<text x="73.1" y="658.7" font-size="8.4" fill="#e6e6e6" stroke="#e6e6e6" stroke-width="0.38" textLength="38.6" lengthAdjust="spacing" >X : coord x</text>
<rect x="69.6" y="660.55" width="1" height="9" rx="0" fill="#c8c8c8" />
<text x="73.1" y="668.05" font-size="8.4" fill="#e6e6e6" stroke="#e6e6e6" stroke-width="0.38" textLength="38.9" lengthAdjust="spacing" >Y : coord y</text>
<rect x="69.6" y="669.9" width="1" height="9" rx="0" fill="#c8c8c8" />
<text x="73.1" y="677.4" font-size="8.4" fill="#e6e6e6" stroke="#e6e6e6" stroke-width="0.38" textLength="55.9" lengthAdjust="spacing" >XY : mean of xy</text>
<rect x="69.6" y="679.25" width="1" height="9" rx="0" fill="#c8c8c8" />
<text x="73.1" y="686.75" font-size="8.4" fill="#e6e6e6" stroke="#e6e6e6" stroke-width="0.38" textLength="69.3" lengthAdjust="spacing" >RXY : radius R–XY</text>
<rect x="69.6" y="688.6" width="1" height="9" rx="0" fill="#c8c8c8" />
<text x="73.1" y="696.1" font-size="8.4" fill="#e6e6e6" stroke="#e6e6e6" stroke-width="0.38" textLength="42.6" lengthAdjust="spacing" >K : key note</text>
<rect x="69.6" y="697.95" width="1" height="9" rx="0" fill="#c8c8c8" />
<text x="73.1" y="705.45" font-size="8.4" fill="#e6e6e6" stroke="#e6e6e6" stroke-width="0.38" textLength="69.3" lengthAdjust="spacing" >KXY : radius K–XY</text>
<rect x="69.6" y="707.3" width="1" height="9" rx="0" fill="#c8c8c8" />
<text x="73.1" y="714.8" font-size="8.4" fill="#e6e6e6" stroke="#e6e6e6" stroke-width="0.38" textLength="59.9" lengthAdjust="spacing" >KR : radius K–R</text>
<rect x="153" y="177.8" width="504" height="502.2" rx="5" fill="#e6e6e6" />
<path d="M291.6 574.4h0M461.6 351.8h0M490.5 488.9h0M504.0 512.3h0M489.6 523.1h0M518.1 511.5h0M461.2 534.5h0M559.0 488.6h0M349.3 567.4h0M560.8 398.4h0M310.5 568.9h0M500.1 367.0h0M442.6 519.9h0M568.8 473.6h0M313.9 575.4h0M509.1 369.8h0M426.9 527.2h0M579.2 460.9h0M275.6 583.8h0M425.4 338.9h0M509.7 459.7h0M459.2 527.7h0M558.4 487.0h0M350.5 566.9h0M562.0 399.3h0M307.3 569.8h0M494.0 364.4h0M452.0 515.1h0M560.1 481.2h0M343.1 568.4h0M553.3 393.4h0M330.1 562.9h0M532.5 382.9h0M380.6 546.1h0M580.6 423.6h0M257.3 584.8h0M373.9 324.1h0M493.7 418.2h0M472.6 514.8h0M538.9 497.8h0M407.7 551.2h0M590.9 445.4h0M229.6 593.2h0M286.4 301.8h0M348.0 347.7h0M477.4 397.3h0M489.0 501.6h0M511.1 511.0h0M475.5 528.8h0M540.4 500.1h0M404.7 552.4h0M591.1 443.0h0M227.9 593.4h0M280.4 300.5h0M332.4 342.8h0M454.2 384.7h0M509.8 483.0h0M467.6 527.8h0M549.6 493.7h0M377.9 559.9h0M584.0 421.4h0M244.7 587.6h0M335.8 314.0h0M448.5 387.4h0M515.5 478.3h0M454.4 532.3h0M564.5 483.1h0M330.8 571.9h0M536.9 383.4h0M370.1 549.6h0M574.7 415.1h0M273.5 580.1h0M418.3 337.2h0M510.7 454.0h0M455.1 528.5h0M562.5 483.7h0M337.0 570.3h0M545.7 388.5h0M349.3 556.7h0M556.8 398.4h0M322.1 565.7h0M520.4 376.5h0M406.0 536.3h0M585.3 444.1h0M248.9 588.6h0M349.6 317.4h0M468.0 398.6h0M501.0 494.1h0M488.2 520.7h0M519.5 510.3h0M457.8 535.6h0M562.7 485.8h0M337.3 570.4h0M348.3 557.0h0M555.7 397.5h0M325.1 564.8h0M525.0 378.8h0M396.6 540.1h0M585.1 436.5h0M246.8 588.5h0M342.8 315.7h0M458.9 393.1h0M508.6 486.8h0M471.3 526.8h0M544.9 496.8h0M391.8 556.0h0M589.5 432.6h0M229.9 592.0h0M349.3 348.1h0M479.1 398.3h0M487.1 503.0h0M514.5 509.5h0M467.9 531.6h0M550.7 494.0h0M375.0 560.7h0M582.5 419.1h0M249.2 586.4h0M501.0 494.1h0M519.3 510.5h0M458.4 535.4h0M562.1 486.3h0M339.3 569.9h0M548.8 390.3h0M341.6 559.2h0M547.9 392.2h0M344.6 558.5h0M551.6 394.6h0M335.3 561.5h0M539.9 387.1h0M363.9 552.0h0M570.4 410.1h0M285.5 576.6h0M447.9 346.9h0M500.8 477.8h0M482.5 520.5h0M527.8 505.8h0M437.4 542.3h0M580.2 469.4h0M275.4 584.6h0M509.7 459.5h0M459.1 527.7h0M350.1 567.1h0M561.5 399.0h0M308.5 569.5h0M496.4 365.4h0M448.5 516.9h0M563.7 478.3h0M331.5 571.2h0M537.8 384.0h0M368.0 550.4h0M573.3 413.4h0M277.4 579.0h0M428.3 340.4h0M509.2 462.1h0M461.0 527.3h0M556.5 488.4h0M356.4 565.4h0M568.0 404.1h0M290.7 574.7h0M459.6 351.1h0M492.3 487.3h0M500.6 513.7h0M496.3 520.3h0M506.2 516.9h0M487.1 524.9h0M522.6 509.5h0M450.6 538.1h0M569.9 480.0h0M313.0 576.2h0M507.7 369.1h0M429.3 526.1h0M578.0 462.8h0M280.5 582.7h0M437.7 342.9h0M505.9 469.6h0M470.1 524.6h0M545.5 495.8h0M389.7 556.6h0M588.9 430.9h0M231.3 591.6h0M292.0 303.2h0M361.6 352.1h0M493.9 408.3h0M468.6 514.9h0M543.7 494.5h0M394.1 555.1h0M589.9 434.4h0M229.1 592.4h0M284.3 301.4h0M342.6 345.9h0M469.9 392.9h0M496.8 495.6h0M496.1 517.3h0M505.4 516.7h0M488.6 524.2h0M520.1 510.7h0M456.6 536.1h0M564.0 484.8h0M332.9 571.5h0M540.0 385.1h0M362.9 552.1h0M569.5 409.3h0M288.0 575.9h0M453.7 348.9h0M496.9 482.5h0M491.1 517.4h0M513.7 512.7h0M470.9 530.9h0M546.9 496.4h0M386.0 557.7h0M587.7 428.0h0M234.3 590.6h0M301.9 305.6h0M384.7 360.2h0M513.6 426.9h0M439.1 530.8h0M575.0 470.8h0M293.1 580.4h0M467.4 353.0h0M484.8 493.6h0M514.5 507.6h0M467.4 531.5h0M551.2 493.6h0M373.3 561.2h0M581.4 417.7h0M252.2 585.5h0M358.9 320.1h0M479.3 406.1h0M489.8 503.1h0M510.5 511.6h0M476.9 528.3h0M538.3 501.3h0M410.3 550.8h0M590.8 447.6h0M230.8 593.1h0M290.6 302.8h0M358.2 351.0h0M490.1 405.5h0M473.7 511.9h0M536.4 498.6h0M414.1 549.3h0M590.1 450.6h0M234.5 592.5h0M303.4 305.8h0M387.8 361.3h0M515.5 429.4h0M436.2 532.3h0M577.2 468.4h0M285.2 582.1h0M449.2 346.6h0M499.8 478.9h0M484.8 519.7h0M524.2 507.6h0M446.5 539.4h0M573.5 476.7h0M300.3 579.1h0M483.0 358.9h0M467.0 506.1h0M542.2 493.3h0M397.4 553.9h0M590.4 437.1h0M228.3 592.8h0M281.7 300.8h0M335.9 343.8h0M459.7 387.5h0M505.7 487.4h0M477.1 524.5h0M536.7 501.4h0M414.4 549.5h0M387.1 361.1h0M515.1 428.9h0M436.8 532.0h0M576.7 468.9h0M286.8 581.8h0M453.0 348.0h0M497.1 482.0h0M490.5 517.6h0M514.6 512.2h0M468.7 531.7h0M549.8 494.7h0M449.0 387.7h0M455.2 532.1h0M563.8 483.7h0M333.2 571.3h0M540.4 385.4h0M362.0 552.4h0M568.8 408.6h0M289.9 575.3h0M458.1 350.5h0M493.5 486.1h0M498.1 514.7h0M501.0 518.3h0M497.2 520.7h0M504.8 517.6h0M490.0 523.8h0M517.8 511.8h0M461.9 534.3h0M558.2 489.1h0M351.9 566.8h0M563.5 400.4h0M303.0 571.1h0M485.7 361.0h0M463.8 508.3h0M546.5 490.7h0M385.1 557.4h0M587.2 427.2h0M236.1 590.2h0M307.8 307.0h0M397.3 364.9h0M520.1 437.1h0M429.3 536.1h0M581.6 462.9h0M268.2 585.7h0M406.1 333.0h0M509.6 444.1h0M453.5 527.6h0M563.6 482.4h0M290.4 575.2h0M459.2 350.9h0M492.6 486.9h0M499.9 513.9h0M497.7 519.8h0M503.7 518.0h0M492.3 522.8h0M513.8 513.6h0M471.0 531.0h0M301.2 305.5h0M383.1 359.6h0M512.6 425.6h0M440.8 530.0h0M573.8 472.1h0M297.7 579.4h0M477.3 356.7h0M474.0 501.6h0M532.2 498.9h0M424.6 545.8h0M586.9 459.1h0M248.9 589.9h0M350.0 317.4h0M468.6 398.9h0M500.5 494.5h0M489.2 520.3h0M563.9 400.7h0M301.9 571.4h0M483.5 360.1h0M466.7 506.6h0M542.7 493.0h0M396.1 554.3h0M590.2 436.1h0M228.6 592.6h0M282.7 301.0h0M338.5 344.7h0M463.9 389.7h0M502.3 490.7h0M484.6 521.7h0M525.2 507.5h0M444.1 540.2h0M575.4 474.8h0M467.9 353.2h0M484.3 494.0h0M515.4 507.2h0M465.2 532.3h0M553.9 491.8h0M365.1 563.4h0M575.6 411.1h0M269.0 580.8h0M406.3 333.6h0M509.9 444.3h0M453.1 527.8h0M564.0 482.0h0M331.9 571.5h0M538.5 384.3h0M366.4 550.9h0M572.1 412.1h0M280.6 578.0h0M436.2 342.9h0M506.7 468.4h0M468.1 525.3h0M548.1 494.1h0M382.0 558.7h0M586.0 424.7h0M239.1 589.2h0M317.6 309.5h0M417.1 372.8h0M524.1 453.0h0M426.3 539.3h0M583.9 460.5h0M259.7 587.5h0M382.1 326.1h0M499.6 424.8h0M465.0 519.5h0M549.4 491.7h0M377.6 559.7h0M245.4 587.5h0M337.8 314.5h0M451.6 389.1h0M513.6 480.9h0M459.2 530.8h0M559.6 487.0h0M347.0 567.9h0M558.1 396.5h0M317.6 566.7h0M512.7 372.8h0M420.8 530.1h0M582.0 456.0h0M264.6 586.0h0M395.9 330.1h0M506.7 435.9h0M456.0 525.3h0M560.5 484.4h0M553.7 393.5h0M329.1 563.2h0M531.0 382.1h0M383.9 544.9h0M581.9 426.3h0M253.7 585.9h0M363.5 321.3h0M484.1 409.8h0M484.3 507.1h0M520.3 507.2h0M455.0 536.2h0M565.5 483.6h0M328.0 572.7h0M532.7 381.2h0M379.5 546.3h0M580.0 422.7h0M259.0 584.4h0M378.9 325.5h0M497.5 422.2h0M467.7 517.8h0M545.8 493.8h0M388.3 556.8h0M588.4 429.8h0M232.7 591.2h0M296.6 304.3h0M372.5 355.8h0M504.4 417.1h0M453.3 523.5h0M562.2 482.2h0M325.8 564.5h0M526.1 379.4h0M394.4 540.9h0M584.7 434.7h0M247.2 588.2h0M344.0 316.0h0M460.6 394.1h0M507.3 488.1h0M474.4 525.7h0M540.7 499.2h0M403.6 552.7h0M591.1 442.1h0M279.6 300.3h0M330.4 342.2h0M450.9 383.1h0M512.0 480.3h0M462.3 529.5h0M556.0 489.5h0M358.3 565.0h0M569.8 405.6h0M285.6 576.2h0M437.8 542.2h0M580.0 469.7h0M276.2 584.4h0M427.2 339.4h0M509.2 461.2h0M556.9 488.1h0M355.1 565.8h0M566.7 403.0h0M294.2 573.7h0M467.4 353.9h0M485.2 493.6h0M513.9 507.9h0M468.6 531.1h0M335.4 313.9h0M448.0 387.2h0M515.7 477.9h0M453.7 532.6h0M565.2 482.6h0M328.4 572.5h0M533.3 381.5h0M378.1 546.8h0M579.3 421.6h0M260.7 583.8h0M383.7 326.9h0M500.7 426.1h0M463.4 520.5h0M551.4 490.4h0M371.6 561.3h0M580.2 416.3h0M255.7 584.6h0M369.2 322.9h0M489.7 414.4h0M477.6 511.5h0M531.2 501.8h0M428.1 545.0h0M585.4 461.9h0M254.9 588.8h0M368.3 322.2h0M488.7 413.7h0M478.9 510.7h0M529.2 502.9h0M433.2 543.4h0M582.8 466.0h0M265.6 586.6h0M399.0 330.9h0M507.8 438.5h0M454.9 526.2h0M561.8 483.5h0M548.3 390.1h0M342.8 558.8h0M549.3 393.1h0M547.5 391.8h0M345.7 558.2h0M552.8 395.4h0M332.3 562.5h0M535.7 384.6h0M373.5 548.7h0M576.9 417.9h0M267.3 581.9h0M402.0 332.2h0M508.8 440.8h0M453.8 527.0h0M334.8 570.8h0M542.6 386.6h0M356.8 554.2h0M564.3 404.4h0M302.2 571.7h0M484.2 360.4h0M465.7 507.2h0M544.0 492.2h0M392.3 555.4h0M589.4 433.0h0M288.3 302.4h0M352.5 349.1h0M483.3 401.0h0M482.2 506.4h0M523.0 505.5h0M448.4 538.4h0M571.7 478.2h0M306.5 577.7h0M495.4 363.8h0M449.5 516.2h0M562.6 479.1h0M335.1 570.3h0M356.2 554.4h0M563.7 403.9h0M303.9 571.2h0M487.6 361.7h0M461.2 509.9h0M549.8 488.6h0M375.4 560.0h0M349.8 317.7h0M489.0 520.4h0M518.1 511.0h0M461.0 534.5h0M559.2 488.4h0M348.6 567.6h0M560.0 397.8h0M312.5 568.3h0M503.9 368.7h0M436.4 523.0h0M573.6 468.6h0M296.9 579.2h0M475.5 356.1h0M476.2 500.1h0M528.9 500.7h0M265.8 586.6h0M399.6 331.0h0M338.4 569.9h0M547.5 389.6h0M344.9 558.1h0M551.9 394.8h0M334.7 561.7h0M539.1 386.6h0M365.7 551.4h0M571.7 411.6h0M281.7 577.7h0M438.9 343.8h0M505.6 470.6h0M471.0 524.4h0M393.0 555.6h0M589.8 433.6h0M229.3 592.3h0M284.9 301.6h0M344.1 346.4h0M472.0 394.1h0M494.7 497.3h0M500.3 515.6h0M491.4 523.2h0M515.3 512.9h0M467.5 532.3h0M551.3 493.7h0M581.2 417.5h0M252.7 585.4h0M360.2 320.4h0M480.7 407.1h0M488.2 504.3h0M513.4 510.3h0M547.2 496.1h0M385.2 558.0h0M235.2 590.4h0M305.0 306.4h0M391.3 362.6h0M517.4 432.2h0M433.3 533.9h0M579.2 466.1h0M277.8 583.7h0M431.0 340.7h0M508.3 464.2h0M463.5 526.6h0M553.6 490.5h0M575.9 411.4h0M268.1 581.1h0M404.0 332.9h0M509.4 442.4h0M563.6 482.3h0M569.1 408.9h0M289.0 575.6h0M455.9 349.7h0M495.2 484.4h0M494.6 516.0h0M507.4 515.5h0M484.3 525.9h0M527.2 507.2h0M439.5 541.8h0M578.9 471.1h0M280.6 583.5h0M505.6 470.0h0M470.8 524.4h0M544.7 496.3h0M348.4 347.8h0M478.0 397.7h0M488.3 502.1h0M512.3 510.5h0M472.8 529.8h0M544.2 497.9h0M338.2 344.6h0M463.3 389.4h0M502.8 490.3h0M483.6 522.1h0M526.8 506.7h0M440.1 541.5h0M282.2 583.1h0M442.0 344.2h0M503.8 473.1h0M475.3 523.0h0M538.5 499.9h0M409.3 551.0h0M590.9 446.8h0M230.3 593.1h0M288.8 302.4h0M354.0 349.6h0M485.1 402.1h0M480.0 507.8h0M526.6 503.8h0M439.6 541.3h0M281.5 583.3h0M440.3 343.6h0M504.7 471.8h0M473.2 523.7h0M541.4 498.3h0M401.4 553.3h0M591.0 440.3h0M227.4 593.2h0M278.7 300.1h0M327.8 341.4h0M446.5 381.1h0M514.5 476.7h0M455.7 531.6h0M563.1 484.2h0M543.5 387.1h0M354.6 554.9h0M562.2 402.7h0M307.8 570.0h0M495.3 364.9h0M450.1 516.0h0M562.0 479.7h0M337.0 569.9h0M545.4 388.4h0M349.9 556.5h0M557.4 398.8h0M320.5 566.2h0M517.8 375.1h0M411.2 534.2h0M584.6 448.3h0M252.7 588.1h0M361.3 320.5h0M481.8 408.0h0M487.0 505.2h0M515.5 509.4h0M466.0 532.3h0M553.1 492.5h0M367.7 562.7h0M577.6 413.2h0M263.2 582.5h0M390.6 328.9h0M504.6 431.7h0M458.5 523.6h0M557.6 486.4h0M352.7 566.3h0M564.2 401.1h0M301.1 571.7h0M482.0 359.5h0M468.7 505.3h0M540.0 494.6h0M403.6 552.1h0M590.9 442.2h0M228.4 593.2h0M337.1 344.2h0M461.7 388.6h0M504.1 489.0h0M480.7 523.2h0M531.4 504.3h0M428.6 545.2h0M255.5 588.7h0M370.2 322.7h0M490.4 415.2h0M476.8 512.1h0M532.5 501.2h0M489.1 520.3h0M461.6 534.3h0M351.0 567.0h0M562.5 399.7h0M305.7 570.3h0M490.9 363.2h0M456.5 512.6h0M555.3 484.8h0M358.7 564.4h0M569.9 405.9h0M447.1 346.7h0M501.3 477.2h0M481.4 520.9h0M529.6 504.9h0M433.1 543.7h0M397.4 330.4h0M507.2 437.1h0M455.5 525.7h0M561.1 484.0h0M341.3 569.1h0M551.2 391.9h0M363.6 552.2h0M570.1 409.9h0M286.2 576.4h0M449.5 347.5h0M499.8 479.2h0M300.9 579.0h0M484.3 359.4h0M465.3 507.2h0M544.5 491.9h0M390.9 555.8h0M589.1 431.9h0M231.1 591.7h0M291.3 303.1h0M359.9 351.5h0M492.0 406.9h0M471.1 513.4h0M540.1 496.6h0M404.1 552.2h0M591.0 442.5h0M281.6 300.7h0M335.5 343.7h0M459.2 387.2h0M506.2 487.0h0M476.1 524.8h0M538.2 500.6h0M410.5 550.6h0M590.7 447.7h0M231.1 593.1h0M360.4 351.7h0M492.6 407.3h0M470.3 513.9h0M541.3 496.0h0M400.9 553.2h0M279.8 300.3h0M451.4 383.4h0M511.7 480.7h0M463.0 529.3h0M555.1 490.1h0M361.0 564.3h0M572.2 407.8h0M278.7 578.1h0M431.3 341.4h0M508.4 464.5h0M553.9 490.3h0M364.7 563.3h0M575.3 410.8h0M270.0 580.6h0M409.0 334.4h0M510.3 446.5h0M492.5 487.1h0M352.7 566.6h0M564.4 401.1h0M300.7 571.8h0M481.1 359.2h0M469.8 504.6h0M538.5 495.5h0M407.9 550.9h0M288.0 302.2h0M352.0 348.9h0M482.6 400.5h0M483.1 505.8h0M521.5 506.2h0M451.9 537.2h0M568.5 481.1h0M317.8 575.1h0M516.2 372.9h0M413.7 532.9h0M584.0 450.3h0M255.5 587.6h0M489.9 414.7h0M477.4 511.7h0M531.5 501.7h0M427.2 545.3h0M585.9 461.2h0M253.2 589.1h0M363.1 320.8h0M483.6 409.5h0M484.9 506.7h0M519.2 507.7h0M457.4 535.4h0M562.9 485.5h0M336.4 570.6h0M544.8 387.9h0M351.3 556.0h0M558.9 400.0h0M316.6 567.4h0M511.2 372.0h0M423.5 528.9h0M580.9 458.2h0M269.1 585.1h0M408.3 333.7h0M510.0 446.0h0M539.6 384.9h0M448.5 347.1h0M500.4 478.4h0M483.4 520.2h0M441.0 541.2h0M577.8 472.3h0M284.7 582.6h0M448.1 346.2h0M283.8 582.8h0M446.1 345.6h0M501.6 476.4h0M480.5 521.2h0M530.8 504.2h0M429.8 544.7h0M584.7 463.3h0M258.0 588.2h0M377.4 324.7h0M496.3 421.0h0M469.3 516.9h0M543.6 495.1h0M394.6 555.0h0M283.3 301.2h0M339.9 345.1h0M466.0 390.8h0M500.5 492.4h0M488.6 520.3h0M518.7 510.7h0M459.6 535.0h0M560.7 487.3h0M343.7 568.8h0M554.3 393.8h0M327.7 563.6h0M528.9 380.9h0M388.6 543.2h0M583.4 430.0h0M249.9 587.2h0M352.2 318.2h0M471.4 400.7h0M497.9 496.8h0M494.8 518.2h0M508.0 515.7h0M483.3 526.3h0M528.8 506.4h0M435.5 543.1h0M581.5 467.9h0M270.5 585.6h0M412.4 334.8h0M510.4 449.2h0M453.8 528.3h0M540.9 385.7h0M360.8 552.9h0M567.7 407.6h0M292.8 574.5h0M464.4 352.8h0M488.0 491.2h0M508.8 510.2h0M479.6 527.0h0M534.2 503.4h0M421.3 547.5h0M588.3 456.4h0M242.9 591.1h0M331.0 312.5h0M440.7 383.6h0M519.3 472.1h0M444.0 535.4h0M573.7 474.7h0M298.8 579.3h0M479.7 357.6h0M471.1 503.5h0M536.5 496.6h0M413.2 549.3h0M590.2 449.9h0M234.0 592.6h0M383.5 359.7h0M512.8 425.9h0M440.3 530.2h0M474.7 355.7h0M477.0 499.5h0M527.5 501.4h0M436.6 542.1h0M580.6 468.7h0M273.9 584.9h0M421.2 337.5h0M510.2 456.3h0M456.8 528.1h0M560.8 485.0h0M342.6 568.9h0M552.8 392.9h0M331.4 562.5h0M534.3 383.9h0M376.6 547.6h0M578.7 420.4h0M262.5 583.3h0M388.7 328.3h0M503.6 430.1h0M459.7 522.8h0M556.0 487.4h0M357.4 565.1h0M568.9 404.9h0M288.0 575.5h0M453.7 349.0h0M384.4 558.2h0M587.1 426.7h0M307.5 307.0h0M396.8 364.7h0M519.8 436.6h0M581.4 463.1h0M408.1 333.6h0M286.8 576.2h0M450.9 347.9h0M498.9 480.3h0M486.8 519.0h0M520.9 509.3h0M454.4 536.7h0M566.2 483.1h0M325.7 573.2h0M529.2 379.3h0M387.1 543.5h0M582.9 428.9h0M251.2 586.7h0M356.2 319.3h0M476.2 403.9h0M493.1 500.7h0M504.3 514.3h0M489.8 523.3h0M351.1 567.0h0M305.3 570.4h0M490.3 362.9h0M457.5 512.0h0M554.2 485.6h0M361.9 563.6h0M572.8 408.5h0M277.0 578.6h0M427.1 340.0h0M460.0 527.6h0M557.6 487.6h0M353.0 566.3h0M299.9 572.0h0M479.5 358.5h0M471.8 503.3h0M535.6 497.1h0M415.6 548.6h0M589.7 451.8h0M236.4 592.2h0M309.7 307.3h0M401.3 366.5h0M521.5 440.3h0M427.4 537.2h0M582.8 461.3h0M263.9 586.6h0M394.1 329.5h0M506.0 434.5h0M456.9 524.7h0M559.5 485.1h0M557.6 396.2h0M319.0 566.3h0M515.1 373.9h0M416.2 532.1h0M583.5 452.3h0M258.2 587.2h0M496.3 421.1h0M543.7 495.0h0M341.7 345.7h0M468.6 392.2h0M498.0 494.5h0M493.6 518.3h0M509.9 514.7h0M479.2 527.9h0M535.1 503.1h0M419.0 548.2h0M589.1 454.5h0M239.6 591.7h0M320.3 309.9h0M422.0 375.0h0M524.0 457.0h0M428.1 539.2h0M583.3 461.9h0M262.4 587.0h0M389.9 328.3h0M504.0 431.1h0M459.3 523.1h0M556.6 487.0h0M355.6 565.5h0M567.1 403.4h0M293.1 574.0h0M464.9 353.0h0M487.5 491.6h0M509.6 509.8h0M477.9 527.6h0M536.8 502.0h0M302.5 305.6h0M385.8 360.6h0M514.3 427.8h0M438.0 531.4h0M575.9 469.9h0M290.1 581.0h0M460.5 350.6h0M491.2 488.0h0M502.6 512.8h0M492.3 522.0h0M513.4 513.7h0M471.9 530.7h0M545.6 497.2h0M589.0 431.0h0M359.1 351.3h0M491.0 406.2h0M472.4 512.6h0M538.3 497.6h0M289.6 302.6h0M355.8 350.2h0M487.3 403.6h0M477.2 509.6h0M428.4 544.9h0M370.4 322.8h0M532.9 500.9h0M423.6 546.4h0M587.4 458.2h0M246.8 590.3h0M343.6 315.7h0M460.0 393.8h0M507.8 487.6h0M473.2 526.2h0M542.3 498.3h0M399.0 554.0h0M590.8 438.4h0M327.2 341.2h0M445.3 380.5h0M515.2 475.8h0M454.1 532.1h0M564.7 482.8h0M330.0 572.1h0M535.7 382.8h0M372.9 548.7h0M576.4 417.3h0M268.6 581.5h0M405.6 333.3h0M509.7 443.8h0M364.9 551.4h0M571.1 411.0h0M283.5 577.2h0M443.3 345.3h0M503.5 474.2h0M476.4 522.7h0M537.0 500.8h0M413.5 549.7h0M233.6 592.7h0M300.2 305.1h0M380.9 358.8h0M511.0 423.8h0M443.1 528.8h0M571.8 474.0h0M304.7 577.8h0M491.7 362.4h0M455.0 513.2h0M556.9 483.6h0M565.1 401.8h0M298.7 572.4h0M477.0 357.6h0M474.7 501.4h0M531.2 499.5h0M363.9 321.1h0M484.5 410.2h0M520.9 506.9h0M453.5 536.7h0M567.0 482.4h0M323.0 573.9h0M524.9 377.1h0M396.3 540.0h0M584.9 436.2h0M247.1 588.4h0M474.0 525.9h0M541.3 498.9h0M401.9 553.2h0M591.0 440.8h0M446.2 380.9h0M334.1 571.1h0M541.7 386.1h0M358.8 553.5h0M566.1 406.0h0M297.3 573.2h0M474.2 356.4h0M478.0 499.1h0M526.1 502.1h0M440.0 540.9h0M578.3 471.5h0M282.7 583.0h0M443.4 344.7h0M477.0 522.4h0M536.0 501.3h0M416.1 548.9h0M589.7 452.2h0M236.3 592.2h0M309.3 307.2h0M400.4 366.1h0M521.2 439.5h0M427.8 536.9h0M582.5 461.7h0M264.8 586.4h0M396.7 330.2h0M507.0 436.6h0M560.8 484.2h0M342.2 568.9h0M332.5 562.1h0M404.4 333.0h0M497.1 482.3h0M469.5 531.4h0M548.8 495.3h0M380.6 559.2h0M585.5 423.6h0M240.6 588.8h0M322.7 310.7h0M426.5 376.9h0M523.4 460.6h0M430.6 538.8h0M582.1 463.9h0M266.9 586.1h0M402.6 331.9h0M508.8 441.3h0M562.9 482.7h0M562.5 402.9h0M306.9 570.3h0M493.6 364.2h0M452.7 514.7h0M559.5 481.7h0M345.4 567.8h0M556.0 395.2h0M323.1 565.0h0M521.9 377.3h0M403.1 537.5h0M585.4 441.7h0M345.3 316.3h0M462.4 395.2h0M505.8 489.6h0M536.0 501.9h0M589.7 452.4h0M521.6 440.5h0M393.5 329.3h0M505.7 434.0h0M457.2 524.5h0M347.7 567.6h0M558.8 397.0h0M315.7 567.3h0M509.5 371.3h0M274.8 583.9h0M423.3 338.3h0M510.0 458.1h0M457.9 527.9h0M559.7 486.0h0M346.2 568.0h0M320.1 566.0h0M516.9 374.8h0M412.9 533.5h0M254.4 587.8h0M366.3 321.8h0M486.8 412.0h0M481.2 509.2h0M525.5 504.7h0M442.3 540.5h0M576.7 473.4h0M288.7 581.7h0M457.5 349.5h0M493.7 485.6h0M497.5 514.8h0M502.0 517.9h0M495.2 521.5h0M508.5 516.0h0M482.5 526.7h0M530.1 505.8h0M432.0 544.2h0M583.6 465.1h0M354.3 565.9h0M565.9 402.4h0M296.4 573.0h0M472.1 355.7h0M480.3 497.4h0M522.3 504.0h0M449.3 537.9h0M570.8 479.0h0M309.8 577.0h0M501.7 366.5h0M439.5 521.2h0M571.2 471.1h0M305.4 577.3h0M493.0 362.9h0M453.2 514.2h0M558.9 482.1h0M347.2 567.3h0M421.1 530.0h0M265.1 585.9h0M335.9 561.1h0M540.5 387.5h0M362.4 552.6h0M288.7 575.7h0M455.3 349.5h0M495.7 483.8h0M493.6 516.4h0M509.2 514.7h0M480.6 527.3h0M533.0 504.2h0M424.6 546.5h0M587.1 459.0h0M248.0 590.1h0M347.3 316.7h0M465.0 396.7h0M503.8 491.6h0M482.3 522.9h0M529.0 505.6h0M434.7 543.2h0M582.0 467.2h0M268.7 586.0h0M407.5 333.4h0M509.9 445.3h0M563.7 482.3h0M454.2 349.1h0M491.9 517.1h0M512.3 513.3h0M473.9 529.8h0M542.8 498.8h0M397.9 554.4h0M454.4 532.0h0M331.2 571.8h0M537.5 383.7h0M368.8 550.1h0M573.8 414.1h0M275.9 579.4h0M424.5 339.2h0M510.0 459.0h0M559.4 486.2h0M347.2 567.8h0M558.3 396.7h0M317.0 566.9h0M422.7 529.3h0M581.2 457.6h0M267.7 585.4h0M541.3 385.9h0M359.9 553.2h0M567.0 406.9h0M294.8 573.9h0M468.9 354.4h0M483.6 494.8h0M516.6 506.7h0M462.5 533.3h0M557.1 489.7h0M467.0 353.8h0M513.2 508.2h0M470.1 530.5h0M547.7 495.8h0M383.8 558.3h0M586.9 426.2h0M236.7 589.9h0M401.7 366.6h0M263.6 586.7h0M505.7 433.9h0M559.0 485.4h0M559.3 397.4h0M314.5 567.7h0M507.4 370.3h0M430.3 525.8h0M577.4 463.7h0M282.6 582.3h0M442.8 344.5h0M476.1 522.7h0M412.6 550.0h0M590.4 449.4h0M232.7 592.8h0M297.3 304.3h0M374.1 356.4h0M505.8 418.3h0M451.3 524.5h0M564.3 480.6h0M371.2 549.2h0M575.4 416.0h0M271.4 580.7h0M413.0 335.6h0M510.6 449.8h0M453.6 528.5h0M481.9 520.8h0M269.7 585.8h0M410.2 334.2h0M510.2 447.5h0M470.0 531.2h0M382.7 558.6h0M586.4 425.3h0M238.0 589.6h0M314.0 308.6h0M410.1 369.9h0M523.5 447.4h0M425.6 538.8h0M584.0 459.8h0M259.2 587.6h0M380.8 325.7h0M498.7 423.7h0M466.2 518.8h0M547.8 492.6h0M238.9 589.3h0M416.2 372.4h0M524.1 452.3h0M426.1 539.3h0M381.4 325.9h0M499.1 424.2h0M465.7 519.1h0M548.5 492.2h0M380.2 559.0h0M241.6 588.5h0M325.8 311.5h0M432.0 379.4h0M522.3 465.0h0M434.9 537.8h0M579.9 467.3h0M275.7 584.3h0M425.9 339.0h0M557.9 487.3h0M303.1 571.1h0M463.4 508.6h0M547.0 490.4h0M383.7 557.8h0M237.6 589.7h0M313.0 308.3h0M408.0 369.1h0M523.2 445.7h0M425.7 538.6h0M382.4 326.2h0M499.8 425.1h0M464.8 519.7h0M549.7 491.5h0M376.7 560.0h0M583.3 420.4h0M246.8 587.0h0M458.4 392.8h0M509.0 486.3h0M470.4 527.1h0M546.0 496.0h0M388.3 557.0h0M232.3 591.2h0M295.3 304.0h0M369.5 354.8h0M501.8 414.7h0M457.3 521.3h0M557.8 485.4h0M304.5 570.7h0M488.7 362.2h0M459.8 510.7h0M551.5 487.4h0M370.2 561.4h0M579.1 415.2h0M258.9 583.7h0M468.1 517.6h0M545.2 494.2h0M292.4 303.3h0M362.7 352.5h0M495.0 409.2h0M467.0 515.9h0M545.8 493.3h0M588.2 429.4h0M233.1 591.0h0M298.0 304.7h0M375.9 357.0h0M507.3 419.8h0M449.0 525.7h0M566.5 478.7h0M322.9 573.5h0M507.7 487.7h0M542.1 498.4h0M399.6 553.8h0M278.3 300.0h0M326.8 341.1h0M444.6 380.2h0M515.5 475.2h0M453.1 532.4h0M565.7 482.1h0M326.9 572.8h0M531.0 380.3h0M383.2 544.9h0M581.6 425.7h0M254.7 585.7h0M366.4 322.1h0M487.0 412.2h0M480.9 509.4h0M526.0 504.4h0M441.1 540.9h0M577.6 472.4h0M285.4 582.4h0M449.8 346.8h0M499.3 479.4h0M485.8 519.3h0M522.6 508.4h0M450.3 538.1h0M312.2 576.4h0M506.2 368.4h0M431.9 524.9h0M576.4 465.0h0M286.4 581.5h0M451.9 347.6h0M497.9 481.1h0M488.8 518.2h0M517.6 510.9h0M480.0 358.7h0M471.1 503.8h0M301.0 305.2h0M382.5 359.4h0M512.2 425.1h0M441.4 529.7h0M573.3 472.6h0M299.4 579.0h0M481.0 358.1h0M469.5 504.6h0M407.0 551.2h0M590.8 444.9h0M348.0 347.7h0M511.3 510.9h0M541.0 499.8h0M402.9 553.0h0M591.1 441.6h0M514.3 477.1h0M456.4 531.4h0M562.4 484.7h0M546.4 388.9h0M347.5 557.3h0M554.8 396.9h0M327.2 564.1h0M528.3 380.5h0M389.8 542.7h0M583.8 431.0h0M249.2 587.4h0M517.5 511.3h0M557.6 489.5h0M353.6 566.3h0M298.1 572.5h0M475.7 357.1h0M344.0 558.5h0M550.8 394.1h0M337.6 560.8h0M542.9 388.9h0M356.8 554.5h0M484.1 360.3h0M543.8 492.4h0M287.3 302.1h0M350.2 348.4h0M480.3 399.0h0M485.8 504.0h0M516.9 508.4h0M466.2 353.5h0M486.3 492.6h0M511.9 508.8h0M473.0 529.5h0M395.1 555.2h0M590.3 435.3h0M334.3 343.3h0M457.2 386.2h0M507.7 485.4h0M472.6 526.1h0M543.0 497.8h0M397.0 554.6h0M590.5 436.8h0M330.2 342.1h0M450.5 383.0h0M461.7 529.7h0M556.6 489.0h0M356.2 565.6h0M460.3 351.3h0M491.7 487.9h0M501.7 513.2h0M494.1 521.3h0M510.3 515.1h0M478.6 528.2h0M536.1 502.6h0M416.5 549.0h0M393.0 329.2h0M505.5 433.6h0M457.5 524.3h0M503.5 368.6h0M573.2 469.1h0M298.4 578.9h0M478.7 357.3h0M472.4 502.7h0M534.7 497.6h0M418.1 547.8h0M589.0 453.8h0M319.5 309.7h0M420.4 374.3h0M524.1 455.7h0M427.4 539.3h0M583.5 461.4h0M261.3 587.2h0M386.7 327.4h0M502.4 428.5h0M461.4 521.8h0M554.0 488.8h0M363.7 563.4h0M574.4 410.0h0M272.5 579.9h0M415.6 336.4h0M510.7 451.8h0M454.1 528.5h0M334.1 571.0h0M473.9 356.3h0M478.3 498.8h0M525.6 502.4h0M286.1 582.3h0M451.6 347.4h0M498.1 480.8h0M488.3 518.4h0M460.3 534.7h0M559.9 487.9h0M516.2 374.4h0M584.0 450.7h0M255.8 587.6h0M476.4 512.4h0M533.2 500.8h0M423.0 546.6h0M245.9 590.5h0M340.6 315.0h0M455.7 391.4h0M510.9 484.2h0M465.8 528.7h0M551.9 492.3h0M370.8 561.8h0M579.8 415.7h0M256.9 584.2h0M372.8 323.9h0M492.8 417.3h0M473.8 514.0h0M537.1 498.7h0M375.5 356.9h0M506.9 419.5h0M449.5 525.5h0M566.0 479.2h0M324.6 573.1h0M527.4 378.5h0M391.1 542.0h0M584.0 432.0h0M248.8 587.6h0M348.7 317.3h0M467.0 397.9h0M501.9 493.3h0M486.2 521.4h0M505.8 368.2h0M432.6 524.5h0M576.0 465.6h0M288.0 581.1h0M455.8 349.0h0M495.1 484.2h0M484.9 525.6h0M526.3 507.7h0M441.7 541.1h0M489.3 518.0h0M516.7 511.3h0M464.1 533.3h0M555.5 491.0h0M360.4 564.6h0M571.7 407.3h0M280.1 577.7h0M434.8 342.5h0M507.3 467.3h0M466.6 525.7h0M549.9 493.0h0M342.0 315.6h0M457.8 392.5h0M509.4 485.9h0M469.4 527.5h0M547.4 495.2h0M581.7 462.8h0M361.5 552.6h0M568.3 408.2h0M460.9 351.5h0M491.2 488.3h0M492.0 522.1h0M235.5 590.3h0M305.8 306.6h0M393.2 363.3h0M518.3 433.7h0M431.9 534.6h0M580.0 465.0h0M274.4 584.4h0M422.4 338.0h0M510.1 457.3h0M457.4 528.0h0M560.2 485.6h0M344.6 568.4h0M555.3 394.6h0M325.0 564.5h0M524.7 378.7h0M397.3 539.8h0M585.1 437.0h0M342.6 315.7h0M470.9 527.0h0M545.5 496.4h0M291.0 303.0h0M491.3 406.4h0M472.0 512.9h0M538.8 497.3h0M407.7 551.2h0M478.1 397.7h0M488.3 502.2h0M512.5 510.4h0M544.7 497.7h0M392.6 555.9h0M491.8 523.0h0M514.6 513.3h0M549.2 495.1h0M379.5 559.5h0M584.9 422.7h0M242.1 588.4h0M327.5 311.9h0M435.0 380.8h0M521.4 467.5h0M437.7 537.1h0M578.2 469.6h0M503.7 473.4h0M537.9 500.3h0M411.1 550.4h0M231.5 593.0h0M293.1 303.4h0M364.3 353.0h0M496.7 410.4h0M464.7 517.2h0M548.9 491.4h0M378.9 559.3h0M584.5 422.2h0M243.6 588.0h0M332.1 313.1h0M442.6 384.5h0M518.5 473.6h0M446.4 534.8h0M571.8 476.6h0M305.6 577.8h0M493.5 363.1h0M344.5 568.0h0M555.0 394.5h0M325.9 564.2h0M394.3 541.0h0M404.3 552.5h0M591.1 442.7h0M280.3 300.4h0M332.2 342.7h0M550.3 493.3h0M375.7 560.4h0M582.8 419.7h0M248.1 586.7h0M346.3 316.7h0M463.8 395.9h0M504.7 490.7h0M480.2 523.7h0M532.3 503.9h0M426.2 545.9h0M586.4 460.4h0M251.1 589.5h0M356.7 319.1h0M476.7 404.4h0M492.5 501.1h0M505.3 513.8h0M487.7 524.2h0M521.6 509.9h0M453.2 537.3h0M567.4 482.1h0M321.4 574.3h0M522.3 375.8h0M401.7 537.8h0M585.3 440.6h0M345.0 316.2h0M462.0 394.9h0M476.8 524.9h0M537.3 501.1h0M375.7 357.0h0M507.1 419.7h0M566.3 478.9h0M323.6 573.4h0M525.8 377.6h0M506.4 489.1h0M411.8 550.3h0M590.6 448.8h0M232.1 592.9h0M294.9 303.8h0M368.7 354.5h0M501.0 414.0h0M458.4 520.7h0M556.5 486.4h0M292.8 574.1h0M479.8 526.9h0M422.0 547.3h0M243.8 590.9h0M334.1 313.3h0M445.8 386.1h0M516.9 476.2h0M450.5 533.5h0M568.2 480.0h0M318.2 574.9h0M516.9 373.3h0M584.3 449.2h0M254.1 587.9h0M365.4 321.6h0M486.0 411.4h0M482.1 508.6h0M523.9 505.5h0M446.2 539.2h0M482.2 358.6h0M468.0 505.5h0M540.9 494.1h0M401.2 552.8h0M333.6 343.2h0M456.2 385.7h0M508.4 484.6h0M390.5 556.4h0M589.1 431.6h0M230.7 591.8h0M289.8 302.7h0M356.5 350.4h0M488.0 404.1h0M476.3 510.2h0M520.1 510.1h0M526.3 506.6h0M441.3 541.1h0M499.1 479.7h0M521.7 508.8h0M452.4 537.4h0M568.1 481.5h0M319.1 574.8h0M518.5 374.0h0M409.3 534.8h0M584.8 446.7h0M251.3 588.3h0M357.1 319.3h0M477.1 404.6h0M492.1 501.4h0M506.1 513.5h0M486.0 524.8h0M524.3 508.6h0M300.7 579.0h0M465.9 506.8h0M393.2 555.1h0M589.6 433.7h0M478.5 398.0h0M487.8 502.6h0M305.3 306.4h0M392.1 362.9h0M517.8 432.9h0M432.7 534.2h0M579.6 465.6h0M557.0 488.0h0M566.4 402.8h0M295.0 573.4h0M469.1 354.5h0M461.9 533.5h0M480.7 359.0h0M470.3 504.3h0M537.7 495.9h0M409.8 550.3h0M362.2 352.3h0M494.5 408.8h0M467.7 515.4h0M544.9 493.9h0M358.3 351.0h0M382.1 359.2h0M511.9 424.8h0M441.8 529.4h0M572.9 473.0h0M543.6 492.4h0M589.7 433.9h0M289.4 575.1h0M456.6 350.0h0M494.7 484.9h0M495.7 515.6h0M520.5 510.5h0M455.7 536.4h0M564.9 484.2h0M576.1 416.9h0M269.5 581.3h0M407.9 334.0h0M367.2 550.7h0M572.7 412.8h0M279.0 578.5h0M432.3 341.7h0M508.1 465.3h0M464.3 526.4h0M552.7 491.1h0M578.0 413.7h0M262.2 582.8h0M387.7 328.1h0M503.0 429.3h0M460.4 522.3h0M555.2 488.0h0M360.0 564.4h0M571.3 407.0h0M281.4 577.3h0M438.1 343.6h0M506.0 469.9h0M389.5 556.6h0M546.4 492.9h0M386.2 557.3h0M587.7 428.1h0M234.7 590.6h0M489.5 362.5h0M458.6 511.4h0M552.9 486.5h0M366.1 562.5h0M576.2 411.9h0M267.4 581.3h0M542.2 386.5h0M357.6 553.9h0M565.0 405.1h0M480.4 358.8h0M470.7 504.0h0M537.2 496.2h0M411.3 549.9h0M296.0 304.1h0M371.2 355.4h0M503.3 416.0h0M455.0 522.5h0M560.3 483.6h0M328.8 563.3h0M530.6 381.8h0M384.9 544.5h0M582.3 427.0h0M252.8 586.2h0M360.9 320.5h0M481.4 407.7h0M487.4 504.9h0M514.7 509.7h0M373.7 561.1h0M251.5 585.7h0M476.7 404.3h0M521.7 509.9h0M567.7 481.9h0M320.5 574.5h0M520.7 375.1h0M404.8 536.6h0M585.3 443.1h0M466.7 397.7h0M502.3 493.0h0M485.5 521.7h0M523.9 508.2h0M447.4 539.1h0M572.7 477.5h0M303.2 578.5h0M488.8 361.2h0M459.1 510.9h0M552.2 486.9h0M368.0 562.0h0M391.1 329.1h0M458.2 523.7h0M557.9 486.2h0M563.2 400.2h0M304.0 570.8h0M487.7 361.8h0M582.3 419.2h0M249.8 586.2h0M351.6 318.1h0M470.6 400.2h0M498.6 496.2h0M493.3 518.7h0M510.6 514.5h0M477.7 528.4h0M537.5 501.9h0M539.7 385.0h0M286.4 576.3h0M450.1 347.6h0M485.6 519.4h0M522.9 508.3h0M438.5 521.7h0M572.0 470.3h0M302.8 577.9h0M487.8 360.8h0M460.6 510.0h0M550.4 488.1h0M373.5 560.5h0M480.3 406.9h0M488.6 504.0h0M472.3 530.0h0M544.9 497.6h0M286.0 301.8h0M346.9 347.3h0M475.9 396.4h0M490.6 500.5h0M508.2 512.3h0M481.7 526.5h0M531.2 505.1h0M429.2 545.1h0M585.0 462.8h0M256.6 588.5h0M373.4 323.6h0M493.1 417.8h0M473.4 514.3h0M537.7 498.4h0M411.0 550.3h0M293.8 303.5h0M365.9 353.6h0M498.3 411.8h0M462.3 518.5h0M551.9 489.5h0M369.9 561.7h0M579.1 415.0h0M259.1 583.6h0M467.7 517.9h0M505.9 418.4h0M564.4 480.5h0M576.2 417.1h0M407.1 333.7h0M538.4 384.3h0M435.0 342.6h0M466.9 525.7h0M549.6 493.2h0M337.0 314.4h0M450.5 388.5h0M514.3 479.9h0M457.4 531.4h0M561.5 485.5h0M340.8 569.4h0M550.7 391.5h0M336.9 560.7h0M541.9 388.4h0M359.1 553.7h0M566.4 406.2h0M522.7 503.8h0M448.3 538.2h0M563.8 404.0h0M486.9 361.4h0M462.2 509.3h0M548.6 489.4h0M243.7 588.0h0M332.5 313.2h0M443.3 384.8h0M518.1 474.1h0M447.2 534.5h0M571.1 477.3h0M308.1 577.2h0M498.4 365.1h0M444.8 518.6h0M566.9 475.3h0M320.4 573.9h0M405.6 536.3h0M549.2 393.0h0M539.7 387.0h0M570.7 410.5h0M284.6 576.9h0M445.8 346.2h0M502.1 476.1h0M479.6 521.6h0M532.3 503.4h0M586.5 460.2h0M250.8 589.6h0M355.8 318.9h0M475.7 403.6h0M493.6 500.3h0M503.2 514.7h0M484.5 360.5h0M391.1 555.7h0M490.5 405.8h0M537.2 498.2h0M297.0 304.3h0M373.5 356.2h0M505.3 417.9h0M452.0 524.2h0M563.6 481.1h0M486.7 519.0h0M521.1 509.1h0M453.8 536.9h0M323.7 573.7h0M526.1 377.7h0M584.6 434.3h0M247.7 588.1h0M345.4 316.4h0M505.7 489.7h0M477.9 524.5h0M535.7 502.1h0M417.3 548.6h0M589.5 453.2h0M237.6 592.0h0M313.7 308.3h0M409.4 369.7h0M523.4 446.8h0M381.2 558.7h0M585.6 424.1h0M240.3 588.9h0M321.7 310.5h0M424.8 376.1h0M523.7 459.2h0M429.6 539.0h0M582.6 463.1h0M364.6 551.8h0M283.9 577.1h0M444.2 345.6h0M503.0 474.9h0M477.6 522.3h0M238.7 591.8h0M416.4 372.6h0M325.5 311.4h0M431.6 379.2h0M522.4 464.7h0M424.0 338.4h0M458.4 527.8h0M315.6 567.3h0M579.2 461.0h0M350.3 567.0h0M495.0 364.8h0M450.6 515.8h0M561.6 480.0h0M338.4 569.5h0M345.1 558.1h0M334.3 561.9h0M538.5 386.2h0M278.7 578.6h0M553.7 490.4h0M365.3 551.3h0M571.4 411.3h0M282.7 577.4h0M441.3 344.7h0M504.5 472.6h0M473.9 523.5h0M540.5 498.8h0M466.9 528.0h0M550.5 493.2h0M248.9 586.4h0M486.5 521.3h0M451.3 537.8h0M569.2 480.6h0M315.3 575.7h0M511.9 371.0h0M421.8 529.5h0M581.5 456.8h0M266.4 585.6h0M400.9 331.5h0M508.4 440.0h0M454.3 526.7h0M545.2 388.2h0M350.5 556.3h0M558.1 399.4h0M318.8 566.7h0M514.8 373.7h0M416.8 531.8h0M583.3 452.8h0M258.9 587.0h0M379.8 325.5h0M498.0 422.9h0M546.6 493.3h0M304.5 306.2h0M390.2 362.2h0M516.8 431.4h0M434.2 533.4h0M578.6 466.8h0M279.9 583.3h0M468.6 525.1h0M547.4 494.6h0M384.2 558.1h0M586.9 426.5h0M400.3 366.0h0M507.1 436.7h0M455.7 525.6h0M552.0 392.4h0M333.5 561.8h0M537.4 385.6h0M369.7 550.0h0M574.6 414.8h0M273.8 580.0h0M419.2 337.5h0M510.6 454.7h0M562.1 484.0h0M338.2 570.0h0M536.9 385.3h0M370.8 549.6h0M271.8 580.6h0M414.1 335.9h0M510.7 450.6h0M457.4 350.2h0M497.0 515.1h0M503.1 517.4h0M493.0 522.4h0M512.4 514.3h0M590.8 438.0h0M326.5 341.0h0M444.1 379.9h0M515.8 474.8h0M452.4 532.6h0M566.3 481.5h0M314.5 575.9h0M510.3 370.3h0M424.6 528.2h0M580.3 459.1h0M271.4 584.6h0M414.3 335.5h0M358.0 553.8h0M565.3 405.4h0M299.4 572.5h0M478.5 358.1h0M533.8 498.1h0M420.4 547.1h0M588.4 455.7h0M329.5 312.1h0M438.2 382.3h0M520.3 470.0h0M441.0 536.3h0M575.9 472.3h0M290.7 581.1h0M462.2 351.1h0M489.8 489.4h0M505.4 511.6h0M486.7 524.2h0M449.8 538.4h0M310.4 576.8h0M502.9 367.0h0M437.4 522.2h0M572.8 469.4h0M299.9 578.6h0M336.8 344.1h0M461.1 388.2h0M504.6 488.5h0M479.6 523.6h0M533.1 503.4h0M424.2 546.5h0M587.2 458.8h0M247.5 590.2h0M345.8 316.3h0M505.4 490.0h0M478.6 524.3h0M534.6 502.6h0M420.0 547.8h0M588.7 455.4h0M241.1 591.4h0M434.1 538.0h0M580.3 466.8h0M421.8 337.7h0M510.2 456.8h0M529.9 381.5h0M386.3 544.0h0M582.8 428.2h0M506.6 513.3h0M485.1 525.2h0M443.0 540.6h0M576.3 473.9h0M491.6 522.3h0M549.7 494.8h0M334.4 313.7h0M516.6 476.6h0M451.3 533.3h0M567.5 480.6h0M585.3 442.8h0M348.0 317.0h0M466.0 397.3h0M502.8 492.5h0M484.3 522.2h0M525.9 507.2h0M442.5 540.7h0M457.8 349.6h0M500.9 518.4h0M515.8 512.7h0M466.5 532.6h0M552.6 492.9h0M369.3 562.3h0M578.8 414.5h0M259.9 583.4h0M242.8 588.2h0M329.6 312.5h0M438.6 382.5h0M520.2 470.3h0M575.6 472.7h0M292.0 580.8h0M465.0 352.1h0M510.2 509.5h0M409.3 551.1h0M352.2 349.0h0M482.7 506.1h0M522.2 505.9h0M312.8 576.3h0M507.3 368.9h0M430.0 525.8h0M577.6 463.4h0M282.0 582.4h0M441.4 344.1h0M504.2 472.6h0M474.4 523.3h0M539.8 499.2h0M406.0 551.9h0M591.1 444.1h0M282.7 301.0h0M502.6 490.5h0M577.1 473.0h0M287.1 582.1h0M453.8 348.2h0M512.7 513.2h0M473.1 530.1h0M334.8 343.5h0M458.1 386.7h0M507.0 486.0h0M474.1 525.5h0M328.9 341.7h0M448.4 381.9h0M513.5 478.2h0M458.4 530.8h0M560.3 486.3h0M397.7 539.7h0M530.8 501.6h0M429.0 544.7h0M585.0 462.6h0M408.9 550.9h0M354.3 349.7h0M485.4 402.4h0M479.6 508.1h0M527.3 503.4h0M276.7 584.3h0M428.4 339.8h0M509.0 462.2h0M461.5 527.1h0M555.9 488.8h0M358.3 565.0h0M285.7 576.1h0M448.2 347.1h0M527.1 506.1h0M579.0 470.9h0M436.5 342.4h0M468.9 525.0h0M392.4 363.0h0M517.9 433.1h0M579.7 465.4h0M303.6 570.9h0M379.3 559.0h0M331.1 312.8h0M441.1 383.7h0M519.1 472.3h0M444.4 535.3h0M573.4 475.0h0M590.8 440.4h0M456.5 385.9h0M508.2 484.8h0M285.6 301.7h0M346.0 347.0h0M474.7 395.7h0M491.9 499.5h0M486.8 524.5h0M523.0 509.2h0M449.6 538.5h0M571.5 470.8h0M304.4 577.5h0M491.1 362.2h0M455.9 512.7h0M555.9 484.3h0M356.6 565.0h0M496.9 520.1h0M505.1 517.4h0M489.4 524.0h0M518.8 511.3h0M459.8 535.0h0M554.8 394.2h0M526.6 379.7h0M393.3 541.3h0M528.0 378.7h0M583.7 431.1h0M350.6 317.8h0M469.4 399.4h0M499.7 495.2h0M490.9 519.7h0M514.8 512.6h0M583.7 420.8h0M338.6 314.8h0M452.9 389.8h0M512.8 481.9h0M461.2 530.2h0M557.3 488.6h0M354.1 566.1h0M565.7 402.2h0M296.9 572.9h0M473.2 356.1h0M479.1 498.3h0M524.3 503.0h0M444.5 539.5h0M574.9 475.1h0M295.2 580.3h0M472.0 354.7h0M495.7 364.0h0M449.0 516.4h0M563.1 478.7h0M333.5 570.7h0M309.9 569.0h0M499.0 366.6h0M444.3 519.1h0M567.4 474.9h0M318.7 574.3h0M517.5 373.7h0M361.9 320.6h0M482.4 408.5h0M486.3 505.7h0M463.3 533.3h0M556.4 490.2h0M569.0 404.9h0M490.1 517.8h0M515.4 511.9h0M467.0 532.3h0M552.0 493.2h0M371.5 323.5h0M491.7 416.2h0M475.1 513.2h0M535.1 499.8h0M317.7 309.2h0M524.1 453.0h0M549.2 491.8h0M378.1 559.6h0M515.6 478.1h0M329.5 572.2h0M535.0 382.4h0M374.4 548.1h0M577.4 418.6h0M266.1 582.3h0M398.7 331.2h0M507.9 438.2h0M538.8 386.4h0M366.5 551.1h0M452.5 389.6h0M513.0 481.6h0M460.6 530.4h0M558.0 488.1h0M485.6 361.0h0M464.0 508.2h0M546.3 490.8h0M424.8 338.7h0M560.6 398.3h0M500.8 367.3h0M441.5 520.5h0M569.8 472.7h0M310.6 576.1h0M503.1 367.2h0M437.2 522.4h0M480.7 358.1h0M538.2 495.6h0M590.7 446.2h0M477.2 509.7h0M428.1 545.0h0M368.4 322.3h0M432.9 543.5h0M334.9 561.4h0M440.8 344.5h0M473.3 523.7h0M546.6 389.0h0M347.0 557.5h0M554.2 396.5h0M582.2 426.9h0M515.8 509.3h0M465.3 532.6h0M269.4 580.7h0M508.5 464.3h0M574.9 410.4h0M271.0 580.3h0M411.6 335.2h0M510.6 448.6h0M449.4 387.9h0M514.9 479.1h0M455.8 531.9h0M543.2 386.9h0M355.4 554.7h0M562.9 403.3h0M305.8 570.6h0M491.4 363.3h0M487.6 502.7h0M513.7 509.9h0M548.2 495.5h0M315.7 309.0h0M413.3 371.2h0M523.9 450.0h0M498.2 423.1h0M466.9 518.4h0M269.0 585.6h0M451.1 348.0h0M498.7 480.4h0M487.1 518.9h0M455.6 536.3h0M535.4 382.6h0M267.7 581.8h0M403.2 332.6h0M509.2 441.8h0M567.1 407.0h0M467.9 354.1h0M484.6 494.0h0M390.0 556.3h0M494.3 408.6h0M523.1 505.5h0M448.2 538.5h0M305.9 577.8h0M494.3 363.4h0M451.2 515.3h0M560.9 480.5h0M340.6 569.0h0M550.2 391.4h0M338.0 560.4h0M543.4 389.2h0M563.3 403.5h0M553.0 486.4h0M365.6 562.6h0M404.8 333.1h0M509.6 443.1h0M529.0 505.1h0M291.7 574.8h0M462.1 351.9h0M504.7 511.9h0M488.1 523.7h0M520.8 510.3h0M455.0 536.6h0M532.3 380.9h0M257.8 584.7h0M375.4 324.5h0M494.8 419.4h0M471.1 515.7h0M541.0 496.6h0M401.7 553.0h0M511.7 480.7h0M564.6 404.7h0M301.4 572.0h0M482.5 359.7h0M467.9 505.8h0M541.1 494.0h0M400.7 553.0h0M455.7 385.5h0M508.7 484.2h0M470.1 526.9h0M546.4 495.8h0M387.4 557.3h0M233.1 591.0h0M524.5 377.0h0M397.3 539.6h0M542.3 498.3h0M372.2 548.9h0M269.7 581.2h0M278.0 578.8h0M429.9 340.9h0M508.8 463.4h0M462.2 527.0h0M555.1 489.4h0M360.8 564.3h0M279.4 577.9h0M507.9 465.8h0M464.9 526.3h0M552.0 491.6h0M258.1 583.9h0M376.1 324.8h0M495.4 420.0h0M470.3 516.2h0M542.1 496.0h0M462.9 529.3h0M246.0 587.3h0M339.8 315.1h0M454.7 390.7h0M511.6 483.3h0M464.1 529.2h0M510.4 447.0h0M435.7 543.0h0M271.0 585.5h0M358.4 553.7h0M565.7 405.7h0M476.6 357.3h0M475.3 501.0h0M530.4 499.9h0M376.5 324.5h0M398.1 554.0h0M331.3 342.4h0M452.4 383.8h0M511.0 481.5h0M464.6 528.8h0M553.3 491.3h0M366.7 562.8h0M576.8 412.4h0M265.5 581.8h0M397.0 330.8h0M391.6 555.6h0M487.4 403.7h0M367.3 322.0h0M487.7 412.9h0M480.0 510.0h0M527.4 503.8h0M428.1 339.7h0M329.7 312.5h0M441.7 536.1h0M292.6 580.7h0M466.3 352.6h0M512.6 508.5h0M471.6 530.0h0M545.8 496.9h0M530.7 501.7h0M257.2 588.3h0M375.2 324.1h0M471.6 515.5h0M540.4 496.9h0M493.2 407.8h0M469.5 514.4h0M542.4 495.3h0M454.5 384.9h0M509.6 483.2h0M468.1 527.6h0M549.0 494.1h0M379.7 559.4h0M521.6 467.0h0M437.1 537.3h0M578.6 469.1h0M438.8 343.2h0M471.4 524.2h0M543.8 496.8h0M481.2 523.0h0M530.6 504.7h0M430.7 544.5h0M584.3 464.0h0M259.8 587.8h0M583.1 420.2h0M247.3 586.9h0M453.4 532.3h0M591.0 441.4h0M453.5 384.4h0M551.0 492.8h0M357.8 319.8h0M478.0 405.2h0M491.1 502.2h0M508.0 512.7h0M482.1 526.3h0M530.5 505.5h0M431.1 544.5h0M260.4 587.7h0M384.5 326.7h0M501.0 426.7h0M551.8 490.1h0M542.4 495.8h0M453.2 384.2h0M510.5 482.1h0M551.7 492.4h0M255.6 584.6h0M368.9 322.8h0M489.4 414.2h0M478.0 511.3h0M495.9 420.7h0M469.8 516.6h0M590.3 436.3h0M514.8 476.3h0M563.8 483.6h0M454.6 349.2h0M496.3 483.3h0M492.5 516.9h0M511.3 513.8h0M476.2 529.0h0M539.6 500.7h0M406.9 551.8h0M591.1 444.8h0M340.4 345.3h0M466.7 391.2h0M499.8 493.0h0M490.0 519.7h0M516.3 511.8h0M433.8 342.2h0M507.6 466.5h0M465.7 526.0h0M551.1 492.2h0M480.5 407.0h0M545.7 497.0h0M396.3 554.5h0M354.9 349.9h0M486.2 402.9h0M478.6 508.8h0M528.8 502.6h0M434.0 543.1h0M582.3 466.6h0M267.5 586.2h0M475.2 501.0h0M374.7 324.0h0M494.2 418.8h0M472.0 515.2h0M539.7 497.3h0M405.3 551.9h0M463.8 389.7h0M467.1 352.9h0M445.7 386.0h0M426.9 545.4h0M586.0 460.9h0M252.7 589.2h0M464.8 532.8h0M554.5 491.5h0M363.4 563.8h0M574.2 409.7h0M416.7 336.8h0M510.7 452.7h0M454.5 528.5h0M563.1 483.2h0M483.0 520.4h0M343.8 346.3h0M471.6 393.9h0M495.1 497.0h0M499.5 515.9h0M499.1 519.5h0M501.1 519.1h0M504.6 517.7h0M490.5 523.6h0M516.9 512.2h0M437.4 343.4h0M469.3 524.9h0M546.6 495.1h0M386.5 557.4h0M587.9 428.4h0M299.2 579.0h0M560.2 483.7h0M326.4 564.0h0M527.0 379.9h0M392.5 541.7h0M584.4 433.2h0M463.2 395.6h0M479.2 524.1h0M588.0 457.2h0M244.4 590.8h0M359.2 320.2h0M479.7 406.4h0M489.3 503.5h0M494.8 409.0h0M467.3 515.7h0M545.5 493.5h0M389.0 556.5h0M501.0 414.0h0M556.6 486.3h0M486.8 492.2h0M511.0 509.2h0M474.9 528.8h0M541.2 499.6h0M402.4 553.1h0M271.5 580.1h0M413.0 335.6h0M444.4 345.7h0M502.8 475.1h0M477.8 522.2h0M534.9 502.0h0M419.3 548.0h0M588.9 454.8h0M240.1 591.6h0M322.1 310.3h0M425.3 376.4h0M523.6 459.7h0M429.9 538.9h0M398.8 330.8h0M339.3 569.6h0M341.9 559.1h0M548.3 392.4h0M458.0 511.7h0M553.6 486.0h0M415.9 336.5h0M299.7 572.4h0M417.0 548.2h0M589.3 452.9h0M237.9 591.9h0M314.8 308.6h0M411.6 370.6h0M523.7 448.6h0M425.5 539.0h0M306.9 306.8h0M395.5 364.2h0M519.3 435.6h0M430.4 535.4h0M581.0 463.8h0M486.4 492.5h0M511.6 508.9h0M397.4 554.5h0M227.5 593.0h0M447.3 381.4h0M561.9 485.1h0M548.5 392.6h0M343.1 559.0h0M549.8 393.3h0M339.9 560.0h0M545.9 390.8h0M321.2 566.0h0M518.8 375.7h0M409.2 535.0h0M251.0 588.4h0M503.9 514.4h0M464.4 533.4h0M555.2 491.1h0M361.0 564.4h0M430.8 341.2h0M462.9 526.8h0M554.4 489.9h0M574.0 409.5h0M273.6 579.5h0M418.6 337.3h0M562.4 483.7h0M348.6 557.0h0M556.0 397.8h0M324.2 565.0h0M523.7 378.1h0M399.3 539.0h0M585.3 438.7h0M408.8 535.0h0M361.8 564.2h0M426.1 339.7h0M509.7 460.3h0M453.1 514.4h0M346.9 567.4h0M514.0 373.4h0M418.3 531.2h0M582.8 454.0h0M260.9 586.7h0M385.4 327.1h0M501.6 427.5h0M462.3 521.2h0M552.9 489.5h0M367.2 562.5h0M577.2 412.8h0M264.6 582.1h0M394.4 330.0h0M560.0 484.7h0M555.7 394.9h0M324.0 564.8h0M523.3 378.0h0M400.3 538.6h0M585.4 439.5h0M459.3 393.4h0M472.1 526.6h0M543.9 497.4h0M461.4 388.4h0M480.1 523.4h0M426.3 545.9h0M576.5 473.7h0M289.2 581.6h0M458.8 349.9h0M497.8 519.7h0M503.3 518.1h0M493.0 522.5h0M543.1 498.7h0M328.5 341.6h0M455.0 385.1h0M468.9 527.3h0M548.0 494.8h0M586.3 425.2h0M547.1 493.1h0M308.8 307.3h0M399.4 365.7h0M520.8 438.8h0M582.3 462.0h0M265.8 586.2h0M436.4 343.0h0M313.7 308.5h0M380.6 558.9h0M324.1 311.1h0M429.0 378.0h0M523.0 462.7h0M432.5 538.4h0M581.2 465.4h0M464.1 352.7h0M488.3 491.0h0M508.3 510.4h0M480.7 526.6h0M532.6 504.3h0M425.6 546.2h0M249.9 589.8h0M353.0 318.2h0M472.3 401.3h0M497.0 497.5h0M496.5 517.5h0M447.7 517.3h0M564.4 477.7h0M534.3 382.1h0M376.0 547.5h0M578.2 419.9h0M392.1 329.3h0M505.2 432.9h0M558.5 485.7h0M486.3 505.7h0M496.5 483.0h0M542.4 499.1h0M326.0 340.8h0M443.2 379.5h0M516.2 474.1h0M451.2 533.0h0M521.1 375.3h0M404.0 536.9h0M248.2 588.7h0M465.1 396.8h0M503.6 491.8h0M482.7 522.8h0M528.4 505.9h0M436.2 542.8h0M581.1 468.4h0M272.1 585.3h0M416.6 336.1h0M583.0 453.6h0M260.2 586.8h0M383.5 326.5h0M463.9 520.2h0M550.9 490.7h0M481.0 407.4h0M487.8 504.6h0M585.0 422.9h0M326.5 311.7h0M433.3 380.0h0M521.9 466.1h0M436.0 537.6h0M579.2 468.3h0M278.4 583.7h0M432.8 341.2h0M465.2 526.1h0M362.7 320.7h0M485.4 506.3h0M518.3 508.1h0M327.8 563.6h0M529.1 381.0h0M388.0 543.4h0M583.3 429.6h0M353.3 318.5h0M472.8 401.6h0M496.5 497.9h0M497.5 517.1h0M503.0 517.8h0M493.5 522.3h0M511.6 514.6h0M475.8 529.2h0M540.2 500.4h0M457.4 386.3h0M507.5 485.5h0M484.8 410.4h0M483.5 507.6h0M521.5 506.6h0M285.7 582.3h0M450.6 347.1h0M327.1 572.9h0M531.5 380.5h0M382.3 545.3h0M581.2 424.9h0M255.7 585.3h0M485.3 506.4h0M518.4 508.1h0M342.8 569.1h0M330.5 562.7h0M533.1 383.2h0M379.5 546.5h0M378.0 325.3h0M468.5 517.3h0M544.7 494.5h0M554.9 485.1h0M359.7 564.2h0M570.9 406.7h0M446.4 381.0h0M571.1 478.8h0M308.5 577.2h0M499.3 365.5h0M443.3 519.3h0M568.2 474.2h0M316.2 574.9h0M513.1 371.6h0M419.6 530.4h0M582.3 455.0h0M263.0 586.3h0M391.4 328.8h0M539.1 497.6h0M285.3 301.6h0M345.0 346.7h0M473.3 394.9h0M493.3 498.4h0M502.9 514.5h0M471.5 530.8h0M367.8 354.2h0M500.2 413.3h0M459.7 520.0h0M555.1 487.3h0M571.3 407.1h0M546.3 495.3h0M523.8 376.6h0M398.7 539.0h0M585.2 438.2h0M281.9 577.7h0M439.4 344.0h0M505.4 471.0h0M543.5 497.0h0M395.3 555.0h0M335.2 343.6h0M458.7 387.0h0M506.5 486.6h0M475.2 525.1h0M539.4 499.9h0M342.2 345.8h0M469.3 392.6h0M497.4 495.1h0M495.0 517.7h0M507.4 515.9h0M484.5 525.8h0M527.0 507.4h0M539.1 499.6h0M285.7 301.7h0M567.2 475.1h0M319.6 574.1h0M519.0 374.4h0M408.3 535.2h0M585.0 445.9h0M250.6 588.4h0M354.8 318.8h0M474.5 402.8h0M494.8 499.3h0M500.9 515.7h0M496.5 520.6h0M506.0 517.0h0M319.7 574.6h0M519.5 374.5h0M407.2 535.6h0M585.1 445.1h0M249.9 588.5h0M352.7 318.2h0M495.8 517.8h0M508.7 369.5h0M427.6 526.9h0M578.9 461.5h0M277.1 583.5h0M429.1 340.1h0M508.8 462.7h0M461.9 527.0h0M493.0 486.3h0M499.1 514.2h0M500.8 519.2h0M498.0 520.5h0M487.6 412.7h0M438.6 541.7h0M433.7 341.5h0M550.6 492.5h0M374.5 560.7h0M582.1 418.7h0M352.7 318.4h0M502.5 366.8h0M438.2 521.9h0M301.9 578.1h0M486.0 360.1h0M547.4 490.1h0M382.6 558.1h0M313.8 567.9h0M506.0 369.7h0M455.2 348.8h0M493.9 516.3h0M508.8 514.9h0M531.7 504.9h0M254.3 588.9h0M496.3 482.9h0M492.2 516.9h0M511.7 513.6h0M475.3 529.3h0M329.0 341.7h0M513.4 478.3h0M322.9 565.1h0M521.4 377.0h0M404.0 537.2h0M346.4 316.6h0M357.9 319.5h0M583.9 464.6h0M502.2 428.4h0M412.2 335.4h0M281.5 577.8h0M483.7 401.2h0M483.2 359.0h0M542.7 493.0h0M485.0 521.6h0M524.6 507.8h0M445.5 539.7h0M574.3 475.9h0M297.4 579.8h0M476.9 356.5h0M252.0 589.3h0M489.1 503.7h0M511.8 511.1h0M474.1 529.4h0M443.6 379.7h0M451.8 532.8h0M567.0 481.0h0M500.4 513.7h0M488.3 524.4h0M565.2 483.9h0M263.5 583.0h0M346.1 567.6h0M556.9 395.8h0M410.9 534.3h0M360.4 320.2h0M395.8 364.3h0M519.4 435.8h0M430.2 535.5h0M411.8 334.7h0M498.2 519.5h0M502.7 518.4h0M494.2 522.1h0M510.4 515.2h0M536.4 502.4h0M415.6 549.2h0M235.5 592.4h0M520.5 507.1h0M490.7 523.0h0M516.4 512.4h0M465.1 533.1h0M554.4 491.7h0M363.8 563.7h0M271.8 580.1h0M569.8 409.6h0M287.1 576.2h0M487.9 518.6h0M561.9 486.4h0M339.7 569.8h0M549.3 390.6h0M340.3 559.6h0M546.3 391.1h0M348.6 557.2h0M489.6 489.5h0M454.6 513.4h0M557.4 483.2h0M352.0 566.1h0M462.8 509.0h0M547.8 489.9h0M426.8 377.0h0M403.8 332.3h0M535.9 497.0h0M414.9 548.8h0M589.8 451.2h0M235.6 592.3h0M581.0 463.7h0M488.1 523.7h0M377.2 547.1h0M262.0 583.4h0M387.5 328.0h0M502.9 429.2h0M460.6 522.2h0M523.3 508.5h0M307.5 577.5h0M497.4 364.7h0M446.4 517.8h0M565.5 476.6h0M325.3 572.7h0M528.4 379.0h0M388.9 542.8h0M578.3 471.7h0M282.6 583.1h0M536.8 500.9h0M290.3 581.0h0M461.1 350.8h0M503.5 512.4h0M572.7 408.2h0M448.4 538.2h0M571.6 478.2h0M306.8 577.6h0M366.2 551.0h0M406.1 333.0h0M458.8 350.7h0M498.9 519.2h0M501.3 519.0h0M519.4 511.0h0M343.2 558.7h0M517.1 374.8h0M412.5 533.7h0M584.4 449.3h0M364.9 321.4h0M485.5 410.9h0M482.7 508.2h0M522.9 506.0h0M497.8 364.8h0M445.8 518.1h0M566.0 476.2h0M525.6 377.6h0M584.8 435.2h0M461.3 394.5h0M506.8 488.6h0M496.6 364.3h0M564.3 477.7h0M534.5 382.2h0M375.5 547.7h0M577.9 419.5h0M264.4 582.7h0M394.2 329.9h0M521.3 376.9h0M404.4 537.0h0M481.5 523.2h0M530.2 505.0h0M431.6 544.2h0M261.7 587.4h0M351.4 348.8h0M481.9 400.1h0M483.9 505.3h0M520.1 506.9h0M497.0 482.2h0M408.9 369.4h0M575.8 472.4h0M291.2 581.0h0M463.1 351.5h0M488.9 490.1h0M507.0 510.9h0M483.5 525.5h0M528.3 506.6h0M436.8 542.7h0M273.6 585.0h0M420.4 337.3h0M510.3 455.7h0M561.2 484.7h0M524.4 507.5h0M479.3 357.4h0M307.7 306.8h0M510.6 514.1h0M370.3 355.1h0M502.4 415.2h0M456.3 521.8h0M558.9 484.6h0M315.0 567.5h0M508.2 370.7h0M428.9 526.5h0M279.5 583.0h0M435.1 342.0h0M506.9 467.6h0M467.4 525.5h0M549.0 493.6h0M242.3 588.3h0M328.1 312.1h0M436.0 381.3h0M521.1 468.3h0M438.8 536.9h0M577.5 470.5h0M448.7 346.5h0M484.2 519.9h0M372.5 561.4h0M580.9 417.0h0M253.7 585.1h0M483.9 409.6h0M456.3 535.8h0M445.6 346.1h0M532.6 503.2h0M249.2 589.9h0M351.0 317.6h0M469.8 399.7h0M499.4 495.6h0M491.7 519.4h0M513.5 513.1h0M388.0 557.2h0M588.4 429.5h0M344.3 568.3h0M526.5 379.6h0M476.0 525.2h0M538.4 500.5h0M505.2 511.7h0M511.6 370.8h0M267.3 585.4h0M403.3 332.2h0M482.4 359.6h0M474.5 529.2h0M541.9 499.3h0M591.0 439.7h0M442.8 379.3h0M516.5 473.7h0M318.9 574.7h0M518.1 373.9h0M410.0 534.5h0M584.7 447.3h0M251.9 588.2h0M490.0 503.0h0M510.0 511.8h0M477.8 528.0h0M413.9 549.7h0M483.5 359.1h0M394.8 554.7h0M390.7 542.1h0M300.0 305.0h0M510.7 423.4h0M443.7 528.5h0M571.3 474.5h0M562.3 479.4h0M336.2 570.1h0M544.3 387.8h0M352.6 555.6h0M560.2 401.0h0M313.1 568.4h0M505.0 369.2h0M434.4 523.9h0M575.0 466.9h0M478.7 527.3h0M410.4 370.1h0M380.4 325.6h0M498.4 423.5h0M547.4 492.9h0M407.2 368.7h0M523.0 445.0h0M478.5 405.5h0M490.6 502.5h0M508.9 512.3h0M246.8 590.4h0M537.1 383.5h0M369.6 549.8h0M274.4 579.8h0M420.7 337.9h0M510.5 455.9h0M456.1 528.3h0M340.3 569.5h0M338.6 560.2h0M544.2 389.7h0M353.8 555.5h0M561.5 402.0h0M498.8 366.4h0M319.8 574.0h0M476.4 529.0h0M591.0 445.4h0M495.0 497.1h0M499.7 515.8h0M502.0 518.8h0M495.7 521.5h0M507.7 516.4h0M465.5 528.5h0M376.9 325.0h0M353.9 318.4h0M473.4 402.1h0M495.9 498.4h0M498.7 516.6h0M503.1 518.3h0M511.8 514.6h0M449.4 382.4h0M512.9 479.1h0M459.9 530.3h0M558.6 487.6h0M497.0 365.7h0M447.5 517.5h0M564.6 477.5h0M328.5 572.0h0M378.3 546.7h0M579.4 421.8h0M382.9 326.7h0M374.2 560.6h0M355.4 319.1h0M475.2 403.2h0M494.0 499.9h0M502.4 515.1h0M337.6 344.4h0M462.4 388.9h0M503.5 489.6h0M400.3 331.2h0M508.2 439.5h0M454.5 526.5h0M487.6 520.9h0M371.8 549.0h0M270.4 581.0h0M410.3 334.7h0M510.4 447.5h0M464.3 526.4h0M368.3 562.3h0M578.0 413.7h0M554.8 488.2h0M289.9 574.9h0M493.7 486.0h0M506.7 516.8h0M486.2 525.2h0M573.0 477.2h0M302.0 578.8h0M486.4 360.2h0M548.1 489.6h0M433.8 380.2h0M521.8 466.5h0M436.5 537.4h0M578.9 468.7h0M279.5 583.5h0M506.8 467.8h0M553.6 396.1h0M330.3 563.1h0M379.9 546.4h0M580.3 423.1h0M552.7 491.7h0M261.5 582.9h0M385.8 327.6h0M502.0 427.8h0M553.5 489.0h0M406.8 333.7h0M513.1 510.5h0M369.9 354.9h0M456.8 521.6h0M309.5 569.2h0M498.2 366.2h0M445.6 518.4h0M459.8 393.6h0M562.1 484.9h0M551.1 394.3h0M336.7 561.1h0M541.8 388.2h0M359.5 553.6h0M295.5 573.7h0M470.3 355.0h0M482.1 495.9h0M519.2 505.5h0M456.6 535.4h0M563.7 484.9h0M335.3 570.3h0M555.7 484.5h0M357.1 564.8h0M495.1 515.9h0M506.6 515.9h0M524.5 508.6h0M573.8 476.4h0M468.4 515.0h0M473.7 395.1h0M492.9 498.7h0M417.4 337.0h0M510.7 453.3h0M335.9 570.6h0M544.1 387.5h0M353.1 555.4h0M560.7 401.5h0M311.7 568.8h0M502.5 368.0h0M572.0 470.4h0M253.3 585.3h0M486.1 505.8h0M517.1 508.7h0M473.1 355.1h0M478.9 498.2h0M524.6 502.8h0M374.9 324.5h0M494.5 419.0h0M488.7 404.6h0M475.5 510.7h0M533.7 500.1h0M243.6 590.9h0M333.4 313.1h0M444.7 385.6h0M517.5 475.3h0M449.1 534.0h0M569.5 478.8h0M313.8 575.9h0M407.1 551.7h0M341.3 345.5h0M468.0 391.9h0M498.6 494.0h0M492.4 518.8h0M512.1 513.8h0M400.4 553.7h0M325.6 340.7h0M516.6 473.5h0M450.3 533.2h0M413.6 533.0h0M492.3 363.7h0M462.4 509.2h0M328.6 312.2h0M436.9 381.7h0M520.8 469.0h0M439.7 536.6h0M576.9 471.2h0M382.5 545.2h0M581.3 425.1h0M255.5 585.4h0M530.3 502.3h0M430.3 544.3h0M259.4 587.9h0M326.4 311.6h0M431.4 340.8h0M508.1 464.6h0M506.5 435.2h0M389.0 543.0h0M583.6 430.4h0M492.5 519.0h0M591.0 440.3h0M504.4 491.0h0M531.2 504.5h0M505.1 417.7h0M452.3 524.0h0M472.8 355.9h0M523.6 503.3h0M446.1 538.9h0M506.8 486.2h0M474.5 525.4h0M548.6 494.4h0M346.4 557.7h0M330.6 563.0h0M579.8 422.2h0M259.4 584.2h0M380.0 325.8h0M310.6 307.7h0M403.2 367.1h0M522.0 441.8h0M426.8 537.6h0M583.1 460.8h0M262.4 586.9h0M466.5 353.6h0M350.9 348.6h0M481.2 399.7h0M484.7 504.7h0M518.8 507.5h0M443.0 345.2h0M456.3 521.8h0M507.5 370.4h0M500.3 425.8h0M581.8 418.3h0M432.1 341.7h0M553.0 490.9h0M264.2 582.2h0M393.2 329.7h0M512.1 372.5h0M421.8 529.7h0M266.2 585.7h0M522.5 377.5h0M404.8 552.3h0M349.9 348.3h0M479.9 398.8h0M486.2 503.6h0M516.1 508.8h0M573.1 408.6h0M276.3 578.8h0M425.3 339.5h0M298.2 578.9h0M419.7 547.3h0M433.0 379.9h0M461.2 351.6h0M578.5 414.2h0M260.6 583.2h0M436.4 381.5h0M457.3 535.7h0M563.2 485.4h0M508.1 516.2h0M483.2 526.4h0M269.4 585.9h0M409.3 333.9h0M452.0 348.3h0M559.5 488.1h0M510.0 371.5h0M425.8 527.9h0M579.8 460.0h0M273.3 584.3h0M455.9 528.3h0M553.7 396.0h0M591.0 444.0h0M499.5 493.3h0M372.2 561.5h0M580.7 416.8h0M254.2 585.0h0M364.9 321.7h0M523.0 505.9h0M275.5 579.0h0M423.4 338.9h0M353.6 349.5h0M484.6 401.8h0M480.6 507.5h0M525.7 504.2h0M454.6 348.5h0M510.2 514.3h0M474.9 356.7h0M580.4 469.0h0M423.7 338.3h0M401.3 331.6h0M559.1 400.2h0M425.3 528.1h0M272.4 584.4h0M411.9 533.9h0M584.5 448.8h0M253.4 588.0h0M519.5 507.6h0M296.3 573.4h0M472.1 355.6h0M570.9 478.9h0M309.3 577.1h0M500.8 366.1h0M570.1 472.3h0M309.6 576.4h0M501.1 366.3h0M440.5 520.8h0M570.5 471.9h0M308.0 576.7h0M498.1 365.1h0M566.5 475.8h0M322.0 573.5h0M523.1 376.4h0M479.8 497.7h0M447.4 538.5h0M303.8 578.3h0M490.2 361.7h0M273.8 579.5h0M328.1 563.8h0M387.0 543.7h0M436.2 523.1h0M573.8 468.4h0M296.3 579.4h0M474.2 355.6h0M526.6 501.8h0M438.9 541.3h0M470.9 400.4h0M493.9 518.5h0M479.9 527.6h0M243.2 591.0h0M332.1 312.8h0M446.3 534.8h0M317.7 567.0h0M420.3 530.3h0M263.9 586.1h0M317.7 566.7h0M419.0 530.9h0M582.6 454.6h0M261.9 586.5h0M359.5 564.5h0M282.8 577.0h0M331.0 342.3h0M451.8 383.6h0M355.1 350.0h0M486.4 403.0h0M311.6 308.0h0M405.3 368.0h0M522.6 443.5h0M426.2 538.1h0M312.0 307.9h0M405.9 368.2h0M522.7 444.0h0M583.6 460.2h0M260.7 587.3h0M385.0 326.9h0M462.7 521.0h0M552.4 489.8h0M368.6 562.1h0M386.4 327.7h0M363.6 563.5h0M467.6 506.0h0M399.3 553.4h0M365.3 353.3h0M497.7 411.2h0M463.3 518.0h0M550.7 490.3h0M478.8 405.7h0M509.5 512.1h0M535.3 502.9h0M418.5 548.4h0M418.1 373.3h0M524.1 453.9h0M251.0 585.9h0M474.9 403.0h0M501.8 515.3h0M494.7 521.3h0M509.3 515.6h0M520.3 509.5h0M415.1 336.3h0M510.7 451.4h0M478.4 511.1h0M530.0 502.4h0M305.3 306.2h0M517.7 432.7h0M537.9 501.6h0M364.0 352.9h0M496.4 410.2h0M465.1 516.9h0M324.7 311.2h0M430.0 378.5h0M522.8 463.4h0M433.2 538.2h0M580.8 466.0h0M462.5 521.1h0M262.9 582.6h0M389.8 328.7h0M470.6 355.1h0M519.7 505.2h0M579.7 470.1h0M277.6 584.1h0M509.1 462.3h0M476.4 528.9h0M411.8 370.6h0M398.4 365.3h0M520.5 437.9h0M428.8 536.4h0M492.2 363.6h0M464.6 507.8h0M545.4 491.4h0M588.3 429.7h0M449.1 525.7h0M452.1 383.7h0M464.2 528.9h0M505.7 470.4h0M308.6 576.6h0M567.9 474.4h0M317.0 574.6h0M514.6 372.3h0M495.6 515.7h0M505.7 516.3h0M567.1 482.4h0M475.3 523.0h0M478.1 509.1h0M529.6 502.2h0M583.5 465.0h0M458.4 523.7h0M389.3 556.2h0M458.0 520.9h0M557.0 486.0h0M297.2 572.8h0M478.4 498.7h0M441.9 540.3h0M287.9 581.9h0M279.5 583.7h0M363.5 352.7h0M495.8 409.8h0M465.9 516.5h0M406.7 368.5h0M522.9 444.6h0M500.7 426.3h0M258.7 588.0h0M379.5 325.3h0M297.5 579.4h0M318.9 309.8h0M419.5 373.8h0M524.1 454.9h0M504.4 431.5h0M299.2 572.2h0M478.0 358.0h0M473.6 502.1h0M532.9 498.6h0M587.6 457.5h0M455.4 391.2h0M511.1 483.9h0M483.3 507.7h0M521.9 506.4h0M451.2 537.5h0M315.5 575.6h0M512.1 371.1h0M421.4 529.6h0M541.3 387.9h0M360.5 553.2h0M293.1 574.4h0M465.2 353.1h0M487.2 491.8h0M479.3 508.3h0M527.8 503.2h0M443.6 539.8h0M466.5 352.7h0M470.9 530.3h0M379.9 358.4h0M510.3 423.0h0M444.3 528.2h0M570.9 474.9h0M321.4 573.6h0M462.2 395.0h0M577.3 468.3h0M284.8 582.2h0M500.3 478.2h0M338.9 560.4h0M544.6 390.0h0M352.7 555.9h0M312.7 568.5h0M435.7 523.3h0M574.1 468.0h0M295.0 579.6h0M471.5 354.6h0M480.6 496.9h0M521.6 504.3h0M450.9 537.3h0M569.4 480.3h0M510.8 370.5h0M423.7 528.6h0M580.7 458.4h0M269.8 584.9h0M472.0 503.0h0M313.4 308.2h0M437.5 382.0h0M520.5 469.5h0M440.3 536.4h0M576.4 471.8h0M289.0 581.5h0M458.1 349.7h0M498.6 514.4h0M500.0 518.8h0M499.2 519.9h0M479.1 521.7h0M463.5 395.8h0M493.7 518.3h0M534.9 503.2h0M240.4 591.5h0M545.8 491.1h0M387.1 556.8h0M529.2 500.5h0M432.3 543.4h0M394.5 329.6h0M559.7 485.0h0M581.7 456.3h0M548.8 390.4h0M501.8 427.5h0M401.0 332.0h0M354.4 555.0h0M308.4 569.8h0M368.1 550.3h0M277.1 579.1h0M496.6 364.3h0M578.5 420.3h0M438.2 541.5h0M431.7 340.8h0M418.2 336.7h0M371.0 561.2h0M257.3 584.1h0M480.8 399.4h0M485.1 504.4h0M530.9 380.2h0M254.3 585.8h0M365.4 321.8h0M302.7 578.6h0M372.7 560.7h0M413.1 533.2h0M488.2 413.2h0M479.5 510.3h0M435.6 542.6h0M485.0 521.6h0M534.4 497.7h0M418.8 547.6h0M425.8 376.6h0M394.0 541.1h0M470.1 393.0h0M496.6 495.7h0M517.6 511.9h0M462.4 534.1h0M475.6 357.0h0M476.4 500.2h0M433.7 543.0h0M582.4 466.4h0M509.0 441.7h0M551.1 487.7h0M371.0 323.4h0M475.7 512.8h0M241.8 591.3h0M435.2 380.9h0M578.1 469.7h0M388.3 361.5h0M515.8 429.8h0M497.7 422.6h0M299.1 304.9h0M378.4 357.9h0M509.2 421.8h0M446.0 527.3h0M569.3 476.3h0M434.6 341.9h0M336.5 314.2h0M449.7 388.1h0M360.1 320.2h0M367.3 354.0h0M499.7 412.9h0M460.4 519.6h0M554.2 487.9h0M362.8 563.6h0M573.6 409.2h0M274.7 579.3h0M421.2 338.2h0M510.5 456.3h0M550.9 391.7h0M336.3 560.9h0M462.6 352.1h0M489.7 489.7h0M447.7 539.1h0M572.4 477.7h0M490.5 361.8h0M456.7 512.2h0M555.0 485.0h0M359.5 564.2h0M283.1 576.9h0M442.1 345.0h0M394.1 363.7h0M518.7 434.5h0M431.3 535.0h0M580.5 464.5h0M418.3 336.7h0M455.5 528.3h0M479.8 521.5h0M361.1 320.3h0M411.4 334.6h0M556.6 395.6h0M519.5 376.1h0M340.9 559.4h0M547.0 391.6h0M253.5 586.0h0M362.9 321.1h0M400.7 538.5h0M585.4 439.8h0M558.4 487.7h0M508.3 439.7h0M322.0 565.7h0M520.1 376.3h0M406.6 536.1h0M585.2 444.5h0M249.2 588.6h0M350.5 317.6h0M490.5 519.8h0M467.0 532.3h0M371.2 561.8h0M245.0 590.7h0M337.9 314.3h0M451.7 389.2h0M559.4 487.1h0M510.6 371.8h0M424.6 528.4h0M580.4 459.1h0M482.8 495.5h0M518.1 506.0h0M561.0 486.9h0M316.6 309.2h0M415.1 372.0h0M524.0 451.4h0M315.3 308.9h0M412.6 370.9h0M523.8 449.4h0M568.4 408.2h0M331.0 571.6h0M420.2 337.8h0M510.5 455.5h0M531.6 382.3h0M367.6 322.4h0M479.5 510.3h0M414.6 335.5h0M306.3 570.5h0M492.4 363.7h0M454.4 513.8h0M305.8 570.3h0M507.7 465.8h0M254.5 584.9h0M486.4 411.6h0M481.6 508.9h0M524.8 505.0h0M293.9 580.5h0M469.3 353.7h0M459.6 534.3h0M483.5 505.6h0M380.1 546.3h0M470.6 516.0h0M399.7 553.5h0M450.1 382.8h0M512.4 479.7h0M442.8 540.0h0M362.5 564.0h0M341.8 569.1h0M537.7 385.8h0M422.2 338.4h0M532.9 383.1h0M479.6 398.7h0M486.5 503.4h0M515.6 509.0h0M553.6 492.1h0M366.0 563.1h0M576.4 411.8h0M266.8 581.5h0M400.5 331.8h0M508.5 439.7h0M504.9 369.1h0M574.8 467.2h0M292.5 580.2h0M480.3 507.7h0M526.1 504.0h0M440.8 540.9h0M447.7 346.1h0M429.7 340.2h0M554.7 489.7h0M561.6 399.1h0M308.1 569.6h0M495.7 365.1h0M492.2 407.1h0M470.8 513.6h0M455.1 385.2h0M509.2 483.7h0M383.5 558.3h0M394.9 364.0h0M458.2 511.6h0M364.5 562.9h0M376.0 560.3h0M390.7 362.4h0M279.0 583.4h0M505.0 490.4h0M470.0 527.3h0M305.9 577.5h0M341.3 568.8h0M513.6 512.8h0M298.5 304.8h0M376.9 357.4h0M508.0 420.6h0M447.8 526.4h0M567.7 477.8h0M491.0 502.3h0M481.7 526.5h0M475.5 396.2h0M491.1 500.1h0M507.3 512.7h0M273.2 585.0h0M339.6 559.9h0M545.4 390.5h0M350.9 556.5h0M558.5 399.6h0M395.5 329.9h0M560.2 487.6h0M345.2 568.5h0M472.4 530.3h0M345.0 346.7h0M493.4 498.3h0M393.0 555.8h0M495.4 517.6h0M508.4 370.7h0M578.4 462.3h0M574.8 471.0h0M293.8 580.2h0M469.0 353.6h0M517.3 506.3h0M531.8 382.4h0M377.8 357.7h0M508.7 421.3h0M446.7 526.9h0M568.7 476.9h0M397.7 330.6h0M487.3 361.6h0M461.6 509.7h0M549.3 488.9h0M376.8 559.6h0M506.8 512.9h0M483.9 525.6h0M446.2 346.4h0M501.8 476.5h0M528.5 503.2h0M434.9 542.9h0M452.3 348.4h0M479.1 527.2h0M523.6 459.7h0M321.6 310.2h0M523.7 458.9h0M429.3 539.0h0M582.8 462.9h0M251.0 586.8h0M365.8 321.7h0M444.0 539.6h0M523.1 445.2h0M249.6 586.3h0M491.9 519.3h0M347.5 347.5h0M476.7 396.9h0M489.8 501.1h0M509.7 511.6h0M416.1 549.1h0M399.3 365.6h0M569.2 405.1h0M451.9 348.4h0M257.6 587.3h0M471.1 355.3h0M481.3 496.6h0M520.6 504.8h0M367.9 322.5h0M488.4 413.4h0M489.6 489.8h0M505.8 511.5h0M500.0 495.0h0M450.3 347.8h0M510.4 370.3h0M483.9 494.3h0M516.1 506.9h0M463.6 532.9h0M555.8 490.5h0M570.6 406.3h0M263.1 587.1h0M392.0 328.8h0M557.7 483.1h0M556.4 484.0h0M463.9 532.8h0M280.5 577.6h0M435.0 537.8h0M426.8 339.3h0M509.3 460.9h0M464.0 351.8h0M587.7 457.9h0M339.8 314.7h0M511.8 483.2h0M554.4 490.6h0M351.7 555.9h0M405.9 536.4h0M487.3 521.0h0M325.3 573.3h0M378.3 325.0h0M496.9 421.8h0M480.5 497.2h0M450.3 537.5h0M440.8 343.9h0M503.8 473.7h0M541.9 495.6h0M546.7 391.3h0M392.0 541.9h0M584.3 432.8h0M255.9 588.6h0M534.1 500.4h0M440.3 536.5h0M493.7 485.7h0M507.4 516.5h0M523.4 508.0h0M494.9 363.6h0M474.1 402.5h0M495.2 499.0h0M543.7 498.3h0M333.1 343.0h0M475.8 500.6h0M431.6 543.6h0M521.2 504.5h0M451.9 537.0h0M578.8 470.9h0M464.6 390.0h0M501.7 491.3h0M500.2 365.8h0M441.9 520.1h0M569.3 473.0h0M312.1 575.8h0M525.1 508.3h0M444.6 540.1h0M575.0 475.2h0M294.7 580.4h0M408.6 535.1h0M355.5 318.9h0M561.0 401.7h0M311.0 569.1h0M501.2 367.5h0M515.0 372.5h0M565.9 476.4h0M324.1 573.0h0M526.5 378.0h0M466.4 397.5h0M296.1 580.1h0M437.1 342.6h0M374.9 356.7h0M506.4 419.0h0M450.3 525.1h0M565.3 479.8h0M266.5 586.4h0M410.9 334.5h0M510.3 448.0h0M441.7 520.4h0M569.6 472.9h0M311.2 576.0h0M504.2 367.6h0M294.7 579.7h0M470.7 354.3h0M481.5 496.2h0M520.3 504.9h0M454.1 536.2h0M566.2 482.9h0M250.4 587.0h0M528.1 505.6h0M332.0 562.3h0M535.2 384.4h0M265.3 582.5h0M437.1 542.4h0M410.9 534.3h0M396.2 330.5h0" stroke="#606060" stroke-width="6.3" stroke-linecap="round" fill="none"/>
<path d="M297.6 188.0h0M443.9 212.9h0M443.9 271.4h0M443.9 299.2h0M443.9 318.7h0M515.6 269.5h0M620.4 359.2h0M190.3 381.6h0M383.7 377.8h0M355.7 411.4h0M359.5 410.8h0M443.9 373.8h0M443.9 393.3h0M443.9 408.9h0M519.4 425.0h0M443.9 432.8h0M443.9 434.3h0M443.9 444.6h0M443.9 412.3h0M443.9 460.3h0M443.9 473.5h0M443.9 476.3h0M443.9 488.7h0M443.9 495.8h0M443.9 502.5h0M443.9 506.8h0M443.9 510.4h0M443.9 515.7h0M393.3 470.5h0M394.3 472.5h0M605.7 548.0h0M605.7 550.5h0M385.5 590.9h0M155.9 435.0h0M195.5 435.0h0M199.3 435.0h0M203.4 435.0h0M222.7 435.0h0M230.7 435.0h0M243.0 435.0h0M267.3 435.0h0M270.9 435.0h0M274.7 435.0h0M282.0 435.0h0M285.8 435.0h0M290.2 435.0h0M298.1 435.0h0M305.5 435.0h0M309.9 435.0h0M322.2 435.0h0M365.0 435.0h0M380.9 435.0h0M403.7 435.0h0M424.9 435.0h0M456.6 435.0h0M461.0 435.0h0M466.8 435.0h0M471.2 435.0h0M475.0 435.0h0" stroke="#606060" stroke-width="6" stroke-linecap="round" fill="none"/>
<rect x="201" y="275" width="15" height="15" rx="0" fill="#00f5a0" />
<rect x="440" y="415" width="14" height="14" rx="0" fill="#555555" />
<rect x="439" y="414" width="14" height="14" rx="0" fill="#fff870" />
<rect x="661.5" y="177.8" width="42.1" height="16.4" rx="0" fill="#e6e6e6" />
<text x="682.6" y="190.8" font-size="11.5" fill="#a9a9a9" font-weight="bold" stroke="#a9a9a9" stroke-width="0.3" text-anchor="middle" textLength="23.8" lengthAdjust="spacing" >0.60</text>
<rect x="662" y="198.1" width="40.7" height="481.9" rx="4" fill="#e6e6e6" />
<text x="682" y="217.1" font-size="10" fill="#a9a9a9" font-weight="bold" stroke="#a9a9a9" stroke-width="0.3" text-anchor="middle" >y</text>
<text x="682.4" y="228" font-size="9.5" fill="#a9a9a9" font-weight="bold" stroke="#a9a9a9" stroke-width="0.3" text-anchor="middle" textLength="26.8" lengthAdjust="spacing" >range</text>
<rect x="663.1" y="425.2" width="38.8" height="31.7" rx="0" fill="#cccccc" />
<rect x="663.1" y="425.2" width="38.8" height="2" rx="0" fill="#999" />
<rect x="663.1" y="454.9" width="38.8" height="2" rx="0" fill="#999" />
<rect x="152.5" y="685.1" width="41.7" height="16.2" rx="0" fill="#e6e6e6" />
<text x="173.9" y="697.6" font-size="12" fill="#a9a9a9" font-weight="bold" stroke="#a9a9a9" stroke-width="0.3" text-anchor="middle" textLength="28.4" lengthAdjust="spacing" >-1.80</text>
<rect x="198.5" y="685.5" width="413.5" height="15.1" rx="4" fill="#e6e6e6" />
<rect x="367.8" y="685.5" width="71.4" height="15.1" rx="0" fill="#cccccc" />
<rect x="367" y="685.5" width="2" height="15.1" rx="0" fill="#999" />
<rect x="438.5" y="685.5" width="2" height="15.1" rx="0" fill="#999" />
<text x="209.3" y="696.3" font-size="12" fill="#a9a9a9" font-weight="bold" stroke="#a9a9a9" stroke-width="0.3" textLength="41.8" lengthAdjust="spacing" >x range</text>
<rect x="615.8" y="685.7" width="41" height="15.1" rx="0" fill="#e6e6e6" />
<text x="636.8" y="697.6" font-size="12" fill="#a9a9a9" font-weight="bold" stroke="#a9a9a9" stroke-width="0.3" text-anchor="middle" textLength="22.8" lengthAdjust="spacing" >1.70</text>
<rect x="661.9" y="685.7" width="41.3" height="15.1" rx="0" fill="#e6e6e6" />
<text x="682.8" y="697.6" font-size="12" fill="#a9a9a9" font-weight="bold" stroke="#a9a9a9" stroke-width="0.3" text-anchor="middle" textLength="27.6" lengthAdjust="spacing" >-0.70</text>
<text x="156.2" y="717" font-size="11.6" fill="#9c9c9c" font-weight="bold" stroke="#9c9c9c" stroke-width="0.3" textLength="40.6" lengthAdjust="spacing" >x mean</text>
<text x="203.2" y="717" font-size="9.8" fill="#9c9c9c" font-weight="bold" stroke="#9c9c9c" stroke-width="0.3" textLength="41" lengthAdjust="spacing" >0.259383</text>
<text x="278.3" y="717" font-size="11.6" fill="#9c9c9c" font-weight="bold" stroke="#9c9c9c" stroke-width="0.3" textLength="40.3" lengthAdjust="spacing" >y mean</text>
<text x="326.2" y="717" font-size="9.8" fill="#9c9c9c" font-weight="bold" stroke="#9c9c9c" stroke-width="0.3" textLength="41" lengthAdjust="spacing" >0.077872</text>
<path d="M672.3 726.3A9 9 0 0 1 668.78 709.02" fill="none" stroke="#333333" stroke-width="2" stroke-linecap="butt"/>
<path d="M668.78 709.02A9 9 0 0 1 681.3 717.3" fill="none" stroke="#ffff55" stroke-width="2" stroke-linecap="butt"/>
<path d="M672.3 717.3L668.78 709.02" stroke="#ffff55" stroke-width="2"/>
<path d="M694.4 726.3A9 9 0 0 1 687.41 711.64" fill="none" stroke="#333333" stroke-width="2" stroke-linecap="butt"/>
<path d="M687.41 711.64A9 9 0 0 1 703.4 717.3" fill="none" stroke="#ffff55" stroke-width="2" stroke-linecap="butt"/>
<path d="M694.4 717.3L687.41 711.64" stroke="#ffff55" stroke-width="2"/>
<rect x="707.2" y="64.2" width="228.6" height="50.6" rx="4" fill="#999999" />
<text x="713.2" y="83.7" font-size="16" fill="#e6e6e6" font-weight="bold" stroke="#e6e6e6" stroke-width="0.3" textLength="54.1" lengthAdjust="spacing" >SYNTH</text>
<text x="765.5" y="102.8" font-size="12" fill="#e6e6e6" font-weight="bold" stroke="#e6e6e6" stroke-width="0.3" textLength="45.2" lengthAdjust="spacing" >Balance</text>
<path d="M824 105.77A12.2 12.2 0 1 1 836.2 105.77" fill="none" stroke="#e6e6e6" stroke-width="2" stroke-linecap="butt"/>
<path d="M830.1 83A12.2 12.2 0 0 1 837.44 85.46" fill="none" stroke="#f8f86c" stroke-width="2" stroke-linecap="butt"/>
<path d="M830.1 95.2L837.44 85.46" stroke="#e6e6e6" stroke-width="2"/>
<path d="M825.1 76.3H835L830.05 81.2Z" fill="#f8f86c"/>
<text x="865.7" y="103.7" font-size="12" fill="#e6e6e6" font-weight="bold" stroke="#e6e6e6" stroke-width="0.3" textLength="25.3" lengthAdjust="spacing" >Gain</text>
<path d="M906 105.57A12.2 12.2 0 1 1 918.2 105.57" fill="none" stroke="#e6e6e6" stroke-width="2" stroke-linecap="butt"/>
<path d="M906 105.57A12.2 12.2 0 0 1 900.17 97.54" fill="none" stroke="#f8f86c" stroke-width="2" stroke-linecap="butt"/>
<path d="M912.1 95L900.17 97.54" stroke="#e6e6e6" stroke-width="2"/>
<rect x="707.2" y="118.4" width="228.6" height="23.8" rx="4" fill="#999999" />
<text x="713.2" y="134.7" font-size="12" fill="#f8f86c" font-weight="bold" stroke="#f8f86c" stroke-width="0.3" textLength="34.8" lengthAdjust="spacing" >OSC 1</text>
<rect x="813.7" y="121.4" width="47" height="17.2" rx="0" fill="#fdfd7c" />
<text x="816" y="134.5" font-size="12" fill="#777777" font-weight="bold" stroke="#777777" stroke-width="0.3" >X</text>
<path d="M849.6 129H857.2L853.4 133.6Z" fill="#777777"/>
<rect x="865.7" y="121.4" width="66" height="17.2" rx="0" fill="#c8c8c8" />
<text x="868" y="134.5" font-size="12" fill="#f8f86c" font-weight="bold" stroke="#f8f86c" stroke-width="0.3" >Sinus</text>
<path d="M920 129H928.2L924.1 133.6Z" fill="#f8f86c"/>
<rect x="707.1" y="145.2" width="228.8" height="44.8" rx="4" fill="#b3b3b3" />
<text x="711.1" y="161.7" font-size="12" fill="#e0e0e0" font-weight="bold" stroke="#e0e0e0" stroke-width="0.3" textLength="31" lengthAdjust="spacing" >Scale</text>
<path d="M747.7 156H755.3L751.5 161.2Z" fill="#e8e8e8"/>
<rect x="758.9" y="148.4" width="172.2" height="17.4" rx="4" fill="#cccccc" />
<rect x="712.1" y="170.3" width="219.6" height="16.3" rx="4" fill="#cccccc" />
<rect x="861.2" y="149.2" width="18.6" height="15.7" rx="0" fill="#f5f5f5" />
<rect x="792.5" y="170.9" width="43.3" height="15.1" rx="0" fill="#f5f5f5" />
<text x="775.5" y="160.8" font-size="10.5" fill="#555555" font-weight="bold" stroke="#555555" stroke-width="0.3" >C4</text>
<text x="814.2" y="160.8" font-size="12" fill="#5a5a5a" font-weight="bold" stroke="#5a5a5a" stroke-width="0.3" textLength="46.2" lengthAdjust="spacing" >Octaves</text>
<text x="901.4" y="160.8" font-size="10.5" fill="#555555" font-weight="bold" stroke="#555555" stroke-width="0.3" >C6</text>
<text x="728.9" y="182" font-size="10.5" fill="#555555" font-weight="bold" stroke="#555555" stroke-width="0.3" >47</text>
<text x="815.2" y="182" font-size="12" fill="#5a5a5a" font-weight="bold" stroke="#5a5a5a" stroke-width="0.3" textLength="44.4" lengthAdjust="spacing" >Velocity</text>
<text x="892.4" y="182" font-size="10.5" fill="#555555" font-weight="bold" stroke="#555555" stroke-width="0.3" >71</text>
<rect x="707.1" y="193.2" width="166.6" height="55.3" rx="4" fill="#b3b3b3" />
<rect x="875.5" y="193.2" width="60.1" height="55.4" rx="4" fill="#b3b3b3" />
<rect x="707.5" y="251.7" width="166" height="93.3" rx="4" fill="#b3b3b3" />
<rect x="875.5" y="251.2" width="60.3" height="59.8" rx="4" fill="#b3b3b3" />
<rect x="875.4" y="316.2" width="60.1" height="45.2" rx="4" fill="#b3b3b3" />
<rect x="876.1" y="364.4" width="59.4" height="54.1" rx="4" fill="#b3b3b3" />
<rect x="707.2" y="350" width="166.3" height="67.8" rx="4" fill="#b3b3b3" />
<text x="714.9" y="206.6" font-size="9.7" fill="#5a5a5a" stroke="#5a5a5a" stroke-width="0.38" textLength="30.5" lengthAdjust="spacing" >Attack</text>
<text x="759" y="206.6" font-size="9.7" fill="#5a5a5a" stroke="#5a5a5a" stroke-width="0.38" textLength="28.6" lengthAdjust="spacing" >Decay</text>
<text x="796.3" y="206.6" font-size="9.7" fill="#5a5a5a" stroke="#5a5a5a" stroke-width="0.38" textLength="33" lengthAdjust="spacing" >Sustain</text>
<text x="833.6" y="206.6" font-size="9.7" fill="#5a5a5a" stroke="#5a5a5a" stroke-width="0.38" textLength="37.1" lengthAdjust="spacing" >Release</text>
<path d="M724.1 233.42A11.8 11.8 0 1 1 735.9 233.42" fill="none" stroke="#5a5a5a" stroke-width="2.2" stroke-linecap="butt"/>
<path d="M724.1 233.42A11.8 11.8 0 0 1 720.7 230.46" fill="none" stroke="#f2f2f2" stroke-width="2.2" stroke-linecap="butt"/>
<path d="M730 223.2L720.7 230.46" stroke="#5a5a5a" stroke-width="2.2"/>
<text x="730" y="242.3" font-size="9.5" fill="#5a5a5a" stroke="#5a5a5a" stroke-width="0.38" text-anchor="middle" textLength="36.2" lengthAdjust="spacing" >80.0 ms</text>
<path d="M767.9 233.42A11.8 11.8 0 1 1 779.7 233.42" fill="none" stroke="#5a5a5a" stroke-width="2.2" stroke-linecap="butt"/>
<path d="M767.9 233.42A11.8 11.8 0 0 1 767.55 233.21" fill="none" stroke="#f2f2f2" stroke-width="2.2" stroke-linecap="butt"/>
<path d="M773.8 223.2L767.55 233.21" stroke="#5a5a5a" stroke-width="2.2"/>
<text x="773.8" y="242.3" font-size="9.5" fill="#5a5a5a" stroke="#5a5a5a" stroke-width="0.38" text-anchor="middle" textLength="36.2" lengthAdjust="spacing" >20.0 ms</text>
<path d="M806.4 233.42A11.8 11.8 0 1 1 818.2 233.42" fill="none" stroke="#5a5a5a" stroke-width="2.2" stroke-linecap="butt"/>
<path d="M812.3 223.2L806.4 233.42" stroke="#5a5a5a" stroke-width="2.2"/>
<text x="812.3" y="242.3" font-size="9.5" fill="#5a5a5a" stroke="#5a5a5a" stroke-width="0.38" text-anchor="middle" textLength="30.4" lengthAdjust="spacing" >0.00 %</text>
<path d="M846.1 233.42A11.8 11.8 0 1 1 857.9 233.42" fill="none" stroke="#5a5a5a" stroke-width="2.2" stroke-linecap="butt"/>
<path d="M846.1 233.42A11.8 11.8 0 0 1 845.06 232.75" fill="none" stroke="#f2f2f2" stroke-width="2.2" stroke-linecap="butt"/>
<path d="M852 223.2L845.06 232.75" stroke="#5a5a5a" stroke-width="2.2"/>
<text x="852" y="242.3" font-size="9.5" fill="#5a5a5a" stroke="#5a5a5a" stroke-width="0.38" text-anchor="middle" textLength="36.4" lengthAdjust="spacing" >50.0 ms</text>
<text x="879.1" y="208.7" font-size="12" fill="#f8f86c" font-weight="bold" stroke="#f8f86c" stroke-width="0.3" textLength="50.8" lengthAdjust="spacing" >SHIFTER</text>
<path d="M891 235.9A8.9 8.9 0 1 1 899.9 227" fill="none" stroke="#5a5a5a" stroke-width="2" stroke-linecap="butt"/>
<path d="M891 227L891 235.9" stroke="#5a5a5a" stroke-width="2"/>
<text x="893.4" y="236.5" font-size="9.5" fill="#5a5a5a" stroke="#5a5a5a" stroke-width="0.38" textLength="34.6" lengthAdjust="spacing" >0.08 Hz</text>
<text x="713.6" y="264.5" font-size="11.5" fill="#f8f86c" font-weight="bold" stroke="#f8f86c" stroke-width="0.3" textLength="67.2" lengthAdjust="spacing" >FILTER ENV</text>
<text x="787.6" y="263.8" font-size="9.7" fill="#5a5a5a" stroke="#5a5a5a" stroke-width="0.38" textLength="20.5" lengthAdjust="spacing" >Freq</text>
<text x="838.9" y="263.8" font-size="9.7" fill="#5a5a5a" stroke="#5a5a5a" stroke-width="0.38" textLength="22.9" lengthAdjust="spacing" >Reso</text>
<rect x="713.6" y="271.8" width="45.8" height="16.4" rx="0" fill="#c8c8c8" />
<text x="716.6" y="284.8" font-size="12.5" fill="#f8f8f8" font-weight="bold" stroke="#f8f8f8" stroke-width="0.3" >Low</text>
<path d="M748 279H756L752 283.5Z" fill="#f8f8f8"/>
<path d="M797 286.8A8.8 8.8 0 1 1 805.8 278" fill="none" stroke="#5a5a5a" stroke-width="2" stroke-linecap="butt"/>
<path d="M797 286.8A8.8 8.8 0 1 1 804.62 273.6" fill="none" stroke="#f4f4f4" stroke-width="2" stroke-linecap="butt"/>
<path d="M797 278L804.62 273.6" stroke="#5a5a5a" stroke-width="2"/>
<text x="798.9" y="287.4" font-size="9.5" fill="#5a5a5a" stroke="#5a5a5a" stroke-width="0.38" textLength="35" lengthAdjust="spacing" >8.90 kH</text>
<path d="M847.8 286.8A8.8 8.8 0 1 1 856.6 278" fill="none" stroke="#5a5a5a" stroke-width="2" stroke-linecap="butt"/>
<path d="M847.8 278L847.8 286.8" stroke="#5a5a5a" stroke-width="2"/>
<text x="850.1" y="287.4" font-size="9.5" fill="#5a5a5a" stroke="#5a5a5a" stroke-width="0.38" textLength="19.1" lengthAdjust="spacing" >0.10</text>
<text x="717.3" y="303.4" font-size="9.7" fill="#5a5a5a" stroke="#5a5a5a" stroke-width="0.38" textLength="30.5" lengthAdjust="spacing" >Attack</text>
<text x="760.1" y="303.4" font-size="9.7" fill="#5a5a5a" stroke="#5a5a5a" stroke-width="0.38" textLength="28.6" lengthAdjust="spacing" >Decay</text>
<text x="796.3" y="303.4" font-size="9.7" fill="#5a5a5a" stroke="#5a5a5a" stroke-width="0.38" textLength="33.7" lengthAdjust="spacing" >Sustain</text>
<text x="833.7" y="303.4" font-size="9.7" fill="#5a5a5a" stroke="#5a5a5a" stroke-width="0.38" textLength="36.6" lengthAdjust="spacing" >Release</text>
<path d="M727 330.42A11.8 11.8 0 1 1 738.8 330.42" fill="none" stroke="#5a5a5a" stroke-width="2.2" stroke-linecap="butt"/>
<path d="M727 330.42A11.8 11.8 0 0 1 722.74 326.21" fill="none" stroke="#f2f2f2" stroke-width="2.2" stroke-linecap="butt"/>
<path d="M732.9 320.2L722.74 326.21" stroke="#5a5a5a" stroke-width="2.2"/>
<text x="732.9" y="339.7" font-size="9.5" fill="#5a5a5a" stroke="#5a5a5a" stroke-width="0.38" text-anchor="middle" textLength="33.1" lengthAdjust="spacing" >100 ms</text>
<path d="M768.1 330.42A11.8 11.8 0 1 1 779.9 330.42" fill="none" stroke="#5a5a5a" stroke-width="2.2" stroke-linecap="butt"/>
<path d="M768.1 330.42A11.8 11.8 0 0 1 763.58 325.74" fill="none" stroke="#f2f2f2" stroke-width="2.2" stroke-linecap="butt"/>
<path d="M774 320.2L763.58 325.74" stroke="#5a5a5a" stroke-width="2.2"/>
<text x="774" y="339.7" font-size="9.5" fill="#5a5a5a" stroke="#5a5a5a" stroke-width="0.38" text-anchor="middle" textLength="33.5" lengthAdjust="spacing" >120 ms</text>
<path d="M807.1 330.42A11.8 11.8 0 1 1 818.9 330.42" fill="none" stroke="#5a5a5a" stroke-width="2.2" stroke-linecap="butt"/>
<path d="M813 320.2L807.1 330.42" stroke="#5a5a5a" stroke-width="2.2"/>
<text x="813" y="339.7" font-size="9.5" fill="#5a5a5a" stroke="#5a5a5a" stroke-width="0.38" text-anchor="middle" textLength="31.5" lengthAdjust="spacing" >0.00 %</text>
<path d="M846.2 330.42A11.8 11.8 0 1 1 858 330.42" fill="none" stroke="#5a5a5a" stroke-width="2.2" stroke-linecap="butt"/>
<path d="M852.1 320.2L846.2 330.42" stroke="#5a5a5a" stroke-width="2.2"/>
<text x="852.1" y="339.7" font-size="9.5" fill="#5a5a5a" stroke="#5a5a5a" stroke-width="0.38" text-anchor="middle" textLength="36.3" lengthAdjust="spacing" >0.00 ms</text>
<text x="883.2" y="265.8" font-size="12" fill="#f8f86c" font-weight="bold" stroke="#f8f86c" stroke-width="0.3" textLength="42.2" lengthAdjust="spacing" >CRUSH</text>
<text x="880.6" y="280.7" font-size="9.7" fill="#5a5a5a" stroke="#5a5a5a" stroke-width="0.38" textLength="24.4" lengthAdjust="spacing" >Ratio</text>
<text x="910.7" y="280.7" font-size="9.7" fill="#5a5a5a" stroke="#5a5a5a" stroke-width="0.38" textLength="17.5" lengthAdjust="spacing" >Bits</text>
<path d="M890 303.9A8.9 8.9 0 1 1 898.9 295" fill="none" stroke="#5a5a5a" stroke-width="2" stroke-linecap="butt"/>
<path d="M890 303.9A8.9 8.9 0 0 1 882.45 299.72" fill="none" stroke="#f2f2f2" stroke-width="2" stroke-linecap="butt"/>
<path d="M890 295L882.45 299.72" stroke="#5a5a5a" stroke-width="2"/>
<text x="892.3" y="304.5" font-size="9.5" fill="#5a5a5a" stroke="#5a5a5a" stroke-width="0.38" textLength="13" lengthAdjust="spacing" >0.2</text>
<path d="M920 303.9A8.9 8.9 0 1 1 928.9 295" fill="none" stroke="#5a5a5a" stroke-width="2" stroke-linecap="butt"/>
<path d="M920 303.9A8.9 8.9 0 0 1 912.45 299.72" fill="none" stroke="#f2f2f2" stroke-width="2" stroke-linecap="butt"/>
<path d="M920 295L912.45 299.72" stroke="#5a5a5a" stroke-width="2"/>
<text x="922.2" y="304.5" font-size="9.5" fill="#5a5a5a" stroke="#5a5a5a" stroke-width="0.38" textLength="5.2" lengthAdjust="spacing" >7</text>
<text x="880.6" y="329.5" font-size="12" fill="#f8f86c" font-weight="bold" stroke="#f8f86c" stroke-width="0.3" textLength="48.2" lengthAdjust="spacing" >REVERB</text>
<path d="M892 354.9A8.9 8.9 0 1 1 900.9 346" fill="none" stroke="#5a5a5a" stroke-width="2" stroke-linecap="butt"/>
<path d="M892 354.9A8.9 8.9 0 0 1 891.22 354.87" fill="none" stroke="#f2f2f2" stroke-width="2" stroke-linecap="butt"/>
<path d="M892 346L891.22 354.87" stroke="#5a5a5a" stroke-width="2"/>
<text x="894.5" y="355.5" font-size="9.5" fill="#5a5a5a" stroke="#5a5a5a" stroke-width="0.38" textLength="33.4" lengthAdjust="spacing" >140 ms</text>
<text x="889.5" y="378.5" font-size="12" fill="#f8f86c" font-weight="bold" stroke="#f8f86c" stroke-width="0.3" textLength="28.2" lengthAdjust="spacing" >GAIN</text>
<path d="M900.1 410.52A11.8 11.8 0 1 1 911.9 410.52" fill="none" stroke="#5a5a5a" stroke-width="2.2" stroke-linecap="butt"/>
<path d="M900.1 410.52A11.8 11.8 0 0 1 896.33 393.53" fill="none" stroke="#f2f2f2" stroke-width="2.2" stroke-linecap="butt"/>
<path d="M906 400.3L896.33 393.53" stroke="#5a5a5a" stroke-width="2.2"/>
<text x="714.6" y="365.9" font-size="12" fill="#f8f86c" font-weight="bold" stroke="#f8f86c" stroke-width="0.3" textLength="16.8" lengthAdjust="spacing" >EQ</text>
<rect x="710.9" y="369.9" width="41.5" height="16.1" rx="0" fill="#c8c8c8" />
<text x="713.5" y="382.6" font-size="12.5" fill="#f8f8f8" font-weight="bold" stroke="#f8f8f8" stroke-width="0.3" >Lo...</text>
<path d="M741.7 376.8H748.7L745.2 381.8Z" fill="#f8f8f8"/>
<path d="M724 411A9 9 0 1 1 733 402" fill="none" stroke="#5a5a5a" stroke-width="2" stroke-linecap="butt"/>
<path d="M724 411A9 9 0 1 1 733 402" fill="none" stroke="#f4f4f4" stroke-width="2" stroke-linecap="butt"/>
<path d="M724 402L733 402" stroke="#5a5a5a" stroke-width="2"/>
<text x="726.6" y="410.4" font-size="8.5" fill="#5a5a5a" stroke="#5a5a5a" stroke-width="0.38" textLength="31.6" lengthAdjust="spacing" >10.0 kHz</text>
<rect x="757" y="352" width="115.3" height="63.9" rx="0" fill="#cccccc" />
<rect x="809.6" y="352" width="17.9" height="63.9" rx="0" fill="#d0d0b8" />
<rect x="778" y="352" width="1.3" height="63.9" rx="0" fill="#f2f2f2" />
<rect x="803.8" y="352" width="1.3" height="63.9" rx="0" fill="#f2f2f2" />
<rect x="831.8" y="352" width="1.3" height="63.9" rx="0" fill="#f2f2f2" />
<rect x="860.7" y="352" width="1.3" height="63.9" rx="0" fill="#f2f2f2" />
<rect x="757" y="382.8" width="115.3" height="1.4" rx="0" fill="#f2f2f2" />
<path d="M757 383.5H809.5C817 385 823 391 827.4 398.8C830 404 833 411 836.4 415.9H757Z" fill="#e6e6e6"/>
<clipPath id="eqc0"><path d="M757 383.5H809.5C817 385 823 391 827.4 398.8C830 404 833 411 836.4 415.9H757Z"/></clipPath>
<rect x="809.6" y="352" width="17.9" height="63.9" rx="0" fill="#e6e6cc" clip-path="url(#eqc0)"/>
<rect x="809.6" y="352.5" width="17.9" height="62.9" fill="none" stroke="#f0f0f0" stroke-width="1"/>
<rect x="757" y="352.1" width="5" height="1.2" rx="0" fill="#f2f2f2" />
<rect x="757" y="358.9" width="5" height="1.2" rx="0" fill="#f2f2f2" />
<rect x="757" y="366.9" width="5" height="1.2" rx="0" fill="#f2f2f2" />
<rect x="757" y="374.8" width="5" height="1.2" rx="0" fill="#f2f2f2" />
<rect x="867" y="352.1" width="5.3" height="1.2" rx="0" fill="#f2f2f2" />
<rect x="867" y="358.9" width="5.3" height="1.2" rx="0" fill="#f2f2f2" />
<rect x="867" y="366.9" width="5.3" height="1.2" rx="0" fill="#f2f2f2" />
<rect x="867" y="374.8" width="5.3" height="1.2" rx="0" fill="#f2f2f2" />
<rect x="867" y="390.8" width="5.3" height="1.2" rx="0" fill="#f2f2f2" />
<rect x="867" y="398.9" width="5.3" height="1.2" rx="0" fill="#f2f2f2" />
<rect x="867" y="406.8" width="5.3" height="1.2" rx="0" fill="#f2f2f2" />
<rect x="867" y="414.6" width="5.3" height="1.2" rx="0" fill="#f2f2f2" />
<text x="860.8" y="355.5" font-size="6" fill="#606060" stroke="#606060" stroke-width="0.38" text-anchor="end" >24</text>
<text x="860.8" y="362" font-size="6" fill="#606060" stroke="#606060" stroke-width="0.38" text-anchor="end" >18</text>
<text x="860.8" y="370" font-size="6" fill="#606060" stroke="#606060" stroke-width="0.38" text-anchor="end" >12</text>
<text x="860.8" y="378" font-size="6" fill="#606060" stroke="#606060" stroke-width="0.38" text-anchor="end" >6</text>
<text x="860.8" y="394" font-size="6" fill="#606060" stroke="#606060" stroke-width="0.38" text-anchor="end" >-6</text>
<text x="860.8" y="402" font-size="6" fill="#606060" stroke="#606060" stroke-width="0.38" text-anchor="end" >-12</text>
<text x="860.8" y="410" font-size="6" fill="#606060" stroke="#606060" stroke-width="0.38" text-anchor="end" >-18</text>
<text x="860.8" y="417.5" font-size="6" fill="#606060" stroke="#606060" stroke-width="0.38" text-anchor="end" >-24</text>
<rect x="707.2" y="421.3" width="228.6" height="23.8" rx="4" fill="#999999" />
<text x="715.4" y="437.6" font-size="12" fill="#f8f86c" font-weight="bold" stroke="#f8f86c" stroke-width="0.3" textLength="34.8" lengthAdjust="spacing" >OSC 2</text>
<rect x="813.7" y="424.3" width="47" height="17.2" rx="0" fill="#fdfd7c" />
<text x="816" y="437.4" font-size="12" fill="#777777" font-weight="bold" stroke="#777777" stroke-width="0.3" >Y</text>
<path d="M849.6 431.9H857.2L853.4 436.5Z" fill="#777777"/>
<rect x="865.7" y="424.3" width="66" height="17.2" rx="0" fill="#c8c8c8" />
<text x="868" y="437.4" font-size="12" fill="#f8f86c" font-weight="bold" stroke="#f8f86c" stroke-width="0.3" >Saw</text>
<path d="M920 431.9H928.2L924.1 436.5Z" fill="#f8f86c"/>
<rect x="707.1" y="448.1" width="228.8" height="46.3" rx="4" fill="#b3b3b3" />
<text x="711.1" y="464.6" font-size="12" fill="#e0e0e0" font-weight="bold" stroke="#e0e0e0" stroke-width="0.3" textLength="31" lengthAdjust="spacing" >Scale</text>
<path d="M747.7 458.9H755.3L751.5 464.1Z" fill="#e8e8e8"/>
<rect x="758.9" y="451.3" width="172.2" height="17.4" rx="4" fill="#cccccc" />
<rect x="712.1" y="473.2" width="219.6" height="16.3" rx="4" fill="#cccccc" />
<rect x="844" y="452.4" width="2" height="16" rx="0" fill="#f5f5f5" />
<rect x="882.6" y="474.1" width="2" height="15" rx="0" fill="#f5f5f5" />
<text x="776" y="463.7" font-size="10.5" fill="#555555" font-weight="bold" stroke="#555555" stroke-width="0.3" >C3</text>
<text x="817.2" y="463.7" font-size="12" fill="#5a5a5a" font-weight="bold" stroke="#5a5a5a" stroke-width="0.3" textLength="46.2" lengthAdjust="spacing" >Octaves</text>
<text x="896.2" y="463.7" font-size="10.5" fill="#555555" font-weight="bold" stroke="#555555" stroke-width="0.3" >C4</text>
<text x="730.5" y="484.9" font-size="10.5" fill="#555555" font-weight="bold" stroke="#555555" stroke-width="0.3" >100</text>
<text x="817.9" y="484.9" font-size="12" fill="#5a5a5a" font-weight="bold" stroke="#5a5a5a" stroke-width="0.3" textLength="44.4" lengthAdjust="spacing" >Velocity</text>
<text x="888.6" y="484.9" font-size="10.5" fill="#555555" font-weight="bold" stroke="#555555" stroke-width="0.3" >100</text>
<rect x="707.1" y="496.2" width="166.6" height="51.8" rx="4" fill="#b3b3b3" />
<rect x="877.4" y="496.1" width="58.2" height="52.7" rx="4" fill="#b3b3b3" />
<rect x="707.5" y="551.7" width="166" height="95.8" rx="4" fill="#b3b3b3" />
<rect x="877.4" y="551.5" width="58.4" height="63.5" rx="4" fill="#b3b3b3" />
<rect x="877.5" y="618.4" width="58.3" height="46.2" rx="4" fill="#b3b3b3" />
<rect x="877.5" y="667.7" width="58.3" height="53.7" rx="4" fill="#b3b3b3" />
<rect x="707.3" y="653.2" width="166.2" height="67.6" rx="4" fill="#b3b3b3" />
<text x="717" y="505.8" font-size="9.7" fill="#5a5a5a" stroke="#5a5a5a" stroke-width="0.38" textLength="30.5" lengthAdjust="spacing" >Attack</text>
<text x="759" y="505.8" font-size="9.7" fill="#5a5a5a" stroke="#5a5a5a" stroke-width="0.38" textLength="28.6" lengthAdjust="spacing" >Decay</text>
<text x="796.3" y="505.8" font-size="9.7" fill="#5a5a5a" stroke="#5a5a5a" stroke-width="0.38" textLength="33" lengthAdjust="spacing" >Sustain</text>
<text x="833.6" y="505.8" font-size="9.7" fill="#5a5a5a" stroke="#5a5a5a" stroke-width="0.38" textLength="37.1" lengthAdjust="spacing" >Release</text>
<path d="M727.1 532.62A11.8 11.8 0 1 1 738.9 532.62" fill="none" stroke="#5a5a5a" stroke-width="2.2" stroke-linecap="butt"/>
<path d="M727.1 532.62A11.8 11.8 0 0 1 726.57 532.3" fill="none" stroke="#f2f2f2" stroke-width="2.2" stroke-linecap="butt"/>
<path d="M733 522.4L726.57 532.3" stroke="#5a5a5a" stroke-width="2.2"/>
<text x="733" y="541.5" font-size="9.5" fill="#5a5a5a" stroke="#5a5a5a" stroke-width="0.38" text-anchor="middle" textLength="35.6" lengthAdjust="spacing" >15.0 ms</text>
<path d="M767.9 532.62A11.8 11.8 0 1 1 779.7 532.62" fill="none" stroke="#5a5a5a" stroke-width="2.2" stroke-linecap="butt"/>
<path d="M767.9 532.62A11.8 11.8 0 0 1 767.55 532.41" fill="none" stroke="#f2f2f2" stroke-width="2.2" stroke-linecap="butt"/>
<path d="M773.8 522.4L767.55 532.41" stroke="#5a5a5a" stroke-width="2.2"/>
<text x="773.8" y="541.5" font-size="9.5" fill="#5a5a5a" stroke="#5a5a5a" stroke-width="0.38" text-anchor="middle" textLength="36.2" lengthAdjust="spacing" >20.0 ms</text>
<path d="M806.4 532.62A11.8 11.8 0 1 1 818.2 532.62" fill="none" stroke="#5a5a5a" stroke-width="2.2" stroke-linecap="butt"/>
<path d="M812.3 522.4L806.4 532.62" stroke="#5a5a5a" stroke-width="2.2"/>
<text x="812.3" y="541.5" font-size="9.5" fill="#5a5a5a" stroke="#5a5a5a" stroke-width="0.38" text-anchor="middle" textLength="30.4" lengthAdjust="spacing" >0.00 %</text>
<path d="M846.1 532.62A11.8 11.8 0 1 1 857.9 532.62" fill="none" stroke="#5a5a5a" stroke-width="2.2" stroke-linecap="butt"/>
<path d="M846.1 532.62A11.8 11.8 0 0 1 845.06 531.95" fill="none" stroke="#f2f2f2" stroke-width="2.2" stroke-linecap="butt"/>
<path d="M852 522.4L845.06 531.95" stroke="#5a5a5a" stroke-width="2.2"/>
<text x="852" y="541.5" font-size="9.5" fill="#5a5a5a" stroke="#5a5a5a" stroke-width="0.38" text-anchor="middle" textLength="36.4" lengthAdjust="spacing" >50.0 ms</text>
<text x="881.3" y="509.5" font-size="12" fill="#f8f86c" font-weight="bold" stroke="#f8f86c" stroke-width="0.3" textLength="50.8" lengthAdjust="spacing" >SHIFTER</text>
<path d="M893 540.9A8.9 8.9 0 1 1 901.9 532" fill="none" stroke="#5a5a5a" stroke-width="2" stroke-linecap="butt"/>
<path d="M893 540.9A8.9 8.9 0 0 1 887.77 524.8" fill="none" stroke="#f2f2f2" stroke-width="2" stroke-linecap="butt"/>
<path d="M893 532L887.77 524.8" stroke="#5a5a5a" stroke-width="2"/>
<text x="895.4" y="541.5" font-size="9.5" fill="#5a5a5a" stroke="#5a5a5a" stroke-width="0.38" textLength="32" lengthAdjust="spacing" >928 Hz</text>
<text x="713.6" y="564.5" font-size="11.5" fill="#f8f86c" font-weight="bold" stroke="#f8f86c" stroke-width="0.3" textLength="67.2" lengthAdjust="spacing" >FILTER ENV</text>
<text x="787.6" y="563.8" font-size="9.7" fill="#5a5a5a" stroke="#5a5a5a" stroke-width="0.38" textLength="20.5" lengthAdjust="spacing" >Freq</text>
<text x="838.9" y="563.8" font-size="9.7" fill="#5a5a5a" stroke="#5a5a5a" stroke-width="0.38" textLength="22.9" lengthAdjust="spacing" >Reso</text>
<rect x="711.8" y="571.8" width="47.6" height="16.4" rx="0" fill="#c8c8c8" />
<text x="714.4" y="584.8" font-size="12.5" fill="#f8f8f8" font-weight="bold" stroke="#f8f8f8" stroke-width="0.3" >None</text>
<path d="M748 579H756L752 583.5Z" fill="#f8f8f8"/>
<path d="M797 586.8A8.8 8.8 0 1 1 805.8 578" fill="none" stroke="#5a5a5a" stroke-width="2" stroke-linecap="butt"/>
<path d="M797 586.8A8.8 8.8 0 1 1 805.8 578" fill="none" stroke="#f4f4f4" stroke-width="2" stroke-linecap="butt"/>
<path d="M797 578L805.8 578" stroke="#5a5a5a" stroke-width="2"/>
<text x="798.9" y="587.4" font-size="9.5" fill="#5a5a5a" stroke="#5a5a5a" stroke-width="0.38" textLength="35" lengthAdjust="spacing" >10.0 kH</text>
<path d="M847.8 586.8A8.8 8.8 0 1 1 856.6 578" fill="none" stroke="#5a5a5a" stroke-width="2" stroke-linecap="butt"/>
<path d="M847.8 578L847.8 586.8" stroke="#5a5a5a" stroke-width="2"/>
<text x="850.1" y="587.4" font-size="9.5" fill="#5a5a5a" stroke="#5a5a5a" stroke-width="0.38" textLength="19.1" lengthAdjust="spacing" >0.10</text>
<text x="717.3" y="605.4" font-size="9.7" fill="#5a5a5a" stroke="#5a5a5a" stroke-width="0.38" textLength="30.5" lengthAdjust="spacing" >Attack</text>
<text x="760.1" y="605.4" font-size="9.7" fill="#5a5a5a" stroke="#5a5a5a" stroke-width="0.38" textLength="28.6" lengthAdjust="spacing" >Decay</text>
<text x="796.3" y="605.4" font-size="9.7" fill="#5a5a5a" stroke="#5a5a5a" stroke-width="0.38" textLength="33.7" lengthAdjust="spacing" >Sustain</text>
<text x="833.7" y="605.4" font-size="9.7" fill="#5a5a5a" stroke="#5a5a5a" stroke-width="0.38" textLength="36.6" lengthAdjust="spacing" >Release</text>
<path d="M727 632.42A11.8 11.8 0 1 1 738.8 632.42" fill="none" stroke="#5a5a5a" stroke-width="2.2" stroke-linecap="butt"/>
<path d="M727 632.42A11.8 11.8 0 0 1 722.74 628.21" fill="none" stroke="#f2f2f2" stroke-width="2.2" stroke-linecap="butt"/>
<path d="M732.9 622.2L722.74 628.21" stroke="#5a5a5a" stroke-width="2.2"/>
<text x="732.9" y="641.7" font-size="9.5" fill="#5a5a5a" stroke="#5a5a5a" stroke-width="0.38" text-anchor="middle" textLength="33.1" lengthAdjust="spacing" >100 ms</text>
<path d="M768.1 632.42A11.8 11.8 0 1 1 779.9 632.42" fill="none" stroke="#5a5a5a" stroke-width="2.2" stroke-linecap="butt"/>
<path d="M774 622.2L768.1 632.42" stroke="#5a5a5a" stroke-width="2.2"/>
<text x="774" y="641.7" font-size="9.5" fill="#5a5a5a" stroke="#5a5a5a" stroke-width="0.38" text-anchor="middle" textLength="36.3" lengthAdjust="spacing" >0.00 ms</text>
<path d="M807.1 632.42A11.8 11.8 0 1 1 818.9 632.42" fill="none" stroke="#5a5a5a" stroke-width="2.2" stroke-linecap="butt"/>
<path d="M813 622.2L807.1 632.42" stroke="#5a5a5a" stroke-width="2.2"/>
<text x="813" y="641.7" font-size="9.5" fill="#5a5a5a" stroke="#5a5a5a" stroke-width="0.38" text-anchor="middle" textLength="31.5" lengthAdjust="spacing" >0.00 %</text>
<path d="M846.2 632.42A11.8 11.8 0 1 1 858 632.42" fill="none" stroke="#5a5a5a" stroke-width="2.2" stroke-linecap="butt"/>
<path d="M852.1 622.2L846.2 632.42" stroke="#5a5a5a" stroke-width="2.2"/>
<text x="852.1" y="641.7" font-size="9.5" fill="#5a5a5a" stroke="#5a5a5a" stroke-width="0.38" text-anchor="middle" textLength="36.3" lengthAdjust="spacing" >0.00 ms</text>
<text x="885.2" y="564.8" font-size="12" fill="#f8f86c" font-weight="bold" stroke="#f8f86c" stroke-width="0.3" textLength="42.2" lengthAdjust="spacing" >CRUSH</text>
<text x="882.6" y="579.7" font-size="9.7" fill="#5a5a5a" stroke="#5a5a5a" stroke-width="0.38" textLength="24.4" lengthAdjust="spacing" >Ratio</text>
<text x="912.7" y="579.7" font-size="9.7" fill="#5a5a5a" stroke="#5a5a5a" stroke-width="0.38" textLength="17.5" lengthAdjust="spacing" >Bits</text>
<path d="M892 602.9A8.9 8.9 0 1 1 900.9 594" fill="none" stroke="#5a5a5a" stroke-width="2" stroke-linecap="butt"/>
<path d="M892 594L892 602.9" stroke="#5a5a5a" stroke-width="2"/>
<text x="894.3" y="603.5" font-size="9.5" fill="#5a5a5a" stroke="#5a5a5a" stroke-width="0.38" textLength="14.3" lengthAdjust="spacing" >0.0</text>
<path d="M922 602.9A8.9 8.9 0 1 1 930.9 594" fill="none" stroke="#5a5a5a" stroke-width="2" stroke-linecap="butt"/>
<path d="M922 602.9A8.9 8.9 0 0 1 913.69 590.81" fill="none" stroke="#f2f2f2" stroke-width="2" stroke-linecap="butt"/>
<path d="M922 594L913.69 590.81" stroke="#5a5a5a" stroke-width="2"/>
<text x="924.8" y="603.5" font-size="9.5" fill="#5a5a5a" stroke="#5a5a5a" stroke-width="0.38" textLength="10" lengthAdjust="spacing" >13</text>
<text x="882.1" y="632.5" font-size="12" fill="#f8f86c" font-weight="bold" stroke="#f8f86c" stroke-width="0.3" textLength="48.2" lengthAdjust="spacing" >REVERB</text>
<path d="M893.5 657.9A8.9 8.9 0 1 1 902.4 649" fill="none" stroke="#5a5a5a" stroke-width="2" stroke-linecap="butt"/>
<path d="M893.5 649L893.5 657.9" stroke="#5a5a5a" stroke-width="2"/>
<text x="896" y="658.5" font-size="9.5" fill="#5a5a5a" stroke="#5a5a5a" stroke-width="0.38" textLength="36.5" lengthAdjust="spacing" >0.00 ms</text>
<text x="890.5" y="682" font-size="12" fill="#f8f86c" font-weight="bold" stroke="#f8f86c" stroke-width="0.3" textLength="28.2" lengthAdjust="spacing" >GAIN</text>
<path d="M901.1 714.02A11.8 11.8 0 1 1 912.9 714.02" fill="none" stroke="#5a5a5a" stroke-width="2.2" stroke-linecap="butt"/>
<path d="M901.1 714.02A11.8 11.8 0 0 1 895.38 701.75" fill="none" stroke="#f2f2f2" stroke-width="2.2" stroke-linecap="butt"/>
<path d="M907 703.8L895.38 701.75" stroke="#5a5a5a" stroke-width="2.2"/>
<text x="716.7" y="666.9" font-size="12" fill="#f8f86c" font-weight="bold" stroke="#f8f86c" stroke-width="0.3" textLength="16.8" lengthAdjust="spacing" >EQ</text>
<rect x="710.9" y="672.9" width="41.5" height="16.1" rx="0" fill="#c8c8c8" />
<text x="713.5" y="685.6" font-size="12.5" fill="#f8f8f8" font-weight="bold" stroke="#f8f8f8" stroke-width="0.3" >Ba...</text>
<path d="M741.7 679.8H748.7L745.2 684.8Z" fill="#f8f8f8"/>
<path d="M724 714A9 9 0 1 1 733 705" fill="none" stroke="#5a5a5a" stroke-width="2" stroke-linecap="butt"/>
<path d="M724 714A9 9 0 1 1 733 705" fill="none" stroke="#f4f4f4" stroke-width="2" stroke-linecap="butt"/>
<path d="M724 705L733 705" stroke="#5a5a5a" stroke-width="2"/>
<text x="726.6" y="713.4" font-size="8.5" fill="#5a5a5a" stroke="#5a5a5a" stroke-width="0.38" textLength="31.6" lengthAdjust="spacing" >10.0 kHz</text>
<rect x="757" y="655" width="115.3" height="63.9" rx="0" fill="#cccccc" />
<rect x="809.6" y="655" width="17.9" height="63.9" rx="0" fill="#d0d0b8" />
<rect x="778" y="655" width="1.3" height="63.9" rx="0" fill="#f2f2f2" />
<rect x="803.8" y="655" width="1.3" height="63.9" rx="0" fill="#f2f2f2" />
<rect x="831.8" y="655" width="1.3" height="63.9" rx="0" fill="#f2f2f2" />
<rect x="860.7" y="655" width="1.3" height="63.9" rx="0" fill="#f2f2f2" />
<rect x="757" y="685.8" width="115.3" height="1.4" rx="0" fill="#f2f2f2" />
<path d="M780.3 718.9C792 705 802 693 810.9 687.4H828.5C838 693 849 706 859.9 718.9Z" fill="#e6e6e6"/>
<clipPath id="eqc303"><path d="M780.3 718.9C792 705 802 693 810.9 687.4H828.5C838 693 849 706 859.9 718.9Z"/></clipPath>
<rect x="809.6" y="655" width="17.9" height="63.9" rx="0" fill="#e6e6cc" clip-path="url(#eqc303)"/>
<rect x="809.6" y="655.5" width="17.9" height="62.9" fill="none" stroke="#f0f0f0" stroke-width="1"/>
<rect x="757" y="655.1" width="5" height="1.2" rx="0" fill="#f2f2f2" />
<rect x="757" y="661.9" width="5" height="1.2" rx="0" fill="#f2f2f2" />
<rect x="757" y="669.9" width="5" height="1.2" rx="0" fill="#f2f2f2" />
<rect x="757" y="677.8" width="5" height="1.2" rx="0" fill="#f2f2f2" />
<rect x="867" y="655.1" width="5.3" height="1.2" rx="0" fill="#f2f2f2" />
<rect x="867" y="661.9" width="5.3" height="1.2" rx="0" fill="#f2f2f2" />
<rect x="867" y="669.9" width="5.3" height="1.2" rx="0" fill="#f2f2f2" />
<rect x="867" y="677.8" width="5.3" height="1.2" rx="0" fill="#f2f2f2" />
<rect x="867" y="693.8" width="5.3" height="1.2" rx="0" fill="#f2f2f2" />
<rect x="867" y="701.9" width="5.3" height="1.2" rx="0" fill="#f2f2f2" />
<rect x="867" y="709.8" width="5.3" height="1.2" rx="0" fill="#f2f2f2" />
<rect x="867" y="717.6" width="5.3" height="1.2" rx="0" fill="#f2f2f2" />
<text x="860.8" y="658.5" font-size="6" fill="#606060" stroke="#606060" stroke-width="0.38" text-anchor="end" >24</text>
<text x="860.8" y="665" font-size="6" fill="#606060" stroke="#606060" stroke-width="0.38" text-anchor="end" >18</text>
<text x="860.8" y="673" font-size="6" fill="#606060" stroke="#606060" stroke-width="0.38" text-anchor="end" >12</text>
<text x="860.8" y="681" font-size="6" fill="#606060" stroke="#606060" stroke-width="0.38" text-anchor="end" >6</text>
<text x="860.8" y="697" font-size="6" fill="#606060" stroke="#606060" stroke-width="0.38" text-anchor="end" >-6</text>
<text x="860.8" y="705" font-size="6" fill="#606060" stroke="#606060" stroke-width="0.38" text-anchor="end" >-12</text>
<text x="860.8" y="713" font-size="6" fill="#606060" stroke="#606060" stroke-width="0.38" text-anchor="end" >-18</text>
<text x="860.8" y="720.5" font-size="6" fill="#606060" stroke="#606060" stroke-width="0.38" text-anchor="end" >-24</text>
<rect x="942.2" y="64.2" width="153.6" height="29.5" rx="4" fill="#999999" />
<text x="951.4" y="83.3" font-size="16" fill="#e6e6e6" font-weight="bold" stroke="#e6e6e6" stroke-width="0.3" textLength="83.5" lengthAdjust="spacing" >MIDI SEND</text>
<path d="M1041.5 78H1054.5M1050 73.8L1054.8 78L1050 82.2" fill="none" stroke="#e6e6e6" stroke-width="1.8"/>
<rect x="943.2" y="97.1" width="153.5" height="113.5" rx="5" fill="#e6e6e6" />
<text x="954.5" y="116.6" font-size="12" fill="#a9a9a9" font-weight="bold" stroke="#a9a9a9" stroke-width="0.3" textLength="26" lengthAdjust="spacing" >Note</text>
<rect x="947.6" y="121.6" width="45.6" height="16.5" rx="0" fill="#a9a9a9" />
<text x="950" y="134.5" font-size="12.5" fill="#e6e6e6" font-weight="bold" stroke="#e6e6e6" stroke-width="0.3" >X</text>
<path d="M982.1 128.6H990.1L986.1 133.9Z" fill="#5ac8fa"/>
<text x="951" y="184.6" font-size="12" fill="#a9a9a9" font-weight="bold" stroke="#a9a9a9" stroke-width="0.3" textLength="28.7" lengthAdjust="spacing" >Send</text>
<path d="M987.6 175.3V184.6M984.4 181.3L987.6 184.8L990.8 181.3" fill="none" stroke="#a9a9a9" stroke-width="1.2"/>
<rect x="947.6" y="189.6" width="45.6" height="16.7" rx="0" fill="#5ac8fa" />
<text x="950.5" y="202.8" font-size="12" fill="#383838" font-weight="bold" stroke="#383838" stroke-width="0.3" >H1</text>
<path d="M982 197.1H990L986 201.8Z" fill="#f0f0f0"/>
<rect x="998.2" y="100" width="44.5" height="106.6" rx="4" fill="#b3b3b3" />
<rect x="999" y="154.7" width="42.9" height="41" rx="0" fill="#a6dcf0" />
<rect x="999" y="154.7" width="42.9" height="1.8" rx="0" fill="#5ac8fa" />
<rect x="999" y="193.9" width="42.9" height="1.8" rx="0" fill="#5ac8fa" />
<text x="1005.2" y="116.6" font-size="12" fill="#e6e6e6" font-weight="bold" stroke="#e6e6e6" stroke-width="0.3" textLength="27" lengthAdjust="spacing" >Velo.</text>
<text x="1003" y="135.7" font-size="11" fill="#999999" font-weight="bold" stroke="#999999" stroke-width="0.3" >61</text>
<text x="1003.4" y="161.7" font-size="11" fill="#999999" font-weight="bold" stroke="#999999" stroke-width="0.3" >14</text>
<rect x="1047.3" y="100" width="44.6" height="106.6" rx="4" fill="#b3b3b3" />
<rect x="1048.1" y="108.4" width="43" height="31.4" rx="0" fill="#a6dcf0" />
<rect x="1048.1" y="108.4" width="43" height="1.8" rx="0" fill="#5ac8fa" />
<rect x="1048.1" y="138" width="43" height="1.8" rx="0" fill="#5ac8fa" />
<text x="1054.3" y="116.6" font-size="12" fill="#e6e6e6" font-weight="bold" stroke="#e6e6e6" stroke-width="0.3" textLength="27" lengthAdjust="spacing" >Dura.</text>
<text x="1051.9" y="135.7" font-size="11" fill="#999999" font-weight="bold" stroke="#999999" stroke-width="0.3" >2764</text>
<text x="1052.3" y="161.7" font-size="11" fill="#999999" font-weight="bold" stroke="#999999" stroke-width="0.3" >1917</text>
<rect x="943.2" y="214.3" width="153.5" height="113.5" rx="5" fill="#e6e6e6" />
<text x="954.5" y="233.8" font-size="12" fill="#a9a9a9" font-weight="bold" stroke="#a9a9a9" stroke-width="0.3" textLength="26" lengthAdjust="spacing" >Note</text>
<rect x="947.6" y="238.8" width="45.6" height="16.5" rx="0" fill="#a9a9a9" />
<text x="950" y="251.7" font-size="12.5" fill="#e6e6e6" font-weight="bold" stroke="#e6e6e6" stroke-width="0.3" >Y</text>
<path d="M982.1 245.8H990.1L986.1 251.1Z" fill="#5ac8fa"/>
<text x="951" y="301.8" font-size="12" fill="#a9a9a9" font-weight="bold" stroke="#a9a9a9" stroke-width="0.3" textLength="28.7" lengthAdjust="spacing" >Send</text>
<path d="M987.6 292.5V301.8M984.4 298.5L987.6 302L990.8 298.5" fill="none" stroke="#a9a9a9" stroke-width="1.2"/>
<rect x="947.6" y="306.8" width="45.6" height="16.7" rx="0" fill="#5ac8fa" />
<text x="950.5" y="320" font-size="12" fill="#383838" font-weight="bold" stroke="#383838" stroke-width="0.3" >H4</text>
<path d="M982 314.3H990L986 319Z" fill="#f0f0f0"/>
<rect x="998.2" y="217.2" width="44.5" height="106.6" rx="4" fill="#b3b3b3" />
<rect x="999" y="243.2" width="42.9" height="41.8" rx="0" fill="#a6dcf0" />
<rect x="999" y="243.2" width="42.9" height="1.8" rx="0" fill="#5ac8fa" />
<rect x="999" y="283.2" width="42.9" height="1.8" rx="0" fill="#5ac8fa" />
<text x="1005.2" y="233.8" font-size="12" fill="#e6e6e6" font-weight="bold" stroke="#e6e6e6" stroke-width="0.3" textLength="27" lengthAdjust="spacing" >Velo.</text>
<text x="1003" y="251" font-size="11" fill="#999999" font-weight="bold" stroke="#999999" stroke-width="0.3" >94</text>
<text x="1005" y="278.8" font-size="11" fill="#999999" font-weight="bold" stroke="#999999" stroke-width="0.3" >46</text>
<rect x="1047.3" y="217.2" width="44.6" height="106.6" rx="4" fill="#b3b3b3" />
<rect x="1048.1" y="266.9" width="43" height="32" rx="0" fill="#a6dcf0" />
<rect x="1048.1" y="266.9" width="43" height="1.8" rx="0" fill="#5ac8fa" />
<rect x="1048.1" y="297.1" width="43" height="1.8" rx="0" fill="#5ac8fa" />
<text x="1054.3" y="233.8" font-size="12" fill="#e6e6e6" font-weight="bold" stroke="#e6e6e6" stroke-width="0.3" textLength="27" lengthAdjust="spacing" >Dura.</text>
<text x="1051.9" y="251" font-size="11" fill="#999999" font-weight="bold" stroke="#999999" stroke-width="0.3" >1563</text>
<text x="1051.9" y="278.8" font-size="11" fill="#999999" font-weight="bold" stroke="#999999" stroke-width="0.3" >692</text>
<rect x="943.4" y="330.9" width="153.4" height="178.5" rx="4" fill="#999999" />
<text x="963.2" y="350.8" font-size="16" fill="#e6e6e6" font-weight="bold" stroke="#e6e6e6" stroke-width="0.3" textLength="49.1" lengthAdjust="spacing" >GRIPS</text>
<rect x="1022.9" y="338" width="58" height="14.6" rx="2" fill="#e6e6e6" />
<text x="1051.9" y="348.8" font-size="9.5" fill="#111111" font-weight="bold" stroke="#111111" stroke-width="0.3" text-anchor="middle" textLength="21.8" lengthAdjust="spacing" >GRIP</text>
<rect x="959.2" y="356.4" width="57.3" height="17.4" rx="0" fill="#fdfd7c" />
<text x="962.8" y="369.6" font-size="12.5" fill="#808080" font-weight="bold" stroke="#808080" stroke-width="0.3" >None</text>
<path d="M1005.2 363.9H1012.3L1008.75 368.2Z" fill="#808080"/>
<rect x="959.2" y="376.2" width="57.3" height="19.6" rx="2.5" fill="#e6e6e6" />
<path d="M982.95 423.61A11.9 11.9 0 1 1 994.85 423.61" fill="none" stroke="#e6e6e6" stroke-width="1.6" stroke-linecap="butt"/>
<path d="M988.9 413.3L983.5 423.9" stroke="#e6e6e6" stroke-width="1.6"/>
<rect x="1023.3" y="356.4" width="57.3" height="17.4" rx="0" fill="#fdfd7c" />
<text x="1026.9" y="369.6" font-size="12.5" fill="#808080" font-weight="bold" stroke="#808080" stroke-width="0.3" >None</text>
<path d="M1069.3 363.9H1076.4L1072.85 368.2Z" fill="#808080"/>
<rect x="1023.3" y="376.2" width="57.3" height="19.6" rx="2.5" fill="#e6e6e6" />
<path d="M1045.05 423.61A11.9 11.9 0 1 1 1056.95 423.61" fill="none" stroke="#e6e6e6" stroke-width="1.6" stroke-linecap="butt"/>
<path d="M1051 413.3L1045.6 423.9" stroke="#e6e6e6" stroke-width="1.6"/>
<rect x="959.2" y="432.5" width="57.3" height="17.4" rx="0" fill="#fdfd7c" />
<text x="962.8" y="445.7" font-size="12.5" fill="#808080" font-weight="bold" stroke="#808080" stroke-width="0.3" >None</text>
<path d="M1005.2 440H1012.3L1008.75 444.3Z" fill="#808080"/>
<rect x="959.2" y="452.3" width="57.3" height="19.6" rx="2.5" fill="#e6e6e6" />
<path d="M982.95 499.71A11.9 11.9 0 1 1 994.85 499.71" fill="none" stroke="#e6e6e6" stroke-width="1.6" stroke-linecap="butt"/>
<path d="M988.9 489.4L983.5 500" stroke="#e6e6e6" stroke-width="1.6"/>
<rect x="1023.3" y="432.5" width="57.3" height="17.4" rx="0" fill="#fdfd7c" />
<text x="1026.9" y="445.7" font-size="12.5" fill="#808080" font-weight="bold" stroke="#808080" stroke-width="0.3" >None</text>
<path d="M1069.3 440H1076.4L1072.85 444.3Z" fill="#808080"/>
<rect x="1023.3" y="452.3" width="57.3" height="19.6" rx="2.5" fill="#e6e6e6" />
<path d="M1045.05 499.71A11.9 11.9 0 1 1 1056.95 499.71" fill="none" stroke="#e6e6e6" stroke-width="1.6" stroke-linecap="butt"/>
<path d="M1051 489.4L1045.6 500" stroke="#e6e6e6" stroke-width="1.6"/>
<rect x="943.2" y="513.3" width="73.5" height="126.3" rx="4" fill="#999999" />
<text x="953.6" y="532.7" font-size="16" fill="#e6e6e6" font-weight="bold" stroke="#e6e6e6" stroke-width="0.3" textLength="55.3" lengthAdjust="spacing" >MATHS</text>
<text x="953.2" y="544.8" font-size="9.9" fill="#e6e6e6" font-weight="bold" stroke="#e6e6e6" stroke-width="0.3" textLength="54.8" lengthAdjust="spacing" >120.00 BPM</text>
<rect x="958.4" y="549.6" width="45.3" height="16.8" rx="0" fill="#e6e6e6" />
<text x="981" y="562.1" font-size="12.5" fill="#555555" stroke="#555555" stroke-width="0.38" text-anchor="middle" >1 ×</text>
<path d="M980.5 570.5V579M977.3 575.8L980.5 579.3L983.7 575.8" fill="none" stroke="#e6e6e6" stroke-width="1.3"/>
<rect x="958.4" y="583.7" width="45.3" height="16.8" rx="0" fill="#e6e6e6" />
<text x="961.4" y="595.8" font-size="12.5" fill="#555555" font-weight="bold" stroke="#555555" stroke-width="0.3" textLength="40.3" lengthAdjust="spacing" >500 ms</text>
<rect x="1020.2" y="513.3" width="76.6" height="126.3" rx="4" fill="#999999" />
<text x="1037.5" y="532.7" font-size="16" fill="#e6e6e6" font-weight="bold" stroke="#e6e6e6" stroke-width="0.3" textLength="40.3" lengthAdjust="spacing" >DATA</text>
<rect x="1036.3" y="538.2" width="44.4" height="16.6" rx="2" fill="#e6e6e6" />
<text x="1058.5" y="550.3" font-size="10.5" fill="#b0b0b0" font-weight="bold" stroke="#b0b0b0" stroke-width="0.3" text-anchor="middle" textLength="23.7" lengthAdjust="spacing" >Clear</text>
<rect x="1036.3" y="558.3" width="44.4" height="16.8" rx="2" fill="#e6e6e6" />
<text x="1058.5" y="570.4" font-size="10.5" fill="#b0b0b0" font-weight="bold" stroke="#b0b0b0" stroke-width="0.3" text-anchor="middle" textLength="30.5" lengthAdjust="spacing" >Coeffs</text>
<rect x="1036.3" y="578" width="44.4" height="17" rx="2" fill="#e6e6e6" />
<text x="1058.5" y="590.1" font-size="10.5" fill="#b0b0b0" font-weight="bold" stroke="#b0b0b0" stroke-width="0.3" text-anchor="middle" textLength="35.5" lengthAdjust="spacing" >Bounds</text>
<rect x="1024.5" y="599.3" width="68.3" height="35.5" rx="4" fill="#e6e6e6" />
<text x="1026.2" y="609.7" font-size="9.7" fill="#555555" stroke="#555555" stroke-width="0.38" textLength="61.5" lengthAdjust="spacing" >1. 0. -1.4 0. 1.</text>
<text x="1026.2" y="621.8" font-size="9.7" fill="#555555" stroke="#555555" stroke-width="0.38" textLength="57.5" lengthAdjust="spacing" >0. 0. 0.3 0. 0.</text>
<text x="1026.2" y="632.7" font-size="9.7" fill="#555555" stroke="#555555" stroke-width="0.38" textLength="19.5" lengthAdjust="spacing" >0. 0.</text>
<rect x="943.4" y="643.5" width="153.4" height="77.1" rx="4" fill="#999999" />
<text x="950" y="660.8" font-size="16" fill="#e6e6e6" font-weight="bold" stroke="#e6e6e6" stroke-width="0.3" textLength="64.4" lengthAdjust="spacing" >R POINT</text>
<text x="950.5" y="683.8" font-size="12" fill="#00ff8c" font-weight="bold" stroke="#00ff8c" stroke-width="0.3" textLength="14.4" lengthAdjust="spacing" >Rx</text>
<rect x="968.4" y="672.5" width="27.6" height="13.7" rx="0" fill="#00ff8c" />
<text x="982.2" y="683.4" font-size="10" fill="#333333" font-weight="bold" stroke="#333333" stroke-width="0.3" text-anchor="middle" >13</text>
<text x="950.5" y="707.2" font-size="12" fill="#00ff8c" font-weight="bold" stroke="#00ff8c" stroke-width="0.3" textLength="14.4" lengthAdjust="spacing" >Ry</text>
<rect x="968.4" y="696.6" width="27.6" height="13.7" rx="0" fill="#00ff8c" />
<text x="982.2" y="707.3" font-size="10" fill="#333333" font-weight="bold" stroke="#333333" stroke-width="0.3" text-anchor="middle" >25</text>
<path d="M1010.2 687A8.8 8.8 0 0 1 1002.22 681.92" fill="none" stroke="#444444" stroke-width="2" stroke-linecap="butt"/>
<path d="M1002.22 681.92A8.8 8.8 0 1 1 1019 678.2" fill="none" stroke="#00ff8c" stroke-width="2" stroke-linecap="butt"/>
<path d="M1010.2 678.2L1002.22 681.92" stroke="#00ff8c" stroke-width="2"/>
<path d="M1010.2 711.7A8.8 8.8 0 0 1 1006.48 710.88" fill="none" stroke="#444444" stroke-width="2" stroke-linecap="butt"/>
<path d="M1006.48 710.88A8.8 8.8 0 1 1 1019 702.9" fill="none" stroke="#00ff8c" stroke-width="2" stroke-linecap="butt"/>
<path d="M1010.2 702.9L1006.48 710.88" stroke="#00ff8c" stroke-width="2"/>
<rect x="1025.4" y="648" width="66.6" height="67" rx="2" fill="#00ff8c" />
<path d="M1027.9 650.8L1089.1 711.7M1089.1 650.8L1027.9 711.7" stroke="#3a3a3a" stroke-width="1.1"/>
</g>
</svg></body></html>
